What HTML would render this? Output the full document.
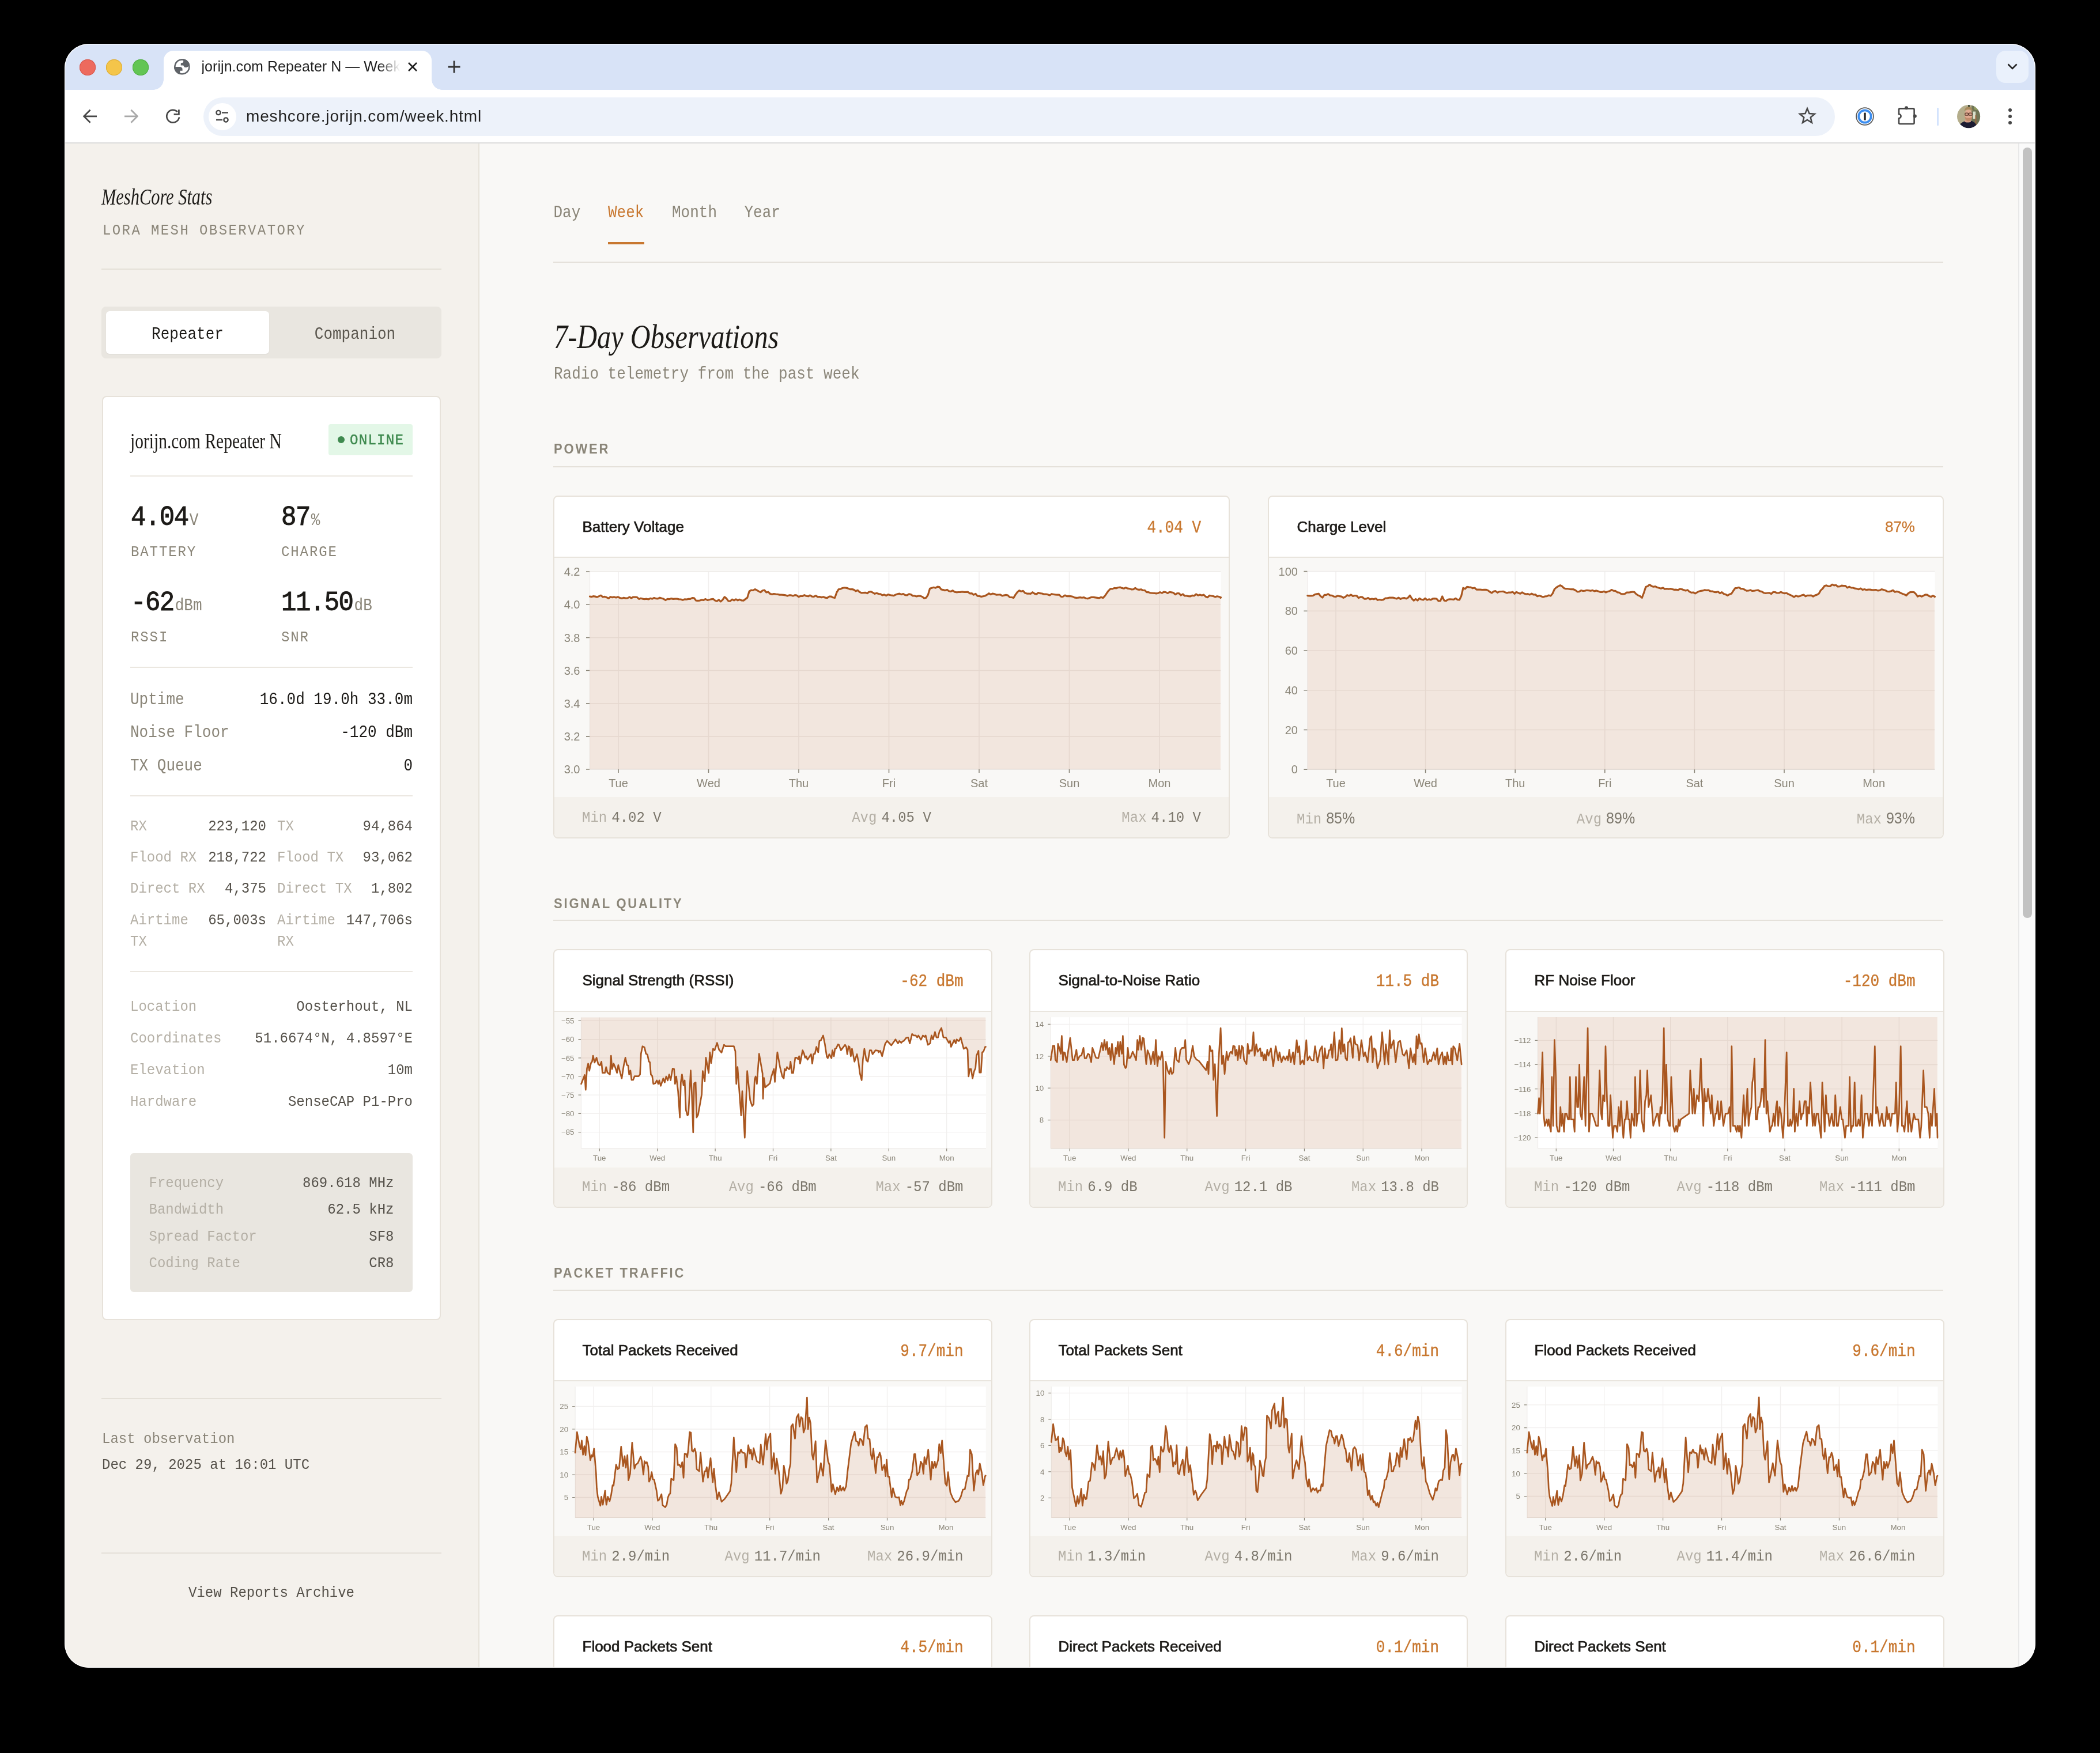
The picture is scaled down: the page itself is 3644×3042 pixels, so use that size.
<!DOCTYPE html>
<html><head><meta charset="utf-8"><title>MeshCore Stats</title>
<style>
html,body{margin:0;padding:0;background:#000;}
body{width:3644px;height:3042px;position:relative;overflow:hidden;}
#win{will-change:transform;position:absolute;left:0;top:0;width:3644px;height:3042px;clip-path:inset(76px 112px 148px 112px round 42px);background:#f9f8f6;}
.t{position:absolute;white-space:nowrap;}
.r{position:absolute;}
svg.r{overflow:visible;}
</style></head><body>
<div id="win">
<div class="r" style="left:112.00px;top:76.00px;width:3420.00px;height:80.00px;background:#d8e3f7;"></div>
<div class="r" style="left:138.00px;top:103.00px;width:28.00px;height:28.00px;background:#ed6a5e;border-radius:14px;box-shadow:inset 0 0 0 1px #d8574c;"></div>
<div class="r" style="left:184.00px;top:103.00px;width:28.00px;height:28.00px;background:#f4c54a;border-radius:14px;box-shadow:inset 0 0 0 1px #dcab33;"></div>
<div class="r" style="left:230.00px;top:103.00px;width:28.00px;height:28.00px;background:#62c554;border-radius:14px;box-shadow:inset 0 0 0 1px #4fae42;"></div>
<div class="r" style="left:284px;top:88px;width:465px;height:68px;background:#fff;border-radius:17px 17px 0 0;"></div>
<div class="r" style="left:266px;top:138px;width:18px;height:18px;background:radial-gradient(circle at 0 0, transparent 17.5px, #fff 18px);"></div>
<div class="r" style="left:749px;top:138px;width:18px;height:18px;background:radial-gradient(circle at 100% 0, transparent 17.5px, #fff 18px);"></div>
<svg class="r" style="left:302px;top:102.2px" width="27.8" height="27.8" viewBox="0 0 24 24"><defs><clipPath id="gl"><circle cx="12" cy="12" r="12"/></clipPath></defs><g clip-path="url(#gl)"><circle cx="12" cy="12" r="12" fill="#5f6368"/><circle cx="12" cy="12" r="9.7" fill="#fff"/><path d="M13.94 0 V4.56 C13.9 5.3 13.3 5.9 12.4 6.05 L10.82 6.25 C10.4 6.4 10.14 6.9 10.14 7.44 V9.97 H13.69 C14.2 10.2 14.6 10.9 15.0 11.9 C15.5 12.7 16.4 13.05 17.58 13.02 C19 13 20.5 12.3 22 10.8 L26 0 Z" fill="#5f6368"/><path d="M-2 12.17 H8.79 C10.9 12.3 12.5 13.6 12.6 15.3 V17.91 H8.96 V26 H-2 Z" fill="#5f6368"/></g></svg>
<div class="t" style="top:102.83px;font-size:25px;line-height:25px;font-family:'Liberation Sans', sans-serif;color:#1f1f1f;letter-spacing:0.05px;left:349.50px;width:344px;white-space:nowrap;overflow:hidden;-webkit-mask-image:linear-gradient(to right,#000 calc(100% - 36px),transparent 100%);">jorijn.com Repeater N — Week</div>
<svg class="r" style="left:704px;top:104px" width="24" height="24" viewBox="0 0 24 24"><path d="M5 5 L19 19 M19 5 L5 19" stroke="#1f1f1f" stroke-width="2.6" stroke-linecap="butt"/></svg>
<svg class="r" style="left:775px;top:103px" width="26" height="26" viewBox="0 0 26 26"><path d="M13 2.5 V23.5 M2.5 13 H23.5" stroke="#333" stroke-width="2.8"/></svg>
<div class="r" style="left:3464.00px;top:88.00px;width:56.00px;height:56.00px;background:#eaf1fc;border-radius:16px;"></div>
<svg class="r" style="left:3480px;top:103px" width="24" height="24" viewBox="0 0 24 24"><path d="M4.5 8.5 L12 16 L19.5 8.5" stroke="#1f1f1f" stroke-width="2.6" fill="none"/></svg>
<div class="r" style="left:112.00px;top:156.00px;width:3420.00px;height:92.00px;background:#fff;"></div>
<div class="r" style="left:112.00px;top:247.00px;width:3420.00px;height:2.00px;background:#dcdcdc;"></div>
<svg class="r" style="left:140px;top:186px" width="32" height="32" viewBox="0 0 32 32"><path d="M16.6 4.8 L5.6 15.8 L16.6 26.8 M5.8 15.8 H28" stroke="#474747" stroke-width="2.7" fill="none"/></svg>
<svg class="r" style="left:212px;top:186px" width="32" height="32" viewBox="0 0 32 32"><path d="M15.4 4.8 L26.4 15.8 L15.4 26.8 M26.2 15.8 H4" stroke="#a8a8a8" stroke-width="2.7" fill="none"/></svg>
<svg class="r" style="left:284px;top:186px" width="32" height="32" viewBox="0 0 32 32"><path d="M26.97 17.4 A10.9 10.9 0 1 1 23.9 8.0" stroke="#474747" stroke-width="2.7" fill="none"/><path d="M26.4 4.3 V12.4 H17.6" stroke="#474747" stroke-width="2.7" fill="none"/></svg>
<div class="r" style="left:353.00px;top:168.50px;width:2831.00px;height:67.50px;background:#edf2fa;border-radius:34px;"></div>
<div class="r" style="left:362.00px;top:178.50px;width:47.50px;height:47.50px;background:#fff;border-radius:24px;"></div>
<svg class="r" style="left:371px;top:187px" width="30" height="30" viewBox="0 0 30 30"><circle cx="8" cy="8.5" r="3.6" stroke="#474747" stroke-width="2.4" fill="none"/><path d="M14 8.5 H25" stroke="#474747" stroke-width="2.4"/><circle cx="21" cy="21" r="3.6" stroke="#474747" stroke-width="2.4" fill="none"/><path d="M4 21 H15" stroke="#474747" stroke-width="2.4"/></svg>
<div class="t" style="top:187.79px;font-size:28px;line-height:28px;font-family:'Liberation Sans', sans-serif;color:#1f1f1f;letter-spacing:0.85px;left:427.00px;">meshcore.jorijn.com/week.html</div>
<svg class="r" style="left:3118px;top:183px" width="36" height="36" viewBox="0 0 36 36"><path d="M18.00 5.30 L21.53 14.05 L30.93 14.70 L23.71 20.75 L25.99 29.90 L18.00 24.90 L10.01 29.90 L12.29 20.75 L5.07 14.70 L14.47 14.05 Z" stroke="#474747" stroke-width="2.5" fill="none" stroke-linejoin="miter"/></svg>
<svg class="r" style="left:3218px;top:183.5px" width="36" height="36" viewBox="0 0 36 36"><circle cx="18" cy="18" r="14.9" fill="#fff" stroke="#5a5a5a" stroke-width="1.7"/><circle cx="18" cy="18" r="10.7" fill="none" stroke="#3d8ef0" stroke-width="3.8"/><rect x="16.4" y="11.6" width="3.3" height="13" fill="#222"/></svg>
<svg class="r" style="left:3290px;top:182px" width="40" height="40" viewBox="0 0 40 40"><path d="M7 6.4 H29.6 Q31.6 6.4 31.6 8.4 V31 Q31.6 33 29.6 33 H7 Q5 33 5 31 V23.2 A3.6 3.6 0 0 0 5 16 V8.4 Q5 6.4 7 6.4 Z" stroke="#474747" stroke-width="2.6" fill="none"/><circle cx="18" cy="5.2" r="3" fill="#474747"/><circle cx="32.8" cy="19.6" r="3" fill="#474747"/></svg>
<div class="r" style="left:3361.00px;top:186.50px;width:2.50px;height:31.00px;background:#d3e3fd;border-radius:1px;"></div>
<svg class="r" style="left:3396px;top:182px" width="40.2" height="40.2" viewBox="0 0 40 40"><defs><clipPath id="av"><circle cx="20" cy="20" r="20"/></clipPath><filter id="avb"><feGaussianBlur stdDeviation="0.5"/></filter></defs><g clip-path="url(#av)"><g filter="url(#avb)"><rect x="-2" y="-2" width="44" height="44" fill="#b4ad8b"/><rect x="25" y="-2" width="17" height="44" fill="#6f7556"/><rect x="27.5" y="11.5" width="4.5" height="12.5" fill="#d9dfcb"/><circle cx="33" cy="5" r="4" fill="#8f9a62"/><rect x="31.3" y="18" width="2" height="20" fill="#a0653f"/><rect x="19" y="0" width="3" height="4" fill="#3f4a35"/><path d="M12.5 28 C10 30 6 31 3 36 L3 42 L35 42 L33 34 C31 30 28 28.5 25 27.5 Z" fill="#1c1e33"/><path d="M13 26 L23 26 L24 29 C21 31 15 31 12.5 28.5 Z" fill="#d89f86"/><ellipse cx="19.6" cy="17.5" rx="6.8" ry="9.6" fill="#e2ab92"/><path d="M13.2 20 C13.5 25 16 28.2 19.5 28.4 C23.5 28.2 26 25 26.2 20 C24 23 21 22.5 19.5 22.5 C17 22.5 15 22.5 13.2 20 Z" fill="#c38c6c"/><path d="M12.6 11 C12.8 6 16 3.4 20 3.4 C24 3.4 26.6 6 26.8 11 C25 8.4 22 8 19.6 8 C16.5 8 14 9 12.6 11 Z" fill="#a98a5c"/><rect x="13.8" y="14" width="5.4" height="4" rx="1.2" fill="none" stroke="#5a382c" stroke-width="1.3"/><rect x="20.4" y="14" width="5.6" height="4" rx="1.2" fill="none" stroke="#5a382c" stroke-width="1.3"/></g></g></svg>
<div class="r" style="left:3485.00px;top:188.00px;width:6.00px;height:6.00px;background:#474747;border-radius:3px;"></div>
<div class="r" style="left:3485.00px;top:199.00px;width:6.00px;height:6.00px;background:#474747;border-radius:3px;"></div>
<div class="r" style="left:3485.00px;top:210.00px;width:6.00px;height:6.00px;background:#474747;border-radius:3px;"></div>
<div class="r" style="left:112.00px;top:249.00px;width:720.00px;height:2645.00px;background:#f4f1ec;"></div>
<div class="r" style="left:830.00px;top:249.00px;width:2.00px;height:2645.00px;background:#e6e2da;"></div>
<div class="r" style="left:832.00px;top:249.00px;width:2671.00px;height:2645.00px;background:#f9f8f6;"></div>
<div class="r" style="left:3503.00px;top:249.00px;width:29.00px;height:2645.00px;background:#fafafa;"></div>
<div class="r" style="left:3502.00px;top:249.00px;width:2.00px;height:2645.00px;background:#e8e8e8;"></div>
<div class="r" style="left:3510.00px;top:256.00px;width:16.00px;height:1337.00px;background:#c2c2c2;border-radius:8px;"></div>
<div class="t" style="top:321.84px;font-size:39px;line-height:39px;font-family:'Liberation Serif', serif;color:#1c1a17;left:176.00px;transform:scaleX(0.78);transform-origin:0 0;font-style:italic;">MeshCore Stats</div>
<div class="t" style="top:389.11px;font-size:24px;line-height:24px;font-family:'Liberation Mono', monospace;color:#8a8578;letter-spacing:2.4px;left:178.00px;transform:scaleY(1.1);transform-origin:0 18.40px;">LORA MESH OBSERVATORY</div>
<div class="r" style="left:176.00px;top:466.00px;width:590.00px;height:2.00px;background:#e4e0d8;"></div>
<div class="r" style="left:176.00px;top:532.00px;width:590.00px;height:90.00px;background:#e9e6e0;border-radius:8px;"></div>
<div class="r" style="left:184.00px;top:540.00px;width:283.00px;height:74.00px;background:#fff;border-radius:6px;box-shadow:0 1px 2px rgba(0,0,0,0.06);"></div>
<div class="t" style="top:567.58px;font-size:26px;line-height:26px;font-family:'Liberation Mono', monospace;color:#1c1a17;left:-674.50px;width:2000px;text-align:center;transform:scaleY(1.1);transform-origin:0 19.93px;">Repeater</div>
<div class="t" style="top:567.58px;font-size:26px;line-height:26px;font-family:'Liberation Mono', monospace;color:#5a564e;left:-384.00px;width:2000px;text-align:center;transform:scaleY(1.1);transform-origin:0 19.93px;">Companion</div>
<div class="r" style="left:177.00px;top:687.00px;width:588.00px;height:1604.00px;background:#fff;border:2px solid #e7e2da;box-sizing:border-box;border-radius:8px;"></div>
<div class="t" style="top:745.68px;font-size:38px;line-height:38px;font-family:'Liberation Serif', serif;color:#1c1a17;left:226.00px;transform:scaleX(0.776);transform-origin:0 0;">jorijn.com Repeater N</div>
<div class="r" style="left:570.00px;top:736.00px;width:146.00px;height:54.00px;background:#e3f7e7;border-radius:4px;"></div>
<div class="r" style="left:586.00px;top:757.00px;width:12.00px;height:12.00px;background:#3f8a4f;border-radius:6px;"></div>
<div class="t" style="top:753.11px;font-size:24px;line-height:24px;font-family:'Liberation Mono', monospace;color:#3f8a4f;letter-spacing:1.3px;left:607.00px;transform:scaleY(1.1);transform-origin:0 18.40px;-webkit-text-stroke:0.5px #3f8a4f;">ONLINE</div>
<div class="r" style="left:226.00px;top:825.00px;width:490.00px;height:2.00px;background:#ebe7e0;"></div>
<div class="t" style="left:227px;top:876.77px;font-size:44px;line-height:44px;font-family:'Liberation Mono', monospace;color:#1c1a17;white-space:nowrap;transform:scaleY(1.11);transform-origin:0 33.73px;"><span style="letter-spacing:-1.5px;-webkit-text-stroke:0.9px #1c1a17;">4.04</span><span style="font-size:26px;color:#8a8578;margin-left:2px;">V</span></div>
<div class="t" style="top:947.11px;font-size:24px;line-height:24px;font-family:'Liberation Mono', monospace;color:#8a8578;letter-spacing:1.9px;left:227.00px;transform:scaleY(1.1);transform-origin:0 18.40px;">BATTERY</div>
<div class="t" style="left:488px;top:876.77px;font-size:44px;line-height:44px;font-family:'Liberation Mono', monospace;color:#1c1a17;white-space:nowrap;transform:scaleY(1.11);transform-origin:0 33.73px;"><span style="letter-spacing:-1.5px;-webkit-text-stroke:0.9px #1c1a17;">87</span><span style="font-size:26px;color:#8a8578;margin-left:2px;">%</span></div>
<div class="t" style="top:947.11px;font-size:24px;line-height:24px;font-family:'Liberation Mono', monospace;color:#8a8578;letter-spacing:1.9px;left:488.00px;transform:scaleY(1.1);transform-origin:0 18.40px;">CHARGE</div>
<div class="t" style="left:227px;top:1025.27px;font-size:44px;line-height:44px;font-family:'Liberation Mono', monospace;color:#1c1a17;white-space:nowrap;transform:scaleY(1.11);transform-origin:0 33.73px;"><span style="letter-spacing:-1.5px;-webkit-text-stroke:0.9px #1c1a17;">-62</span><span style="font-size:26px;color:#8a8578;margin-left:2px;">dBm</span></div>
<div class="t" style="top:1094.61px;font-size:24px;line-height:24px;font-family:'Liberation Mono', monospace;color:#8a8578;letter-spacing:1.9px;left:227.00px;transform:scaleY(1.1);transform-origin:0 18.40px;">RSSI</div>
<div class="t" style="left:488px;top:1025.27px;font-size:44px;line-height:44px;font-family:'Liberation Mono', monospace;color:#1c1a17;white-space:nowrap;transform:scaleY(1.11);transform-origin:0 33.73px;"><span style="letter-spacing:-1.5px;-webkit-text-stroke:0.9px #1c1a17;">11.50</span><span style="font-size:26px;color:#8a8578;margin-left:2px;">dB</span></div>
<div class="t" style="top:1094.61px;font-size:24px;line-height:24px;font-family:'Liberation Mono', monospace;color:#8a8578;letter-spacing:1.9px;left:488.00px;transform:scaleY(1.1);transform-origin:0 18.40px;">SNR</div>
<div class="r" style="left:226.00px;top:1157.00px;width:490.00px;height:2.00px;background:#ebe7e0;"></div>
<div class="t" style="top:1201.78px;font-size:26px;line-height:26px;font-family:'Liberation Mono', monospace;color:#8a8578;left:226.00px;transform:scaleY(1.1);transform-origin:0 19.93px;">Uptime</div>
<div class="t" style="top:1201.78px;font-size:26px;line-height:26px;font-family:'Liberation Mono', monospace;color:#1c1a17;right:2928.00px;text-align:right;transform:scaleY(1.1);transform-origin:0 19.93px;">16.0d 19.0h 33.0m</div>
<div class="t" style="top:1259.18px;font-size:26px;line-height:26px;font-family:'Liberation Mono', monospace;color:#8a8578;left:226.00px;transform:scaleY(1.1);transform-origin:0 19.93px;">Noise Floor</div>
<div class="t" style="top:1259.18px;font-size:26px;line-height:26px;font-family:'Liberation Mono', monospace;color:#1c1a17;right:2928.00px;text-align:right;transform:scaleY(1.1);transform-origin:0 19.93px;">-120 dBm</div>
<div class="t" style="top:1316.58px;font-size:26px;line-height:26px;font-family:'Liberation Mono', monospace;color:#8a8578;left:226.00px;transform:scaleY(1.1);transform-origin:0 19.93px;">TX Queue</div>
<div class="t" style="top:1316.58px;font-size:26px;line-height:26px;font-family:'Liberation Mono', monospace;color:#1c1a17;right:2928.00px;text-align:right;transform:scaleY(1.1);transform-origin:0 19.93px;">0</div>
<div class="r" style="left:226.00px;top:1380.00px;width:490.00px;height:2.00px;background:#ebe7e0;"></div>
<div class="t" style="top:1423.11px;font-size:24px;line-height:24px;font-family:'Liberation Mono', monospace;color:#b4afa5;left:226.00px;transform:scaleY(1.1);transform-origin:0 18.40px;">RX</div>
<div class="t" style="top:1423.11px;font-size:24px;line-height:24px;font-family:'Liberation Mono', monospace;color:#55514a;right:3182.00px;text-align:right;transform:scaleY(1.1);transform-origin:0 18.40px;">223,120</div>
<div class="t" style="top:1423.11px;font-size:24px;line-height:24px;font-family:'Liberation Mono', monospace;color:#b4afa5;left:481.00px;transform:scaleY(1.1);transform-origin:0 18.40px;">TX</div>
<div class="t" style="top:1423.11px;font-size:24px;line-height:24px;font-family:'Liberation Mono', monospace;color:#55514a;right:2928.00px;text-align:right;transform:scaleY(1.1);transform-origin:0 18.40px;">94,864</div>
<div class="t" style="top:1476.81px;font-size:24px;line-height:24px;font-family:'Liberation Mono', monospace;color:#b4afa5;left:226.00px;transform:scaleY(1.1);transform-origin:0 18.40px;">Flood RX</div>
<div class="t" style="top:1476.81px;font-size:24px;line-height:24px;font-family:'Liberation Mono', monospace;color:#55514a;right:3182.00px;text-align:right;transform:scaleY(1.1);transform-origin:0 18.40px;">218,722</div>
<div class="t" style="top:1476.81px;font-size:24px;line-height:24px;font-family:'Liberation Mono', monospace;color:#b4afa5;left:481.00px;transform:scaleY(1.1);transform-origin:0 18.40px;">Flood TX</div>
<div class="t" style="top:1476.81px;font-size:24px;line-height:24px;font-family:'Liberation Mono', monospace;color:#55514a;right:2928.00px;text-align:right;transform:scaleY(1.1);transform-origin:0 18.40px;">93,062</div>
<div class="t" style="top:1530.51px;font-size:24px;line-height:24px;font-family:'Liberation Mono', monospace;color:#b4afa5;left:226.00px;transform:scaleY(1.1);transform-origin:0 18.40px;">Direct RX</div>
<div class="t" style="top:1530.51px;font-size:24px;line-height:24px;font-family:'Liberation Mono', monospace;color:#55514a;right:3182.00px;text-align:right;transform:scaleY(1.1);transform-origin:0 18.40px;">4,375</div>
<div class="t" style="top:1530.51px;font-size:24px;line-height:24px;font-family:'Liberation Mono', monospace;color:#b4afa5;left:481.00px;transform:scaleY(1.1);transform-origin:0 18.40px;">Direct TX</div>
<div class="t" style="top:1530.51px;font-size:24px;line-height:24px;font-family:'Liberation Mono', monospace;color:#55514a;right:2928.00px;text-align:right;transform:scaleY(1.1);transform-origin:0 18.40px;">1,802</div>
<div class="t" style="top:1585.61px;font-size:24px;line-height:24px;font-family:'Liberation Mono', monospace;color:#b4afa5;left:226.00px;transform:scaleY(1.1);transform-origin:0 18.40px;">Airtime</div>
<div class="t" style="top:1622.61px;font-size:24px;line-height:24px;font-family:'Liberation Mono', monospace;color:#b4afa5;left:226.00px;transform:scaleY(1.1);transform-origin:0 18.40px;">TX</div>
<div class="t" style="top:1585.61px;font-size:24px;line-height:24px;font-family:'Liberation Mono', monospace;color:#55514a;right:3182.00px;text-align:right;transform:scaleY(1.1);transform-origin:0 18.40px;">65,003s</div>
<div class="t" style="top:1585.61px;font-size:24px;line-height:24px;font-family:'Liberation Mono', monospace;color:#b4afa5;left:481.00px;transform:scaleY(1.1);transform-origin:0 18.40px;">Airtime</div>
<div class="t" style="top:1622.61px;font-size:24px;line-height:24px;font-family:'Liberation Mono', monospace;color:#b4afa5;left:481.00px;transform:scaleY(1.1);transform-origin:0 18.40px;">RX</div>
<div class="t" style="top:1585.61px;font-size:24px;line-height:24px;font-family:'Liberation Mono', monospace;color:#55514a;right:2928.00px;text-align:right;transform:scaleY(1.1);transform-origin:0 18.40px;">147,706s</div>
<div class="r" style="left:226.00px;top:1685.00px;width:490.00px;height:2.00px;background:#ebe7e0;"></div>
<div class="t" style="top:1736.41px;font-size:24px;line-height:24px;font-family:'Liberation Mono', monospace;color:#b4afa5;left:226.00px;transform:scaleY(1.1);transform-origin:0 18.40px;">Location</div>
<div class="t" style="top:1736.41px;font-size:24px;line-height:24px;font-family:'Liberation Mono', monospace;color:#55514a;right:2928.00px;text-align:right;transform:scaleY(1.1);transform-origin:0 18.40px;">Oosterhout, NL</div>
<div class="t" style="top:1791.11px;font-size:24px;line-height:24px;font-family:'Liberation Mono', monospace;color:#b4afa5;left:226.00px;transform:scaleY(1.1);transform-origin:0 18.40px;">Coordinates</div>
<div class="t" style="top:1791.11px;font-size:24px;line-height:24px;font-family:'Liberation Mono', monospace;color:#55514a;right:2928.00px;text-align:right;transform:scaleY(1.1);transform-origin:0 18.40px;">51.6674°N, 4.8597°E</div>
<div class="t" style="top:1845.81px;font-size:24px;line-height:24px;font-family:'Liberation Mono', monospace;color:#b4afa5;left:226.00px;transform:scaleY(1.1);transform-origin:0 18.40px;">Elevation</div>
<div class="t" style="top:1845.81px;font-size:24px;line-height:24px;font-family:'Liberation Mono', monospace;color:#55514a;right:2928.00px;text-align:right;transform:scaleY(1.1);transform-origin:0 18.40px;">10m</div>
<div class="t" style="top:1900.51px;font-size:24px;line-height:24px;font-family:'Liberation Mono', monospace;color:#b4afa5;left:226.00px;transform:scaleY(1.1);transform-origin:0 18.40px;">Hardware</div>
<div class="t" style="top:1900.51px;font-size:24px;line-height:24px;font-family:'Liberation Mono', monospace;color:#55514a;right:2928.00px;text-align:right;transform:scaleY(1.1);transform-origin:0 18.40px;">SenseCAP P1-Pro</div>
<div class="r" style="left:226.00px;top:2001.00px;width:490.00px;height:241.00px;background:#e9e6e0;border-radius:6px;"></div>
<div class="t" style="top:2042.01px;font-size:24px;line-height:24px;font-family:'Liberation Mono', monospace;color:#b4afa5;left:258.50px;transform:scaleY(1.1);transform-origin:0 18.40px;">Frequency</div>
<div class="t" style="top:2042.01px;font-size:24px;line-height:24px;font-family:'Liberation Mono', monospace;color:#55514a;right:2960.50px;text-align:right;transform:scaleY(1.1);transform-origin:0 18.40px;">869.618 MHz</div>
<div class="t" style="top:2088.31px;font-size:24px;line-height:24px;font-family:'Liberation Mono', monospace;color:#b4afa5;left:258.50px;transform:scaleY(1.1);transform-origin:0 18.40px;">Bandwidth</div>
<div class="t" style="top:2088.31px;font-size:24px;line-height:24px;font-family:'Liberation Mono', monospace;color:#55514a;right:2960.50px;text-align:right;transform:scaleY(1.1);transform-origin:0 18.40px;">62.5 kHz</div>
<div class="t" style="top:2134.61px;font-size:24px;line-height:24px;font-family:'Liberation Mono', monospace;color:#b4afa5;left:258.50px;transform:scaleY(1.1);transform-origin:0 18.40px;">Spread Factor</div>
<div class="t" style="top:2134.61px;font-size:24px;line-height:24px;font-family:'Liberation Mono', monospace;color:#55514a;right:2960.50px;text-align:right;transform:scaleY(1.1);transform-origin:0 18.40px;">SF8</div>
<div class="t" style="top:2180.91px;font-size:24px;line-height:24px;font-family:'Liberation Mono', monospace;color:#b4afa5;left:258.50px;transform:scaleY(1.1);transform-origin:0 18.40px;">Coding Rate</div>
<div class="t" style="top:2180.91px;font-size:24px;line-height:24px;font-family:'Liberation Mono', monospace;color:#55514a;right:2960.50px;text-align:right;transform:scaleY(1.1);transform-origin:0 18.40px;">CR8</div>
<div class="r" style="left:176.00px;top:2426.00px;width:590.00px;height:2.00px;background:#e4e0d8;"></div>
<div class="t" style="top:2485.61px;font-size:24px;line-height:24px;font-family:'Liberation Mono', monospace;color:#8a8578;left:177.00px;transform:scaleY(1.1);transform-origin:0 18.40px;">Last observation</div>
<div class="t" style="top:2531.11px;font-size:24px;line-height:24px;font-family:'Liberation Mono', monospace;color:#55514a;left:177.00px;transform:scaleY(1.1);transform-origin:0 18.40px;">Dec 29, 2025 at 16:01 UTC</div>
<div class="r" style="left:176.00px;top:2694.00px;width:590.00px;height:2.00px;background:#e4e0d8;"></div>
<div class="t" style="top:2753.11px;font-size:24px;line-height:24px;font-family:'Liberation Mono', monospace;color:#55514a;left:-529.00px;width:2000px;text-align:center;transform:scaleY(1.1);transform-origin:0 18.40px;">View Reports Archive</div>
<div class="t" style="top:356.78px;font-size:26px;line-height:26px;font-family:'Liberation Mono', monospace;color:#8a8578;left:960.50px;transform:scaleY(1.1);transform-origin:0 19.93px;">Day</div>
<div class="t" style="top:356.78px;font-size:26px;line-height:26px;font-family:'Liberation Mono', monospace;color:#c8772f;left:1055.00px;transform:scaleY(1.1);transform-origin:0 19.93px;">Week</div>
<div class="t" style="top:356.78px;font-size:26px;line-height:26px;font-family:'Liberation Mono', monospace;color:#8a8578;left:1166.00px;transform:scaleY(1.1);transform-origin:0 19.93px;">Month</div>
<div class="t" style="top:356.78px;font-size:26px;line-height:26px;font-family:'Liberation Mono', monospace;color:#8a8578;left:1291.50px;transform:scaleY(1.1);transform-origin:0 19.93px;">Year</div>
<div class="r" style="left:1055.00px;top:420.00px;width:62.50px;height:4.00px;background:#c8772f;"></div>
<div class="r" style="left:960.00px;top:454.00px;width:2412.00px;height:2.00px;background:#e5e1da;"></div>
<div class="t" style="top:553.76px;font-size:60px;line-height:60px;font-family:'Liberation Serif', serif;color:#1c1a17;left:961.00px;transform:scaleX(0.805);transform-origin:0 0;font-style:italic;">7-Day Observations</div>
<div class="t" style="top:637.38px;font-size:26px;line-height:26px;font-family:'Liberation Mono', monospace;color:#8a8578;left:961.00px;transform:scaleY(1.1);transform-origin:0 19.93px;">Radio telemetry from the past week</div>
<div class="t" style="top:769.37px;font-size:22px;line-height:22px;font-family:'Liberation Sans', sans-serif;color:#8a8578;letter-spacing:2.8px;font-weight:700;left:961.00px;transform:scaleY(1.12);transform-origin:0 18.62px;">POWER</div>
<div class="r" style="left:960.00px;top:808.50px;width:2412.00px;height:2.00px;background:#e5e1da;"></div>
<div class="t" style="top:1558.37px;font-size:22px;line-height:22px;font-family:'Liberation Sans', sans-serif;color:#8a8578;letter-spacing:2.8px;font-weight:700;left:961.00px;transform:scaleY(1.12);transform-origin:0 18.62px;">SIGNAL QUALITY</div>
<div class="r" style="left:960.00px;top:1596.00px;width:2412.00px;height:2.00px;background:#e5e1da;"></div>
<div class="t" style="top:2199.37px;font-size:22px;line-height:22px;font-family:'Liberation Sans', sans-serif;color:#8a8578;letter-spacing:2.8px;font-weight:700;left:961.00px;transform:scaleY(1.12);transform-origin:0 18.62px;">PACKET TRAFFIC</div>
<div class="r" style="left:960.00px;top:2237.50px;width:2412.00px;height:2.00px;background:#e5e1da;"></div>
<div class="r" style="left:960.00px;top:860.00px;width:1174.00px;height:595.00px;background:#fff;border:2px solid #e7e2da;box-sizing:border-box;border-radius:8px;"></div>
<div class="r" style="left:962.00px;top:966.00px;width:1170.00px;height:2.00px;background:#e9e5de;"></div>
<div class="r" style="left:962.00px;top:968.00px;width:1170.00px;height:415.00px;background:#f9f8f6;"></div>
<div class="r" style="left:962.00px;top:1383.00px;width:1170.00px;height:70.00px;background:#f4f1ec;border-radius:0 0 6px 6px;"></div>
<div class="t" style="top:901.49px;font-size:26px;line-height:26px;font-family:'Liberation Sans', sans-serif;color:#1c1a17;left:1010.50px;-webkit-text-stroke:0.7px #1c1a17;">Battery Voltage</div>
<div class="t" style="top:903.58px;font-size:26px;line-height:26px;font-family:'Liberation Mono', monospace;color:#c8772f;right:1560.00px;text-align:right;transform:scaleY(1.1);transform-origin:0 19.93px;-webkit-text-stroke:0.35px #c8772f;">4.04 V</div>
<div class="t" style="top:1407.91px;font-size:24px;line-height:24px;font-family:'Liberation Mono', monospace;color:#1c1a17;left:1010.00px;transform:scaleY(1.1);transform-origin:0 18.40px;white-space:nowrap;"><span style="color:#b4afa5">Min</span><span style="color:#7b766b;margin-left:8px">4.02 V</span></div>
<div class="t" style="top:1407.91px;font-size:24px;line-height:24px;font-family:'Liberation Mono', monospace;color:#1c1a17;left:547.00px;width:2000px;text-align:center;transform:scaleY(1.1);transform-origin:0 18.40px;white-space:nowrap;"><span style="color:#b4afa5">Avg</span><span style="color:#7b766b;margin-left:8px">4.05 V</span></div>
<div class="t" style="top:1407.91px;font-size:24px;line-height:24px;font-family:'Liberation Mono', monospace;color:#1c1a17;right:1560.00px;text-align:right;transform:scaleY(1.1);transform-origin:0 18.40px;white-space:nowrap;"><span style="color:#b4afa5">Max</span><span style="color:#7b766b;margin-left:8px">4.10 V</span></div>
<div class="r" style="left:2200.00px;top:860.00px;width:1173.00px;height:595.00px;background:#fff;border:2px solid #e7e2da;box-sizing:border-box;border-radius:8px;"></div>
<div class="r" style="left:2202.00px;top:966.00px;width:1169.00px;height:2.00px;background:#e9e5de;"></div>
<div class="r" style="left:2202.00px;top:968.00px;width:1169.00px;height:415.00px;background:#f9f8f6;"></div>
<div class="r" style="left:2202.00px;top:1383.00px;width:1169.00px;height:70.00px;background:#f4f1ec;border-radius:0 0 6px 6px;"></div>
<div class="t" style="top:901.49px;font-size:26px;line-height:26px;font-family:'Liberation Sans', sans-serif;color:#1c1a17;left:2250.50px;-webkit-text-stroke:0.7px #1c1a17;">Charge Level</div>
<div class="t" style="top:901.49px;font-size:26px;line-height:26px;font-family:'Liberation Sans', sans-serif;color:#c8772f;right:321.00px;text-align:right;-webkit-text-stroke:0.3px #c8772f;">87%</div>
<div class="t" style="top:1407.91px;font-size:24px;line-height:24px;font-family:'Liberation Mono', monospace;color:#1c1a17;left:2250.00px;transform:scaleY(1.1);transform-origin:0 18.40px;white-space:nowrap;"><span style="color:#b4afa5">Min</span><span style="color:#7b766b;font-family:'Liberation Sans', sans-serif;font-size:25px;margin-left:8px">85%</span></div>
<div class="t" style="top:1407.91px;font-size:24px;line-height:24px;font-family:'Liberation Mono', monospace;color:#1c1a17;left:1786.50px;width:2000px;text-align:center;transform:scaleY(1.1);transform-origin:0 18.40px;white-space:nowrap;"><span style="color:#b4afa5">Avg</span><span style="color:#7b766b;font-family:'Liberation Sans', sans-serif;font-size:25px;margin-left:8px">89%</span></div>
<div class="t" style="top:1407.91px;font-size:24px;line-height:24px;font-family:'Liberation Mono', monospace;color:#1c1a17;right:321.00px;text-align:right;transform:scaleY(1.1);transform-origin:0 18.40px;white-space:nowrap;"><span style="color:#b4afa5">Max</span><span style="color:#7b766b;font-family:'Liberation Sans', sans-serif;font-size:25px;margin-left:8px">93%</span></div>
<div class="r" style="left:960.00px;top:1647.00px;width:761.50px;height:448.50px;background:#fff;border:2px solid #e7e2da;box-sizing:border-box;border-radius:8px;"></div>
<div class="r" style="left:962.00px;top:1754.00px;width:757.50px;height:2.00px;background:#e9e5de;"></div>
<div class="r" style="left:962.00px;top:1756.00px;width:757.50px;height:269.50px;background:#f9f8f6;"></div>
<div class="r" style="left:962.00px;top:2025.50px;width:757.50px;height:68.00px;background:#f4f1ec;border-radius:0 0 6px 6px;"></div>
<div class="t" style="top:1688.49px;font-size:26px;line-height:26px;font-family:'Liberation Sans', sans-serif;color:#1c1a17;left:1010.50px;-webkit-text-stroke:0.7px #1c1a17;">Signal Strength (RSSI)</div>
<div class="t" style="top:1690.58px;font-size:26px;line-height:26px;font-family:'Liberation Mono', monospace;color:#c8772f;right:1972.50px;text-align:right;transform:scaleY(1.1);transform-origin:0 19.93px;-webkit-text-stroke:0.35px #c8772f;">-62 dBm</div>
<div class="t" style="top:2049.41px;font-size:24px;line-height:24px;font-family:'Liberation Mono', monospace;color:#1c1a17;left:1010.00px;transform:scaleY(1.1);transform-origin:0 18.40px;white-space:nowrap;"><span style="color:#b4afa5">Min</span><span style="color:#7b766b;margin-left:8px">-86 dBm</span></div>
<div class="t" style="top:2049.41px;font-size:24px;line-height:24px;font-family:'Liberation Mono', monospace;color:#1c1a17;left:340.75px;width:2000px;text-align:center;transform:scaleY(1.1);transform-origin:0 18.40px;white-space:nowrap;"><span style="color:#b4afa5">Avg</span><span style="color:#7b766b;margin-left:8px">-66 dBm</span></div>
<div class="t" style="top:2049.41px;font-size:24px;line-height:24px;font-family:'Liberation Mono', monospace;color:#1c1a17;right:1972.50px;text-align:right;transform:scaleY(1.1);transform-origin:0 18.40px;white-space:nowrap;"><span style="color:#b4afa5">Max</span><span style="color:#7b766b;margin-left:8px">-57 dBm</span></div>
<div class="r" style="left:1786.00px;top:1647.00px;width:761.00px;height:448.50px;background:#fff;border:2px solid #e7e2da;box-sizing:border-box;border-radius:8px;"></div>
<div class="r" style="left:1788.00px;top:1754.00px;width:757.00px;height:2.00px;background:#e9e5de;"></div>
<div class="r" style="left:1788.00px;top:1756.00px;width:757.00px;height:269.50px;background:#f9f8f6;"></div>
<div class="r" style="left:1788.00px;top:2025.50px;width:757.00px;height:68.00px;background:#f4f1ec;border-radius:0 0 6px 6px;"></div>
<div class="t" style="top:1688.49px;font-size:26px;line-height:26px;font-family:'Liberation Sans', sans-serif;color:#1c1a17;left:1836.50px;-webkit-text-stroke:0.7px #1c1a17;">Signal-to-Noise Ratio</div>
<div class="t" style="top:1690.58px;font-size:26px;line-height:26px;font-family:'Liberation Mono', monospace;color:#c8772f;right:1147.00px;text-align:right;transform:scaleY(1.1);transform-origin:0 19.93px;-webkit-text-stroke:0.35px #c8772f;">11.5 dB</div>
<div class="t" style="top:2049.41px;font-size:24px;line-height:24px;font-family:'Liberation Mono', monospace;color:#1c1a17;left:1836.00px;transform:scaleY(1.1);transform-origin:0 18.40px;white-space:nowrap;"><span style="color:#b4afa5">Min</span><span style="color:#7b766b;margin-left:8px">6.9 dB</span></div>
<div class="t" style="top:2049.41px;font-size:24px;line-height:24px;font-family:'Liberation Mono', monospace;color:#1c1a17;left:1166.50px;width:2000px;text-align:center;transform:scaleY(1.1);transform-origin:0 18.40px;white-space:nowrap;"><span style="color:#b4afa5">Avg</span><span style="color:#7b766b;margin-left:8px">12.1 dB</span></div>
<div class="t" style="top:2049.41px;font-size:24px;line-height:24px;font-family:'Liberation Mono', monospace;color:#1c1a17;right:1147.00px;text-align:right;transform:scaleY(1.1);transform-origin:0 18.40px;white-space:nowrap;"><span style="color:#b4afa5">Max</span><span style="color:#7b766b;margin-left:8px">13.8 dB</span></div>
<div class="r" style="left:2612.00px;top:1647.00px;width:761.50px;height:448.50px;background:#fff;border:2px solid #e7e2da;box-sizing:border-box;border-radius:8px;"></div>
<div class="r" style="left:2614.00px;top:1754.00px;width:757.50px;height:2.00px;background:#e9e5de;"></div>
<div class="r" style="left:2614.00px;top:1756.00px;width:757.50px;height:269.50px;background:#f9f8f6;"></div>
<div class="r" style="left:2614.00px;top:2025.50px;width:757.50px;height:68.00px;background:#f4f1ec;border-radius:0 0 6px 6px;"></div>
<div class="t" style="top:1688.49px;font-size:26px;line-height:26px;font-family:'Liberation Sans', sans-serif;color:#1c1a17;left:2662.50px;-webkit-text-stroke:0.7px #1c1a17;">RF Noise Floor</div>
<div class="t" style="top:1690.58px;font-size:26px;line-height:26px;font-family:'Liberation Mono', monospace;color:#c8772f;right:320.50px;text-align:right;transform:scaleY(1.1);transform-origin:0 19.93px;-webkit-text-stroke:0.35px #c8772f;">-120 dBm</div>
<div class="t" style="top:2049.41px;font-size:24px;line-height:24px;font-family:'Liberation Mono', monospace;color:#1c1a17;left:2662.00px;transform:scaleY(1.1);transform-origin:0 18.40px;white-space:nowrap;"><span style="color:#b4afa5">Min</span><span style="color:#7b766b;margin-left:8px">-120 dBm</span></div>
<div class="t" style="top:2049.41px;font-size:24px;line-height:24px;font-family:'Liberation Mono', monospace;color:#1c1a17;left:1992.75px;width:2000px;text-align:center;transform:scaleY(1.1);transform-origin:0 18.40px;white-space:nowrap;"><span style="color:#b4afa5">Avg</span><span style="color:#7b766b;margin-left:8px">-118 dBm</span></div>
<div class="t" style="top:2049.41px;font-size:24px;line-height:24px;font-family:'Liberation Mono', monospace;color:#1c1a17;right:320.50px;text-align:right;transform:scaleY(1.1);transform-origin:0 18.40px;white-space:nowrap;"><span style="color:#b4afa5">Max</span><span style="color:#7b766b;margin-left:8px">-111 dBm</span></div>
<div class="r" style="left:960.00px;top:2289.00px;width:761.50px;height:448.00px;background:#fff;border:2px solid #e7e2da;box-sizing:border-box;border-radius:8px;"></div>
<div class="r" style="left:962.00px;top:2395.00px;width:757.50px;height:2.00px;background:#e9e5de;"></div>
<div class="r" style="left:962.00px;top:2397.00px;width:757.50px;height:268.00px;background:#f9f8f6;"></div>
<div class="r" style="left:962.00px;top:2665.00px;width:757.50px;height:70.00px;background:#f4f1ec;border-radius:0 0 6px 6px;"></div>
<div class="t" style="top:2330.49px;font-size:26px;line-height:26px;font-family:'Liberation Sans', sans-serif;color:#1c1a17;left:1010.50px;-webkit-text-stroke:0.7px #1c1a17;">Total Packets Received</div>
<div class="t" style="top:2332.58px;font-size:26px;line-height:26px;font-family:'Liberation Mono', monospace;color:#c8772f;right:1972.50px;text-align:right;transform:scaleY(1.1);transform-origin:0 19.93px;-webkit-text-stroke:0.35px #c8772f;">9.7/min</div>
<div class="t" style="top:2689.91px;font-size:24px;line-height:24px;font-family:'Liberation Mono', monospace;color:#1c1a17;left:1010.00px;transform:scaleY(1.1);transform-origin:0 18.40px;white-space:nowrap;"><span style="color:#b4afa5">Min</span><span style="color:#7b766b;margin-left:8px">2.9/min</span></div>
<div class="t" style="top:2689.91px;font-size:24px;line-height:24px;font-family:'Liberation Mono', monospace;color:#1c1a17;left:340.75px;width:2000px;text-align:center;transform:scaleY(1.1);transform-origin:0 18.40px;white-space:nowrap;"><span style="color:#b4afa5">Avg</span><span style="color:#7b766b;margin-left:8px">11.7/min</span></div>
<div class="t" style="top:2689.91px;font-size:24px;line-height:24px;font-family:'Liberation Mono', monospace;color:#1c1a17;right:1972.50px;text-align:right;transform:scaleY(1.1);transform-origin:0 18.40px;white-space:nowrap;"><span style="color:#b4afa5">Max</span><span style="color:#7b766b;margin-left:8px">26.9/min</span></div>
<div class="r" style="left:1786.00px;top:2289.00px;width:761.00px;height:448.00px;background:#fff;border:2px solid #e7e2da;box-sizing:border-box;border-radius:8px;"></div>
<div class="r" style="left:1788.00px;top:2395.00px;width:757.00px;height:2.00px;background:#e9e5de;"></div>
<div class="r" style="left:1788.00px;top:2397.00px;width:757.00px;height:268.00px;background:#f9f8f6;"></div>
<div class="r" style="left:1788.00px;top:2665.00px;width:757.00px;height:70.00px;background:#f4f1ec;border-radius:0 0 6px 6px;"></div>
<div class="t" style="top:2330.49px;font-size:26px;line-height:26px;font-family:'Liberation Sans', sans-serif;color:#1c1a17;left:1836.50px;-webkit-text-stroke:0.7px #1c1a17;">Total Packets Sent</div>
<div class="t" style="top:2332.58px;font-size:26px;line-height:26px;font-family:'Liberation Mono', monospace;color:#c8772f;right:1147.00px;text-align:right;transform:scaleY(1.1);transform-origin:0 19.93px;-webkit-text-stroke:0.35px #c8772f;">4.6/min</div>
<div class="t" style="top:2689.91px;font-size:24px;line-height:24px;font-family:'Liberation Mono', monospace;color:#1c1a17;left:1836.00px;transform:scaleY(1.1);transform-origin:0 18.40px;white-space:nowrap;"><span style="color:#b4afa5">Min</span><span style="color:#7b766b;margin-left:8px">1.3/min</span></div>
<div class="t" style="top:2689.91px;font-size:24px;line-height:24px;font-family:'Liberation Mono', monospace;color:#1c1a17;left:1166.50px;width:2000px;text-align:center;transform:scaleY(1.1);transform-origin:0 18.40px;white-space:nowrap;"><span style="color:#b4afa5">Avg</span><span style="color:#7b766b;margin-left:8px">4.8/min</span></div>
<div class="t" style="top:2689.91px;font-size:24px;line-height:24px;font-family:'Liberation Mono', monospace;color:#1c1a17;right:1147.00px;text-align:right;transform:scaleY(1.1);transform-origin:0 18.40px;white-space:nowrap;"><span style="color:#b4afa5">Max</span><span style="color:#7b766b;margin-left:8px">9.6/min</span></div>
<div class="r" style="left:2612.00px;top:2289.00px;width:761.50px;height:448.00px;background:#fff;border:2px solid #e7e2da;box-sizing:border-box;border-radius:8px;"></div>
<div class="r" style="left:2614.00px;top:2395.00px;width:757.50px;height:2.00px;background:#e9e5de;"></div>
<div class="r" style="left:2614.00px;top:2397.00px;width:757.50px;height:268.00px;background:#f9f8f6;"></div>
<div class="r" style="left:2614.00px;top:2665.00px;width:757.50px;height:70.00px;background:#f4f1ec;border-radius:0 0 6px 6px;"></div>
<div class="t" style="top:2330.49px;font-size:26px;line-height:26px;font-family:'Liberation Sans', sans-serif;color:#1c1a17;left:2662.50px;-webkit-text-stroke:0.7px #1c1a17;">Flood Packets Received</div>
<div class="t" style="top:2332.58px;font-size:26px;line-height:26px;font-family:'Liberation Mono', monospace;color:#c8772f;right:320.50px;text-align:right;transform:scaleY(1.1);transform-origin:0 19.93px;-webkit-text-stroke:0.35px #c8772f;">9.6/min</div>
<div class="t" style="top:2689.91px;font-size:24px;line-height:24px;font-family:'Liberation Mono', monospace;color:#1c1a17;left:2662.00px;transform:scaleY(1.1);transform-origin:0 18.40px;white-space:nowrap;"><span style="color:#b4afa5">Min</span><span style="color:#7b766b;margin-left:8px">2.6/min</span></div>
<div class="t" style="top:2689.91px;font-size:24px;line-height:24px;font-family:'Liberation Mono', monospace;color:#1c1a17;left:1992.75px;width:2000px;text-align:center;transform:scaleY(1.1);transform-origin:0 18.40px;white-space:nowrap;"><span style="color:#b4afa5">Avg</span><span style="color:#7b766b;margin-left:8px">11.4/min</span></div>
<div class="t" style="top:2689.91px;font-size:24px;line-height:24px;font-family:'Liberation Mono', monospace;color:#1c1a17;right:320.50px;text-align:right;transform:scaleY(1.1);transform-origin:0 18.40px;white-space:nowrap;"><span style="color:#b4afa5">Max</span><span style="color:#7b766b;margin-left:8px">26.6/min</span></div>
<div class="r" style="left:960.00px;top:2803.00px;width:761.50px;height:497.00px;background:#fff;border:2px solid #e7e2da;box-sizing:border-box;border-radius:8px;"></div>
<div class="r" style="left:962.00px;top:2909.00px;width:757.50px;height:2.00px;background:#e9e5de;"></div>
<div class="r" style="left:962.00px;top:2911.00px;width:757.50px;height:289.00px;background:#f9f8f6;"></div>
<div class="r" style="left:962.00px;top:3200.00px;width:757.50px;height:98.00px;background:#f4f1ec;border-radius:0 0 6px 6px;"></div>
<div class="t" style="top:2844.49px;font-size:26px;line-height:26px;font-family:'Liberation Sans', sans-serif;color:#1c1a17;left:1010.50px;-webkit-text-stroke:0.7px #1c1a17;">Flood Packets Sent</div>
<div class="t" style="top:2846.58px;font-size:26px;line-height:26px;font-family:'Liberation Mono', monospace;color:#c8772f;right:1972.50px;text-align:right;transform:scaleY(1.1);transform-origin:0 19.93px;-webkit-text-stroke:0.35px #c8772f;">4.5/min</div>
<div class="t" style="top:3238.91px;font-size:24px;line-height:24px;font-family:'Liberation Mono', monospace;color:#1c1a17;left:1010.00px;transform:scaleY(1.1);transform-origin:0 18.40px;white-space:nowrap;"><span style="color:#b4afa5">Min</span><span style="color:#7b766b;margin-left:8px"></span></div>
<div class="t" style="top:3238.91px;font-size:24px;line-height:24px;font-family:'Liberation Mono', monospace;color:#1c1a17;left:340.75px;width:2000px;text-align:center;transform:scaleY(1.1);transform-origin:0 18.40px;white-space:nowrap;"><span style="color:#b4afa5">Avg</span><span style="color:#7b766b;margin-left:8px"></span></div>
<div class="t" style="top:3238.91px;font-size:24px;line-height:24px;font-family:'Liberation Mono', monospace;color:#1c1a17;right:1972.50px;text-align:right;transform:scaleY(1.1);transform-origin:0 18.40px;white-space:nowrap;"><span style="color:#b4afa5">Max</span><span style="color:#7b766b;margin-left:8px"></span></div>
<div class="r" style="left:1786.00px;top:2803.00px;width:761.00px;height:497.00px;background:#fff;border:2px solid #e7e2da;box-sizing:border-box;border-radius:8px;"></div>
<div class="r" style="left:1788.00px;top:2909.00px;width:757.00px;height:2.00px;background:#e9e5de;"></div>
<div class="r" style="left:1788.00px;top:2911.00px;width:757.00px;height:289.00px;background:#f9f8f6;"></div>
<div class="r" style="left:1788.00px;top:3200.00px;width:757.00px;height:98.00px;background:#f4f1ec;border-radius:0 0 6px 6px;"></div>
<div class="t" style="top:2844.49px;font-size:26px;line-height:26px;font-family:'Liberation Sans', sans-serif;color:#1c1a17;left:1836.50px;-webkit-text-stroke:0.7px #1c1a17;">Direct Packets Received</div>
<div class="t" style="top:2846.58px;font-size:26px;line-height:26px;font-family:'Liberation Mono', monospace;color:#c8772f;right:1147.00px;text-align:right;transform:scaleY(1.1);transform-origin:0 19.93px;-webkit-text-stroke:0.35px #c8772f;">0.1/min</div>
<div class="t" style="top:3238.91px;font-size:24px;line-height:24px;font-family:'Liberation Mono', monospace;color:#1c1a17;left:1836.00px;transform:scaleY(1.1);transform-origin:0 18.40px;white-space:nowrap;"><span style="color:#b4afa5">Min</span><span style="color:#7b766b;margin-left:8px"></span></div>
<div class="t" style="top:3238.91px;font-size:24px;line-height:24px;font-family:'Liberation Mono', monospace;color:#1c1a17;left:1166.50px;width:2000px;text-align:center;transform:scaleY(1.1);transform-origin:0 18.40px;white-space:nowrap;"><span style="color:#b4afa5">Avg</span><span style="color:#7b766b;margin-left:8px"></span></div>
<div class="t" style="top:3238.91px;font-size:24px;line-height:24px;font-family:'Liberation Mono', monospace;color:#1c1a17;right:1147.00px;text-align:right;transform:scaleY(1.1);transform-origin:0 18.40px;white-space:nowrap;"><span style="color:#b4afa5">Max</span><span style="color:#7b766b;margin-left:8px"></span></div>
<div class="r" style="left:2612.00px;top:2803.00px;width:761.50px;height:497.00px;background:#fff;border:2px solid #e7e2da;box-sizing:border-box;border-radius:8px;"></div>
<div class="r" style="left:2614.00px;top:2909.00px;width:757.50px;height:2.00px;background:#e9e5de;"></div>
<div class="r" style="left:2614.00px;top:2911.00px;width:757.50px;height:289.00px;background:#f9f8f6;"></div>
<div class="r" style="left:2614.00px;top:3200.00px;width:757.50px;height:98.00px;background:#f4f1ec;border-radius:0 0 6px 6px;"></div>
<div class="t" style="top:2844.49px;font-size:26px;line-height:26px;font-family:'Liberation Sans', sans-serif;color:#1c1a17;left:2662.50px;-webkit-text-stroke:0.7px #1c1a17;">Direct Packets Sent</div>
<div class="t" style="top:2846.58px;font-size:26px;line-height:26px;font-family:'Liberation Mono', monospace;color:#c8772f;right:320.50px;text-align:right;transform:scaleY(1.1);transform-origin:0 19.93px;-webkit-text-stroke:0.35px #c8772f;">0.1/min</div>
<div class="t" style="top:3238.91px;font-size:24px;line-height:24px;font-family:'Liberation Mono', monospace;color:#1c1a17;left:2662.00px;transform:scaleY(1.1);transform-origin:0 18.40px;white-space:nowrap;"><span style="color:#b4afa5">Min</span><span style="color:#7b766b;margin-left:8px"></span></div>
<div class="t" style="top:3238.91px;font-size:24px;line-height:24px;font-family:'Liberation Mono', monospace;color:#1c1a17;left:1992.75px;width:2000px;text-align:center;transform:scaleY(1.1);transform-origin:0 18.40px;white-space:nowrap;"><span style="color:#b4afa5">Avg</span><span style="color:#7b766b;margin-left:8px"></span></div>
<div class="t" style="top:3238.91px;font-size:24px;line-height:24px;font-family:'Liberation Mono', monospace;color:#1c1a17;right:320.50px;text-align:right;transform:scaleY(1.1);transform-origin:0 18.40px;white-space:nowrap;"><span style="color:#b4afa5">Max</span><span style="color:#7b766b;margin-left:8px"></span></div>
<svg class="r" style="left:962px;top:968px;overflow:hidden" width="1170.00" height="415.00" viewBox="962 968 1170.00 415.00"><rect x="1023" y="992" width="1095.50" height="343.00" fill="#fff"/><path d="M1023.0 1335.00H2118.5M1023.0 1277.84H2118.5M1023.0 1220.68H2118.5M1023.0 1163.52H2118.5M1023.0 1106.36H2118.5M1023.0 1049.20H2118.5M1023.0 992.04H2118.5M1073.00 992.0V1335.0M1229.50 992.0V1335.0M1386.00 992.0V1335.0M1542.50 992.0V1335.0M1699.00 992.0V1335.0M1855.50 992.0V1335.0M2012.00 992.0V1335.0" stroke="rgba(95,75,55,0.085)" stroke-width="1.6" fill="none"/><path d="M1023.5 1035.0 L1026.2 1035.6 L1029.5 1034.7 L1032.8 1035.1 L1036.1 1036.1 L1039.4 1034.6 L1042.7 1033.1 L1046.0 1036.0 L1049.3 1035.4 L1052.6 1036.6 L1055.9 1038.4 L1059.2 1035.7 L1062.5 1036.6 L1065.8 1035.9 L1069.1 1037.0 L1072.4 1035.8 L1075.7 1037.5 L1079.0 1038.4 L1082.3 1037.3 L1085.6 1038.1 L1088.9 1038.0 L1092.2 1036.0 L1095.5 1037.9 L1098.8 1036.0 L1102.1 1036.1 L1105.4 1036.3 L1108.7 1039.4 L1112.0 1038.2 L1115.3 1039.1 L1118.6 1039.7 L1121.9 1039.2 L1125.2 1040.0 L1128.5 1038.3 L1131.8 1039.2 L1135.1 1037.5 L1138.4 1038.7 L1141.7 1038.8 L1145.0 1037.2 L1148.3 1038.3 L1151.6 1039.3 L1154.9 1041.5 L1158.2 1039.4 L1161.5 1039.7 L1164.8 1038.6 L1168.1 1039.4 L1171.4 1039.1 L1174.7 1039.0 L1178.0 1039.9 L1181.3 1040.0 L1184.6 1041.2 L1187.9 1039.9 L1191.2 1040.2 L1194.5 1039.4 L1197.8 1039.3 L1201.1 1037.6 L1204.4 1037.8 L1207.7 1042.1 L1211.0 1042.4 L1214.3 1042.1 L1217.6 1040.9 L1220.9 1041.3 L1224.2 1039.5 L1227.5 1041.5 L1230.8 1040.7 L1234.1 1039.8 L1237.4 1039.3 L1240.7 1042.1 L1244.0 1043.2 L1247.3 1040.8 L1250.6 1043.9 L1253.9 1040.8 L1257.2 1035.9 L1260.5 1038.4 L1263.8 1042.9 L1267.1 1043.1 L1270.4 1040.1 L1273.7 1041.9 L1277.0 1039.8 L1280.3 1041.8 L1283.6 1040.3 L1286.9 1042.0 L1290.2 1042.1 L1293.5 1039.6 L1296.8 1037.1 L1300.1 1026.2 L1303.4 1024.1 L1306.7 1024.5 L1310.0 1022.5 L1313.3 1024.2 L1316.6 1026.1 L1319.9 1027.7 L1323.2 1024.8 L1326.5 1024.1 L1329.8 1028.0 L1333.1 1027.2 L1336.4 1030.5 L1339.7 1031.4 L1343.0 1030.5 L1346.3 1031.0 L1349.6 1031.4 L1352.9 1032.1 L1356.2 1032.2 L1359.5 1032.3 L1362.8 1032.8 L1366.1 1034.1 L1369.4 1032.9 L1372.7 1032.9 L1376.0 1034.1 L1379.3 1032.7 L1382.6 1033.2 L1385.9 1035.7 L1389.2 1034.3 L1392.5 1034.5 L1395.8 1032.7 L1399.1 1034.2 L1402.4 1034.8 L1405.7 1033.0 L1409.0 1035.1 L1412.3 1035.4 L1415.6 1033.7 L1418.9 1035.9 L1422.2 1035.6 L1425.5 1036.6 L1428.8 1035.8 L1432.1 1037.2 L1435.4 1037.6 L1438.7 1035.2 L1442.0 1035.0 L1445.3 1036.8 L1448.6 1037.5 L1451.9 1027.9 L1455.2 1022.6 L1458.5 1022.2 L1461.8 1020.5 L1465.1 1019.8 L1468.4 1020.1 L1471.7 1021.1 L1475.0 1022.6 L1478.3 1022.4 L1481.6 1023.4 L1484.9 1025.8 L1488.2 1024.3 L1491.5 1027.3 L1494.8 1028.9 L1498.1 1028.6 L1501.4 1028.3 L1504.7 1029.6 L1508.0 1027.1 L1511.3 1026.6 L1514.6 1028.4 L1517.9 1030.3 L1521.2 1029.2 L1524.5 1030.5 L1527.8 1030.8 L1531.1 1032.9 L1534.4 1031.8 L1537.7 1033.6 L1541.0 1031.6 L1544.3 1032.5 L1547.6 1033.2 L1550.9 1033.7 L1554.2 1031.9 L1557.5 1030.8 L1560.8 1030.1 L1564.1 1031.6 L1567.4 1030.5 L1570.7 1032.7 L1574.0 1032.9 L1577.3 1030.8 L1580.6 1031.6 L1583.9 1033.9 L1587.2 1033.9 L1590.5 1035.0 L1593.8 1034.0 L1597.1 1034.1 L1600.4 1035.6 L1603.7 1038.2 L1607.0 1037.3 L1610.3 1032.4 L1613.6 1021.3 L1616.9 1020.3 L1620.2 1019.3 L1623.5 1020.1 L1626.8 1018.2 L1630.1 1018.7 L1633.4 1023.0 L1636.7 1023.6 L1640.0 1024.6 L1643.3 1023.4 L1646.6 1025.8 L1649.9 1026.4 L1653.2 1024.7 L1656.5 1027.1 L1659.8 1027.8 L1663.1 1027.5 L1666.4 1027.3 L1669.7 1026.9 L1673.0 1027.4 L1676.3 1027.3 L1679.6 1027.2 L1682.9 1029.8 L1686.2 1029.6 L1689.5 1032.2 L1692.8 1030.4 L1696.1 1034.2 L1699.4 1034.3 L1702.7 1035.4 L1706.0 1034.7 L1709.3 1034.0 L1712.6 1032.2 L1715.9 1029.7 L1719.2 1031.7 L1722.5 1030.0 L1725.8 1030.7 L1729.1 1032.2 L1732.4 1032.0 L1735.7 1031.9 L1739.0 1033.9 L1742.3 1033.1 L1745.6 1032.4 L1748.9 1033.1 L1752.2 1036.5 L1755.5 1036.5 L1758.8 1037.4 L1762.1 1031.9 L1765.4 1027.5 L1768.7 1024.6 L1772.0 1026.3 L1775.3 1025.4 L1778.6 1028.9 L1781.9 1030.1 L1785.2 1030.0 L1788.5 1030.3 L1791.8 1027.7 L1795.1 1030.1 L1798.4 1031.1 L1801.7 1028.6 L1805.0 1029.7 L1808.3 1030.0 L1811.6 1031.2 L1814.9 1031.2 L1818.2 1031.7 L1821.5 1033.0 L1824.8 1030.7 L1828.1 1031.3 L1831.4 1031.8 L1834.7 1032.1 L1838.0 1032.1 L1841.3 1035.5 L1844.6 1035.3 L1847.9 1033.0 L1851.2 1034.7 L1854.5 1034.3 L1857.8 1034.6 L1861.1 1035.2 L1864.4 1036.9 L1867.7 1037.3 L1871.0 1037.1 L1874.3 1036.6 L1877.6 1037.2 L1880.9 1036.6 L1884.2 1038.2 L1887.5 1038.8 L1890.8 1037.5 L1894.1 1036.3 L1897.4 1036.4 L1900.7 1036.9 L1904.0 1037.4 L1907.3 1037.9 L1910.6 1036.3 L1913.9 1037.5 L1917.2 1034.2 L1920.5 1029.3 L1923.8 1024.8 L1927.1 1021.7 L1930.4 1021.9 L1933.7 1020.4 L1937.0 1020.8 L1940.3 1019.5 L1943.6 1019.1 L1946.9 1020.4 L1950.2 1021.3 L1953.5 1019.6 L1956.8 1021.2 L1960.1 1021.6 L1963.4 1022.8 L1966.7 1022.6 L1970.0 1020.4 L1973.3 1022.7 L1976.6 1023.4 L1979.9 1022.7 L1983.2 1024.5 L1986.5 1024.4 L1989.8 1027.6 L1993.1 1027.7 L1996.4 1029.0 L1999.7 1029.2 L2003.0 1029.3 L2006.3 1029.9 L2009.6 1029.2 L2012.9 1027.6 L2016.2 1029.1 L2019.5 1027.1 L2022.8 1027.5 L2026.1 1029.5 L2029.4 1027.3 L2032.7 1027.9 L2036.0 1028.5 L2039.3 1031.6 L2042.6 1029.7 L2045.9 1029.7 L2049.2 1033.0 L2052.5 1031.0 L2055.8 1034.0 L2059.1 1033.9 L2062.4 1034.7 L2065.7 1034.8 L2069.0 1033.3 L2072.3 1033.8 L2075.6 1031.0 L2078.9 1033.2 L2082.2 1032.1 L2085.5 1033.2 L2088.8 1032.1 L2092.1 1035.3 L2095.4 1036.7 L2098.7 1033.4 L2102.0 1034.0 L2105.3 1034.5 L2108.6 1035.9 L2111.9 1034.8 L2115.2 1035.5 L2118.5 1036.7 L2118.0 1037.5 L2118.0 1335.0 L1023.5 1335.0Z" fill="#a9561f" fill-opacity="0.15"/><path d="M1023.5 992.0V1334.5H2118.5" stroke="rgba(95,75,55,0.10)" stroke-width="1.2" fill="none"/><path d="M1023.5 1035.0 L1026.2 1035.6 L1029.5 1034.7 L1032.8 1035.1 L1036.1 1036.1 L1039.4 1034.6 L1042.7 1033.1 L1046.0 1036.0 L1049.3 1035.4 L1052.6 1036.6 L1055.9 1038.4 L1059.2 1035.7 L1062.5 1036.6 L1065.8 1035.9 L1069.1 1037.0 L1072.4 1035.8 L1075.7 1037.5 L1079.0 1038.4 L1082.3 1037.3 L1085.6 1038.1 L1088.9 1038.0 L1092.2 1036.0 L1095.5 1037.9 L1098.8 1036.0 L1102.1 1036.1 L1105.4 1036.3 L1108.7 1039.4 L1112.0 1038.2 L1115.3 1039.1 L1118.6 1039.7 L1121.9 1039.2 L1125.2 1040.0 L1128.5 1038.3 L1131.8 1039.2 L1135.1 1037.5 L1138.4 1038.7 L1141.7 1038.8 L1145.0 1037.2 L1148.3 1038.3 L1151.6 1039.3 L1154.9 1041.5 L1158.2 1039.4 L1161.5 1039.7 L1164.8 1038.6 L1168.1 1039.4 L1171.4 1039.1 L1174.7 1039.0 L1178.0 1039.9 L1181.3 1040.0 L1184.6 1041.2 L1187.9 1039.9 L1191.2 1040.2 L1194.5 1039.4 L1197.8 1039.3 L1201.1 1037.6 L1204.4 1037.8 L1207.7 1042.1 L1211.0 1042.4 L1214.3 1042.1 L1217.6 1040.9 L1220.9 1041.3 L1224.2 1039.5 L1227.5 1041.5 L1230.8 1040.7 L1234.1 1039.8 L1237.4 1039.3 L1240.7 1042.1 L1244.0 1043.2 L1247.3 1040.8 L1250.6 1043.9 L1253.9 1040.8 L1257.2 1035.9 L1260.5 1038.4 L1263.8 1042.9 L1267.1 1043.1 L1270.4 1040.1 L1273.7 1041.9 L1277.0 1039.8 L1280.3 1041.8 L1283.6 1040.3 L1286.9 1042.0 L1290.2 1042.1 L1293.5 1039.6 L1296.8 1037.1 L1300.1 1026.2 L1303.4 1024.1 L1306.7 1024.5 L1310.0 1022.5 L1313.3 1024.2 L1316.6 1026.1 L1319.9 1027.7 L1323.2 1024.8 L1326.5 1024.1 L1329.8 1028.0 L1333.1 1027.2 L1336.4 1030.5 L1339.7 1031.4 L1343.0 1030.5 L1346.3 1031.0 L1349.6 1031.4 L1352.9 1032.1 L1356.2 1032.2 L1359.5 1032.3 L1362.8 1032.8 L1366.1 1034.1 L1369.4 1032.9 L1372.7 1032.9 L1376.0 1034.1 L1379.3 1032.7 L1382.6 1033.2 L1385.9 1035.7 L1389.2 1034.3 L1392.5 1034.5 L1395.8 1032.7 L1399.1 1034.2 L1402.4 1034.8 L1405.7 1033.0 L1409.0 1035.1 L1412.3 1035.4 L1415.6 1033.7 L1418.9 1035.9 L1422.2 1035.6 L1425.5 1036.6 L1428.8 1035.8 L1432.1 1037.2 L1435.4 1037.6 L1438.7 1035.2 L1442.0 1035.0 L1445.3 1036.8 L1448.6 1037.5 L1451.9 1027.9 L1455.2 1022.6 L1458.5 1022.2 L1461.8 1020.5 L1465.1 1019.8 L1468.4 1020.1 L1471.7 1021.1 L1475.0 1022.6 L1478.3 1022.4 L1481.6 1023.4 L1484.9 1025.8 L1488.2 1024.3 L1491.5 1027.3 L1494.8 1028.9 L1498.1 1028.6 L1501.4 1028.3 L1504.7 1029.6 L1508.0 1027.1 L1511.3 1026.6 L1514.6 1028.4 L1517.9 1030.3 L1521.2 1029.2 L1524.5 1030.5 L1527.8 1030.8 L1531.1 1032.9 L1534.4 1031.8 L1537.7 1033.6 L1541.0 1031.6 L1544.3 1032.5 L1547.6 1033.2 L1550.9 1033.7 L1554.2 1031.9 L1557.5 1030.8 L1560.8 1030.1 L1564.1 1031.6 L1567.4 1030.5 L1570.7 1032.7 L1574.0 1032.9 L1577.3 1030.8 L1580.6 1031.6 L1583.9 1033.9 L1587.2 1033.9 L1590.5 1035.0 L1593.8 1034.0 L1597.1 1034.1 L1600.4 1035.6 L1603.7 1038.2 L1607.0 1037.3 L1610.3 1032.4 L1613.6 1021.3 L1616.9 1020.3 L1620.2 1019.3 L1623.5 1020.1 L1626.8 1018.2 L1630.1 1018.7 L1633.4 1023.0 L1636.7 1023.6 L1640.0 1024.6 L1643.3 1023.4 L1646.6 1025.8 L1649.9 1026.4 L1653.2 1024.7 L1656.5 1027.1 L1659.8 1027.8 L1663.1 1027.5 L1666.4 1027.3 L1669.7 1026.9 L1673.0 1027.4 L1676.3 1027.3 L1679.6 1027.2 L1682.9 1029.8 L1686.2 1029.6 L1689.5 1032.2 L1692.8 1030.4 L1696.1 1034.2 L1699.4 1034.3 L1702.7 1035.4 L1706.0 1034.7 L1709.3 1034.0 L1712.6 1032.2 L1715.9 1029.7 L1719.2 1031.7 L1722.5 1030.0 L1725.8 1030.7 L1729.1 1032.2 L1732.4 1032.0 L1735.7 1031.9 L1739.0 1033.9 L1742.3 1033.1 L1745.6 1032.4 L1748.9 1033.1 L1752.2 1036.5 L1755.5 1036.5 L1758.8 1037.4 L1762.1 1031.9 L1765.4 1027.5 L1768.7 1024.6 L1772.0 1026.3 L1775.3 1025.4 L1778.6 1028.9 L1781.9 1030.1 L1785.2 1030.0 L1788.5 1030.3 L1791.8 1027.7 L1795.1 1030.1 L1798.4 1031.1 L1801.7 1028.6 L1805.0 1029.7 L1808.3 1030.0 L1811.6 1031.2 L1814.9 1031.2 L1818.2 1031.7 L1821.5 1033.0 L1824.8 1030.7 L1828.1 1031.3 L1831.4 1031.8 L1834.7 1032.1 L1838.0 1032.1 L1841.3 1035.5 L1844.6 1035.3 L1847.9 1033.0 L1851.2 1034.7 L1854.5 1034.3 L1857.8 1034.6 L1861.1 1035.2 L1864.4 1036.9 L1867.7 1037.3 L1871.0 1037.1 L1874.3 1036.6 L1877.6 1037.2 L1880.9 1036.6 L1884.2 1038.2 L1887.5 1038.8 L1890.8 1037.5 L1894.1 1036.3 L1897.4 1036.4 L1900.7 1036.9 L1904.0 1037.4 L1907.3 1037.9 L1910.6 1036.3 L1913.9 1037.5 L1917.2 1034.2 L1920.5 1029.3 L1923.8 1024.8 L1927.1 1021.7 L1930.4 1021.9 L1933.7 1020.4 L1937.0 1020.8 L1940.3 1019.5 L1943.6 1019.1 L1946.9 1020.4 L1950.2 1021.3 L1953.5 1019.6 L1956.8 1021.2 L1960.1 1021.6 L1963.4 1022.8 L1966.7 1022.6 L1970.0 1020.4 L1973.3 1022.7 L1976.6 1023.4 L1979.9 1022.7 L1983.2 1024.5 L1986.5 1024.4 L1989.8 1027.6 L1993.1 1027.7 L1996.4 1029.0 L1999.7 1029.2 L2003.0 1029.3 L2006.3 1029.9 L2009.6 1029.2 L2012.9 1027.6 L2016.2 1029.1 L2019.5 1027.1 L2022.8 1027.5 L2026.1 1029.5 L2029.4 1027.3 L2032.7 1027.9 L2036.0 1028.5 L2039.3 1031.6 L2042.6 1029.7 L2045.9 1029.7 L2049.2 1033.0 L2052.5 1031.0 L2055.8 1034.0 L2059.1 1033.9 L2062.4 1034.7 L2065.7 1034.8 L2069.0 1033.3 L2072.3 1033.8 L2075.6 1031.0 L2078.9 1033.2 L2082.2 1032.1 L2085.5 1033.2 L2088.8 1032.1 L2092.1 1035.3 L2095.4 1036.7 L2098.7 1033.4 L2102.0 1034.0 L2105.3 1034.5 L2108.6 1035.9 L2111.9 1034.8 L2115.2 1035.5 L2118.5 1036.7 L2118.0 1037.5" stroke="#a9561f" stroke-width="3.2" fill="none" stroke-linejoin="round" stroke-linecap="round"/><path d="M1017.0 1335.00H1023.0M1017.0 1277.84H1023.0M1017.0 1220.68H1023.0M1017.0 1163.52H1023.0M1017.0 1106.36H1023.0M1017.0 1049.20H1023.0M1017.0 992.04H1023.0M1073.00 1335.0V1341.0M1229.50 1335.0V1341.0M1386.00 1335.0V1341.0M1542.50 1335.0V1341.0M1699.00 1335.0V1341.0M1855.50 1335.0V1341.0M2012.00 1335.0V1341.0" stroke="#8a8578" stroke-width="1.6" fill="none"/><text x="1006.5" y="1342.2" text-anchor="end" font-size="20" fill="#8a8578" font-family="Liberation Sans, sans-serif">3.0</text><text x="1006.5" y="1285.0" text-anchor="end" font-size="20" fill="#8a8578" font-family="Liberation Sans, sans-serif">3.2</text><text x="1006.5" y="1227.9" text-anchor="end" font-size="20" fill="#8a8578" font-family="Liberation Sans, sans-serif">3.4</text><text x="1006.5" y="1170.7" text-anchor="end" font-size="20" fill="#8a8578" font-family="Liberation Sans, sans-serif">3.6</text><text x="1006.5" y="1113.6" text-anchor="end" font-size="20" fill="#8a8578" font-family="Liberation Sans, sans-serif">3.8</text><text x="1006.5" y="1056.4" text-anchor="end" font-size="20" fill="#8a8578" font-family="Liberation Sans, sans-serif">4.0</text><text x="1006.5" y="999.2" text-anchor="end" font-size="20" fill="#8a8578" font-family="Liberation Sans, sans-serif">4.2</text><text x="1073.0" y="1365.6" text-anchor="middle" font-size="20" fill="#8a8578" font-family="Liberation Sans, sans-serif">Tue</text><text x="1229.5" y="1365.6" text-anchor="middle" font-size="20" fill="#8a8578" font-family="Liberation Sans, sans-serif">Wed</text><text x="1386.0" y="1365.6" text-anchor="middle" font-size="20" fill="#8a8578" font-family="Liberation Sans, sans-serif">Thu</text><text x="1542.5" y="1365.6" text-anchor="middle" font-size="20" fill="#8a8578" font-family="Liberation Sans, sans-serif">Fri</text><text x="1699.0" y="1365.6" text-anchor="middle" font-size="20" fill="#8a8578" font-family="Liberation Sans, sans-serif">Sat</text><text x="1855.5" y="1365.6" text-anchor="middle" font-size="20" fill="#8a8578" font-family="Liberation Sans, sans-serif">Sun</text><text x="2012.0" y="1365.6" text-anchor="middle" font-size="20" fill="#8a8578" font-family="Liberation Sans, sans-serif">Mon</text></svg>
<svg class="r" style="left:2202px;top:968px;overflow:hidden" width="1169.00" height="415.00" viewBox="2202 968 1169.00 415.00"><rect x="2268.4" y="991.5" width="1089.10" height="343.70" fill="#fff"/><path d="M2268.4 1335.20H3357.5M2268.4 1266.46H3357.5M2268.4 1197.72H3357.5M2268.4 1128.98H3357.5M2268.4 1060.24H3357.5M2268.4 991.50H3357.5M2318.00 991.5V1335.2M2473.60 991.5V1335.2M2629.20 991.5V1335.2M2784.80 991.5V1335.2M2940.40 991.5V1335.2M3096.00 991.5V1335.2M3251.60 991.5V1335.2" stroke="rgba(95,75,55,0.085)" stroke-width="1.6" fill="none"/><path d="M2268.9 1033.7 L2271.7 1033.9 L2275.0 1033.8 L2278.3 1033.6 L2281.6 1031.6 L2284.9 1030.9 L2288.2 1030.2 L2291.5 1034.5 L2294.8 1037.0 L2298.1 1032.4 L2301.4 1032.4 L2304.7 1030.8 L2308.0 1033.1 L2311.3 1033.4 L2314.6 1035.2 L2317.9 1035.5 L2321.2 1033.8 L2324.5 1034.7 L2327.8 1035.1 L2331.1 1037.3 L2334.4 1035.8 L2337.7 1032.7 L2341.0 1033.9 L2344.3 1032.0 L2347.6 1034.4 L2350.9 1033.5 L2354.2 1033.9 L2357.5 1037.6 L2360.8 1035.9 L2364.1 1036.2 L2367.4 1039.1 L2370.7 1039.1 L2374.0 1037.5 L2377.3 1040.1 L2380.6 1039.0 L2383.9 1039.8 L2387.2 1038.5 L2390.5 1041.3 L2393.8 1040.5 L2397.1 1041.2 L2400.4 1040.6 L2403.7 1038.2 L2407.0 1038.1 L2410.3 1037.2 L2413.6 1037.2 L2416.9 1037.0 L2420.2 1037.9 L2423.5 1039.0 L2426.8 1037.1 L2430.1 1039.4 L2433.4 1038.1 L2436.7 1037.6 L2440.0 1038.8 L2443.3 1037.1 L2446.6 1033.3 L2449.9 1038.8 L2453.2 1042.2 L2456.5 1039.5 L2459.8 1042.1 L2463.1 1038.3 L2466.4 1040.3 L2469.7 1040.9 L2473.0 1038.3 L2476.3 1041.1 L2479.6 1039.9 L2482.9 1040.9 L2486.2 1038.8 L2489.5 1038.7 L2492.8 1039.0 L2496.1 1042.9 L2499.4 1042.7 L2502.7 1034.9 L2506.0 1042.1 L2509.3 1042.8 L2512.6 1040.3 L2515.9 1039.9 L2519.2 1040.0 L2522.5 1040.4 L2525.8 1038.3 L2529.1 1040.6 L2532.4 1041.0 L2535.7 1034.2 L2539.0 1020.2 L2542.3 1021.9 L2545.6 1018.4 L2548.9 1018.8 L2552.2 1019.1 L2555.5 1020.8 L2558.8 1020.0 L2562.1 1023.2 L2565.4 1023.1 L2568.7 1023.1 L2572.0 1023.5 L2575.3 1023.3 L2578.6 1023.3 L2581.9 1024.4 L2585.2 1027.0 L2588.5 1028.9 L2591.8 1026.3 L2595.1 1025.6 L2598.4 1028.4 L2601.7 1026.6 L2605.0 1026.5 L2608.3 1026.3 L2611.6 1027.8 L2614.9 1028.9 L2618.2 1028.0 L2621.5 1028.2 L2624.8 1027.2 L2628.1 1030.3 L2631.4 1027.3 L2634.7 1029.0 L2638.0 1030.2 L2641.3 1027.9 L2644.6 1030.0 L2647.9 1031.1 L2651.2 1030.7 L2654.5 1031.9 L2657.8 1030.2 L2661.1 1032.0 L2664.4 1031.7 L2667.7 1034.7 L2671.0 1033.5 L2674.3 1034.7 L2677.6 1036.1 L2680.9 1034.9 L2684.2 1034.7 L2687.5 1033.0 L2690.8 1034.1 L2694.1 1030.0 L2697.4 1022.4 L2700.7 1019.3 L2704.0 1017.3 L2707.3 1015.6 L2710.6 1017.5 L2713.9 1020.7 L2717.2 1021.7 L2720.5 1021.7 L2723.8 1022.3 L2727.1 1022.6 L2730.4 1022.7 L2733.7 1024.3 L2737.0 1026.8 L2740.3 1026.7 L2743.6 1024.5 L2746.9 1025.5 L2750.2 1025.1 L2753.5 1024.3 L2756.8 1024.6 L2760.1 1025.3 L2763.4 1024.4 L2766.7 1025.9 L2770.0 1024.9 L2773.3 1026.0 L2776.6 1027.3 L2779.9 1027.4 L2783.2 1026.2 L2786.5 1028.0 L2789.8 1026.5 L2793.1 1025.8 L2796.4 1023.5 L2799.7 1025.2 L2803.0 1025.3 L2806.3 1027.8 L2809.6 1028.2 L2812.9 1030.5 L2816.2 1030.8 L2819.5 1030.5 L2822.8 1028.0 L2826.1 1028.2 L2829.4 1027.6 L2832.7 1027.0 L2836.0 1027.4 L2839.3 1031.0 L2842.6 1033.1 L2845.9 1034.5 L2849.2 1037.4 L2852.5 1028.8 L2855.8 1018.4 L2859.1 1017.2 L2862.4 1014.6 L2865.7 1016.9 L2869.0 1018.2 L2872.3 1017.6 L2875.6 1019.2 L2878.9 1020.3 L2882.2 1021.2 L2885.5 1019.9 L2888.8 1022.1 L2892.1 1021.7 L2895.4 1022.2 L2898.7 1021.6 L2902.0 1022.5 L2905.3 1023.4 L2908.6 1023.2 L2911.9 1023.9 L2915.2 1021.8 L2918.5 1022.6 L2921.8 1023.9 L2925.1 1024.9 L2928.4 1023.8 L2931.7 1026.9 L2935.0 1028.4 L2938.3 1028.0 L2941.6 1029.8 L2944.9 1027.9 L2948.2 1026.2 L2951.5 1025.3 L2954.8 1024.9 L2958.1 1023.8 L2961.4 1024.3 L2964.7 1024.1 L2968.0 1026.0 L2971.3 1026.1 L2974.6 1027.3 L2977.9 1027.6 L2981.2 1026.8 L2984.5 1029.5 L2987.8 1027.7 L2991.1 1030.5 L2994.4 1031.5 L2997.7 1033.4 L3001.0 1031.3 L3004.3 1030.3 L3007.6 1025.3 L3010.9 1020.7 L3014.2 1020.3 L3017.5 1019.3 L3020.8 1021.6 L3024.1 1021.7 L3027.4 1023.3 L3030.7 1025.2 L3034.0 1025.0 L3037.3 1023.9 L3040.6 1025.5 L3043.9 1025.2 L3047.2 1024.5 L3050.5 1024.0 L3053.8 1025.9 L3057.1 1026.6 L3060.4 1028.7 L3063.7 1029.5 L3067.0 1029.0 L3070.3 1028.8 L3073.6 1030.5 L3076.9 1027.3 L3080.2 1027.5 L3083.5 1029.0 L3086.8 1029.0 L3090.1 1027.3 L3093.4 1028.8 L3096.7 1029.6 L3100.0 1029.0 L3103.3 1031.1 L3106.6 1032.4 L3109.9 1034.1 L3113.2 1036.0 L3116.5 1033.6 L3119.8 1035.1 L3123.1 1034.5 L3126.4 1033.0 L3129.7 1032.1 L3133.0 1034.8 L3136.3 1033.3 L3139.6 1033.3 L3142.9 1033.2 L3146.2 1035.2 L3149.5 1033.1 L3152.8 1032.1 L3156.1 1030.2 L3159.4 1024.4 L3162.7 1021.5 L3166.0 1016.7 L3169.3 1015.9 L3172.6 1017.4 L3175.9 1017.3 L3179.2 1014.3 L3182.5 1015.9 L3185.8 1015.3 L3189.1 1017.9 L3192.4 1017.7 L3195.7 1016.2 L3199.0 1016.6 L3202.3 1016.6 L3205.6 1019.8 L3208.9 1018.1 L3212.2 1019.8 L3215.5 1020.0 L3218.8 1021.2 L3222.1 1021.7 L3225.4 1022.7 L3228.7 1021.0 L3232.0 1023.6 L3235.3 1022.5 L3238.6 1023.7 L3241.9 1023.2 L3245.2 1023.1 L3248.5 1023.9 L3251.8 1023.8 L3255.1 1023.5 L3258.4 1024.9 L3261.7 1024.4 L3265.0 1022.6 L3268.3 1023.5 L3271.6 1024.5 L3274.9 1026.4 L3278.2 1026.6 L3281.5 1025.8 L3284.8 1024.3 L3288.1 1027.3 L3291.4 1026.4 L3294.7 1027.2 L3298.0 1029.0 L3301.3 1030.4 L3304.6 1031.5 L3307.9 1033.4 L3311.2 1029.6 L3314.5 1027.7 L3317.8 1027.3 L3321.1 1027.5 L3324.4 1030.6 L3327.7 1035.2 L3331.0 1033.5 L3334.3 1035.2 L3337.6 1033.7 L3340.9 1031.9 L3344.2 1032.1 L3347.5 1034.4 L3350.8 1035.6 L3354.1 1033.6 L3357.4 1035.4 L3357.0 1035.5 L3357.0 1335.2 L2268.9 1335.2Z" fill="#a9561f" fill-opacity="0.15"/><path d="M2268.9 991.5V1334.7H3357.5" stroke="rgba(95,75,55,0.10)" stroke-width="1.2" fill="none"/><path d="M2268.9 1033.7 L2271.7 1033.9 L2275.0 1033.8 L2278.3 1033.6 L2281.6 1031.6 L2284.9 1030.9 L2288.2 1030.2 L2291.5 1034.5 L2294.8 1037.0 L2298.1 1032.4 L2301.4 1032.4 L2304.7 1030.8 L2308.0 1033.1 L2311.3 1033.4 L2314.6 1035.2 L2317.9 1035.5 L2321.2 1033.8 L2324.5 1034.7 L2327.8 1035.1 L2331.1 1037.3 L2334.4 1035.8 L2337.7 1032.7 L2341.0 1033.9 L2344.3 1032.0 L2347.6 1034.4 L2350.9 1033.5 L2354.2 1033.9 L2357.5 1037.6 L2360.8 1035.9 L2364.1 1036.2 L2367.4 1039.1 L2370.7 1039.1 L2374.0 1037.5 L2377.3 1040.1 L2380.6 1039.0 L2383.9 1039.8 L2387.2 1038.5 L2390.5 1041.3 L2393.8 1040.5 L2397.1 1041.2 L2400.4 1040.6 L2403.7 1038.2 L2407.0 1038.1 L2410.3 1037.2 L2413.6 1037.2 L2416.9 1037.0 L2420.2 1037.9 L2423.5 1039.0 L2426.8 1037.1 L2430.1 1039.4 L2433.4 1038.1 L2436.7 1037.6 L2440.0 1038.8 L2443.3 1037.1 L2446.6 1033.3 L2449.9 1038.8 L2453.2 1042.2 L2456.5 1039.5 L2459.8 1042.1 L2463.1 1038.3 L2466.4 1040.3 L2469.7 1040.9 L2473.0 1038.3 L2476.3 1041.1 L2479.6 1039.9 L2482.9 1040.9 L2486.2 1038.8 L2489.5 1038.7 L2492.8 1039.0 L2496.1 1042.9 L2499.4 1042.7 L2502.7 1034.9 L2506.0 1042.1 L2509.3 1042.8 L2512.6 1040.3 L2515.9 1039.9 L2519.2 1040.0 L2522.5 1040.4 L2525.8 1038.3 L2529.1 1040.6 L2532.4 1041.0 L2535.7 1034.2 L2539.0 1020.2 L2542.3 1021.9 L2545.6 1018.4 L2548.9 1018.8 L2552.2 1019.1 L2555.5 1020.8 L2558.8 1020.0 L2562.1 1023.2 L2565.4 1023.1 L2568.7 1023.1 L2572.0 1023.5 L2575.3 1023.3 L2578.6 1023.3 L2581.9 1024.4 L2585.2 1027.0 L2588.5 1028.9 L2591.8 1026.3 L2595.1 1025.6 L2598.4 1028.4 L2601.7 1026.6 L2605.0 1026.5 L2608.3 1026.3 L2611.6 1027.8 L2614.9 1028.9 L2618.2 1028.0 L2621.5 1028.2 L2624.8 1027.2 L2628.1 1030.3 L2631.4 1027.3 L2634.7 1029.0 L2638.0 1030.2 L2641.3 1027.9 L2644.6 1030.0 L2647.9 1031.1 L2651.2 1030.7 L2654.5 1031.9 L2657.8 1030.2 L2661.1 1032.0 L2664.4 1031.7 L2667.7 1034.7 L2671.0 1033.5 L2674.3 1034.7 L2677.6 1036.1 L2680.9 1034.9 L2684.2 1034.7 L2687.5 1033.0 L2690.8 1034.1 L2694.1 1030.0 L2697.4 1022.4 L2700.7 1019.3 L2704.0 1017.3 L2707.3 1015.6 L2710.6 1017.5 L2713.9 1020.7 L2717.2 1021.7 L2720.5 1021.7 L2723.8 1022.3 L2727.1 1022.6 L2730.4 1022.7 L2733.7 1024.3 L2737.0 1026.8 L2740.3 1026.7 L2743.6 1024.5 L2746.9 1025.5 L2750.2 1025.1 L2753.5 1024.3 L2756.8 1024.6 L2760.1 1025.3 L2763.4 1024.4 L2766.7 1025.9 L2770.0 1024.9 L2773.3 1026.0 L2776.6 1027.3 L2779.9 1027.4 L2783.2 1026.2 L2786.5 1028.0 L2789.8 1026.5 L2793.1 1025.8 L2796.4 1023.5 L2799.7 1025.2 L2803.0 1025.3 L2806.3 1027.8 L2809.6 1028.2 L2812.9 1030.5 L2816.2 1030.8 L2819.5 1030.5 L2822.8 1028.0 L2826.1 1028.2 L2829.4 1027.6 L2832.7 1027.0 L2836.0 1027.4 L2839.3 1031.0 L2842.6 1033.1 L2845.9 1034.5 L2849.2 1037.4 L2852.5 1028.8 L2855.8 1018.4 L2859.1 1017.2 L2862.4 1014.6 L2865.7 1016.9 L2869.0 1018.2 L2872.3 1017.6 L2875.6 1019.2 L2878.9 1020.3 L2882.2 1021.2 L2885.5 1019.9 L2888.8 1022.1 L2892.1 1021.7 L2895.4 1022.2 L2898.7 1021.6 L2902.0 1022.5 L2905.3 1023.4 L2908.6 1023.2 L2911.9 1023.9 L2915.2 1021.8 L2918.5 1022.6 L2921.8 1023.9 L2925.1 1024.9 L2928.4 1023.8 L2931.7 1026.9 L2935.0 1028.4 L2938.3 1028.0 L2941.6 1029.8 L2944.9 1027.9 L2948.2 1026.2 L2951.5 1025.3 L2954.8 1024.9 L2958.1 1023.8 L2961.4 1024.3 L2964.7 1024.1 L2968.0 1026.0 L2971.3 1026.1 L2974.6 1027.3 L2977.9 1027.6 L2981.2 1026.8 L2984.5 1029.5 L2987.8 1027.7 L2991.1 1030.5 L2994.4 1031.5 L2997.7 1033.4 L3001.0 1031.3 L3004.3 1030.3 L3007.6 1025.3 L3010.9 1020.7 L3014.2 1020.3 L3017.5 1019.3 L3020.8 1021.6 L3024.1 1021.7 L3027.4 1023.3 L3030.7 1025.2 L3034.0 1025.0 L3037.3 1023.9 L3040.6 1025.5 L3043.9 1025.2 L3047.2 1024.5 L3050.5 1024.0 L3053.8 1025.9 L3057.1 1026.6 L3060.4 1028.7 L3063.7 1029.5 L3067.0 1029.0 L3070.3 1028.8 L3073.6 1030.5 L3076.9 1027.3 L3080.2 1027.5 L3083.5 1029.0 L3086.8 1029.0 L3090.1 1027.3 L3093.4 1028.8 L3096.7 1029.6 L3100.0 1029.0 L3103.3 1031.1 L3106.6 1032.4 L3109.9 1034.1 L3113.2 1036.0 L3116.5 1033.6 L3119.8 1035.1 L3123.1 1034.5 L3126.4 1033.0 L3129.7 1032.1 L3133.0 1034.8 L3136.3 1033.3 L3139.6 1033.3 L3142.9 1033.2 L3146.2 1035.2 L3149.5 1033.1 L3152.8 1032.1 L3156.1 1030.2 L3159.4 1024.4 L3162.7 1021.5 L3166.0 1016.7 L3169.3 1015.9 L3172.6 1017.4 L3175.9 1017.3 L3179.2 1014.3 L3182.5 1015.9 L3185.8 1015.3 L3189.1 1017.9 L3192.4 1017.7 L3195.7 1016.2 L3199.0 1016.6 L3202.3 1016.6 L3205.6 1019.8 L3208.9 1018.1 L3212.2 1019.8 L3215.5 1020.0 L3218.8 1021.2 L3222.1 1021.7 L3225.4 1022.7 L3228.7 1021.0 L3232.0 1023.6 L3235.3 1022.5 L3238.6 1023.7 L3241.9 1023.2 L3245.2 1023.1 L3248.5 1023.9 L3251.8 1023.8 L3255.1 1023.5 L3258.4 1024.9 L3261.7 1024.4 L3265.0 1022.6 L3268.3 1023.5 L3271.6 1024.5 L3274.9 1026.4 L3278.2 1026.6 L3281.5 1025.8 L3284.8 1024.3 L3288.1 1027.3 L3291.4 1026.4 L3294.7 1027.2 L3298.0 1029.0 L3301.3 1030.4 L3304.6 1031.5 L3307.9 1033.4 L3311.2 1029.6 L3314.5 1027.7 L3317.8 1027.3 L3321.1 1027.5 L3324.4 1030.6 L3327.7 1035.2 L3331.0 1033.5 L3334.3 1035.2 L3337.6 1033.7 L3340.9 1031.9 L3344.2 1032.1 L3347.5 1034.4 L3350.8 1035.6 L3354.1 1033.6 L3357.4 1035.4 L3357.0 1035.5" stroke="#a9561f" stroke-width="3.2" fill="none" stroke-linejoin="round" stroke-linecap="round"/><path d="M2262.4 1335.20H2268.4M2262.4 1266.46H2268.4M2262.4 1197.72H2268.4M2262.4 1128.98H2268.4M2262.4 1060.24H2268.4M2262.4 991.50H2268.4M2318.00 1335.2V1341.2M2473.60 1335.2V1341.2M2629.20 1335.2V1341.2M2784.80 1335.2V1341.2M2940.40 1335.2V1341.2M3096.00 1335.2V1341.2M3251.60 1335.2V1341.2" stroke="#8a8578" stroke-width="1.6" fill="none"/><text x="2251.9" y="1342.4" text-anchor="end" font-size="20" fill="#8a8578" font-family="Liberation Sans, sans-serif">0</text><text x="2251.9" y="1273.7" text-anchor="end" font-size="20" fill="#8a8578" font-family="Liberation Sans, sans-serif">20</text><text x="2251.9" y="1204.9" text-anchor="end" font-size="20" fill="#8a8578" font-family="Liberation Sans, sans-serif">40</text><text x="2251.9" y="1136.2" text-anchor="end" font-size="20" fill="#8a8578" font-family="Liberation Sans, sans-serif">60</text><text x="2251.9" y="1067.4" text-anchor="end" font-size="20" fill="#8a8578" font-family="Liberation Sans, sans-serif">80</text><text x="2251.9" y="998.7" text-anchor="end" font-size="20" fill="#8a8578" font-family="Liberation Sans, sans-serif">100</text><text x="2318.0" y="1365.8" text-anchor="middle" font-size="20" fill="#8a8578" font-family="Liberation Sans, sans-serif">Tue</text><text x="2473.6" y="1365.8" text-anchor="middle" font-size="20" fill="#8a8578" font-family="Liberation Sans, sans-serif">Wed</text><text x="2629.2" y="1365.8" text-anchor="middle" font-size="20" fill="#8a8578" font-family="Liberation Sans, sans-serif">Thu</text><text x="2784.8" y="1365.8" text-anchor="middle" font-size="20" fill="#8a8578" font-family="Liberation Sans, sans-serif">Fri</text><text x="2940.4" y="1365.8" text-anchor="middle" font-size="20" fill="#8a8578" font-family="Liberation Sans, sans-serif">Sat</text><text x="3096.0" y="1365.8" text-anchor="middle" font-size="20" fill="#8a8578" font-family="Liberation Sans, sans-serif">Sun</text><text x="3251.6" y="1365.8" text-anchor="middle" font-size="20" fill="#8a8578" font-family="Liberation Sans, sans-serif">Mon</text></svg>
<svg class="r" style="left:962px;top:1756px;overflow:hidden" width="757.50" height="269.50" viewBox="962 1756 757.50 269.50"><rect x="1008" y="1765.5" width="703.00" height="227.70" fill="#fff"/><path d="M1008.0 1771.40H1711.0M1008.0 1803.60H1711.0M1008.0 1835.80H1711.0M1008.0 1868.00H1711.0M1008.0 1900.20H1711.0M1008.0 1932.40H1711.0M1008.0 1964.60H1711.0M1040.30 1765.5V1993.2M1140.70 1765.5V1993.2M1241.10 1765.5V1993.2M1341.50 1765.5V1993.2M1441.90 1765.5V1993.2M1542.30 1765.5V1993.2M1642.70 1765.5V1993.2" stroke="rgba(95,75,55,0.085)" stroke-width="1.3" fill="none"/><path d="M1008.5 1880.9 L1014.6 1865.4 L1016.3 1891.2 L1018.5 1854.3 L1020.6 1845.7 L1022.6 1858.1 L1025.4 1844.9 L1027.4 1842.3 L1029.1 1832.0 L1031.7 1844.0 L1035.1 1835.4 L1038.1 1846.6 L1041.1 1848.8 L1043.7 1842.3 L1045.4 1861.7 L1049.7 1861.7 L1051.8 1851.7 L1054.0 1861.1 L1058.3 1864.6 L1060.3 1832.0 L1062.1 1855.1 L1064.8 1845.7 L1067.7 1852.6 L1070.6 1861.7 L1072.9 1848.3 L1075.4 1858.6 L1078.9 1871.4 L1082.3 1849.1 L1085.2 1835.4 L1087.8 1848.3 L1090.0 1849.1 L1091.7 1864.6 L1093.9 1857.7 L1096.0 1874.0 L1098.6 1874.0 L1101.1 1867.7 L1108.0 1867.7 L1110.6 1864.6 L1112.3 1828.6 L1114.9 1815.7 L1118.3 1817.4 L1120.9 1828.6 L1123.4 1829.9 L1126.0 1842.3 L1127.7 1843.1 L1129.4 1864.6 L1131.7 1867.1 L1133.7 1880.9 L1137.2 1879.7 L1139.7 1874.9 L1142.3 1880.9 L1144.0 1874.9 L1146.6 1884.3 L1150.9 1871.4 L1153.4 1878.3 L1156.0 1868.0 L1158.6 1874.9 L1161.2 1864.6 L1163.7 1874.5 L1167.2 1854.3 L1169.7 1855.1 L1171.4 1880.9 L1173.5 1868.0 L1176.6 1893.7 L1179.7 1939.2 L1181.4 1878.3 L1183.4 1864.6 L1186.0 1883.4 L1188.1 1874.9 L1190.3 1926.3 L1192.9 1935.7 L1194.6 1933.2 L1198.5 1857.7 L1200.6 1900.6 L1202.8 1964.9 L1204.5 1880.0 L1207.1 1878.3 L1208.8 1939.2 L1211.2 1934.9 L1217.7 1898.9 L1219.4 1858.6 L1222.9 1876.6 L1224.9 1835.4 L1229.7 1862.0 L1231.8 1826.0 L1234.0 1844.9 L1237.4 1820.0 L1240.0 1822.6 L1244.3 1809.7 L1247.7 1821.7 L1252.0 1826.5 L1256.3 1813.1 L1259.2 1815.7 L1273.4 1815.7 L1276.0 1824.3 L1277.7 1880.9 L1279.8 1851.7 L1286.0 1935.7 L1288.0 1893.7 L1292.3 1974.3 L1296.6 1858.6 L1301.7 1909.2 L1305.2 1919.4 L1307.7 1916.0 L1309.4 1873.1 L1311.2 1868.0 L1313.4 1880.9 L1317.2 1828.6 L1323.2 1862.9 L1324.0 1906.6 L1325.7 1870.6 L1327.8 1886.9 L1336.0 1880.0 L1338.6 1868.0 L1342.9 1855.1 L1344.6 1877.4 L1348.9 1826.0 L1353.5 1851.7 L1357.4 1868.0 L1360.0 1871.4 L1361.5 1855.1 L1363.6 1857.7 L1365.6 1851.7 L1368.4 1855.1 L1370.1 1855.1 L1371.8 1842.3 L1374.2 1862.0 L1376.4 1862.0 L1379.9 1835.4 L1382.4 1835.4 L1385.0 1838.0 L1386.7 1832.9 L1388.4 1845.7 L1392.7 1822.6 L1395.3 1828.6 L1397.0 1835.4 L1398.7 1832.9 L1401.3 1838.9 L1407.3 1829.4 L1409.5 1845.7 L1411.6 1829.4 L1414.1 1828.6 L1416.7 1816.6 L1419.8 1826.0 L1421.9 1806.3 L1424.4 1805.4 L1428.4 1796.9 L1431.3 1811.4 L1434.7 1833.7 L1436.4 1836.3 L1439.0 1829.4 L1442.8 1836.3 L1444.5 1822.6 L1447.1 1832.9 L1448.9 1820.0 L1451.0 1819.1 L1454.1 1812.3 L1455.8 1813.1 L1459.2 1822.6 L1466.4 1813.1 L1468.5 1816.6 L1470.2 1829.4 L1472.4 1815.7 L1474.1 1816.6 L1476.4 1832.9 L1478.4 1820.0 L1482.7 1842.3 L1487.0 1829.4 L1489.6 1842.3 L1492.2 1862.9 L1495.2 1874.5 L1497.3 1838.9 L1499.9 1820.0 L1503.3 1839.7 L1505.9 1842.3 L1509.3 1822.6 L1511.9 1822.6 L1514.1 1829.4 L1519.2 1822.6 L1523.9 1823.4 L1524.7 1826.0 L1527.3 1823.4 L1530.7 1832.9 L1535.9 1811.4 L1539.3 1806.3 L1546.7 1814.0 L1553.9 1803.7 L1558.2 1810.6 L1560.7 1806.3 L1563.8 1809.7 L1566.2 1807.1 L1568.4 1806.3 L1572.4 1801.1 L1575.8 1800.3 L1578.7 1810.6 L1582.7 1794.3 L1585.6 1796.9 L1589.0 1796.9 L1591.6 1800.3 L1593.6 1796.9 L1598.1 1804.2 L1601.5 1796.9 L1604.4 1799.4 L1606.2 1796.9 L1610.1 1813.1 L1613.9 1810.6 L1616.4 1796.9 L1619.0 1803.7 L1622.4 1790.9 L1625.0 1800.3 L1627.6 1800.3 L1630.2 1790.0 L1633.6 1784.0 L1637.0 1800.3 L1641.3 1800.3 L1646.4 1809.7 L1648.5 1806.3 L1650.2 1816.6 L1655.9 1804.6 L1658.4 1810.6 L1660.2 1803.7 L1662.7 1806.3 L1664.4 1806.3 L1667.0 1800.3 L1672.2 1820.0 L1676.4 1817.4 L1679.0 1821.7 L1680.7 1868.0 L1682.8 1855.1 L1685.0 1855.1 L1687.6 1871.4 L1690.2 1859.4 L1692.7 1853.4 L1694.4 1832.0 L1697.9 1823.4 L1699.6 1861.1 L1702.2 1861.1 L1704.4 1826.0 L1706.4 1825.1 L1709.5 1816.6 L1710.5 1816.6 L1710.5 1765.5 L1008.5 1765.5Z" fill="#a9561f" fill-opacity="0.15"/><path d="M1008.5 1765.5V1992.7H1711.0" stroke="rgba(95,75,55,0.10)" stroke-width="1.2" fill="none"/><path d="M1008.5 1880.9 L1014.6 1865.4 L1016.3 1891.2 L1018.5 1854.3 L1020.6 1845.7 L1022.6 1858.1 L1025.4 1844.9 L1027.4 1842.3 L1029.1 1832.0 L1031.7 1844.0 L1035.1 1835.4 L1038.1 1846.6 L1041.1 1848.8 L1043.7 1842.3 L1045.4 1861.7 L1049.7 1861.7 L1051.8 1851.7 L1054.0 1861.1 L1058.3 1864.6 L1060.3 1832.0 L1062.1 1855.1 L1064.8 1845.7 L1067.7 1852.6 L1070.6 1861.7 L1072.9 1848.3 L1075.4 1858.6 L1078.9 1871.4 L1082.3 1849.1 L1085.2 1835.4 L1087.8 1848.3 L1090.0 1849.1 L1091.7 1864.6 L1093.9 1857.7 L1096.0 1874.0 L1098.6 1874.0 L1101.1 1867.7 L1108.0 1867.7 L1110.6 1864.6 L1112.3 1828.6 L1114.9 1815.7 L1118.3 1817.4 L1120.9 1828.6 L1123.4 1829.9 L1126.0 1842.3 L1127.7 1843.1 L1129.4 1864.6 L1131.7 1867.1 L1133.7 1880.9 L1137.2 1879.7 L1139.7 1874.9 L1142.3 1880.9 L1144.0 1874.9 L1146.6 1884.3 L1150.9 1871.4 L1153.4 1878.3 L1156.0 1868.0 L1158.6 1874.9 L1161.2 1864.6 L1163.7 1874.5 L1167.2 1854.3 L1169.7 1855.1 L1171.4 1880.9 L1173.5 1868.0 L1176.6 1893.7 L1179.7 1939.2 L1181.4 1878.3 L1183.4 1864.6 L1186.0 1883.4 L1188.1 1874.9 L1190.3 1926.3 L1192.9 1935.7 L1194.6 1933.2 L1198.5 1857.7 L1200.6 1900.6 L1202.8 1964.9 L1204.5 1880.0 L1207.1 1878.3 L1208.8 1939.2 L1211.2 1934.9 L1217.7 1898.9 L1219.4 1858.6 L1222.9 1876.6 L1224.9 1835.4 L1229.7 1862.0 L1231.8 1826.0 L1234.0 1844.9 L1237.4 1820.0 L1240.0 1822.6 L1244.3 1809.7 L1247.7 1821.7 L1252.0 1826.5 L1256.3 1813.1 L1259.2 1815.7 L1273.4 1815.7 L1276.0 1824.3 L1277.7 1880.9 L1279.8 1851.7 L1286.0 1935.7 L1288.0 1893.7 L1292.3 1974.3 L1296.6 1858.6 L1301.7 1909.2 L1305.2 1919.4 L1307.7 1916.0 L1309.4 1873.1 L1311.2 1868.0 L1313.4 1880.9 L1317.2 1828.6 L1323.2 1862.9 L1324.0 1906.6 L1325.7 1870.6 L1327.8 1886.9 L1336.0 1880.0 L1338.6 1868.0 L1342.9 1855.1 L1344.6 1877.4 L1348.9 1826.0 L1353.5 1851.7 L1357.4 1868.0 L1360.0 1871.4 L1361.5 1855.1 L1363.6 1857.7 L1365.6 1851.7 L1368.4 1855.1 L1370.1 1855.1 L1371.8 1842.3 L1374.2 1862.0 L1376.4 1862.0 L1379.9 1835.4 L1382.4 1835.4 L1385.0 1838.0 L1386.7 1832.9 L1388.4 1845.7 L1392.7 1822.6 L1395.3 1828.6 L1397.0 1835.4 L1398.7 1832.9 L1401.3 1838.9 L1407.3 1829.4 L1409.5 1845.7 L1411.6 1829.4 L1414.1 1828.6 L1416.7 1816.6 L1419.8 1826.0 L1421.9 1806.3 L1424.4 1805.4 L1428.4 1796.9 L1431.3 1811.4 L1434.7 1833.7 L1436.4 1836.3 L1439.0 1829.4 L1442.8 1836.3 L1444.5 1822.6 L1447.1 1832.9 L1448.9 1820.0 L1451.0 1819.1 L1454.1 1812.3 L1455.8 1813.1 L1459.2 1822.6 L1466.4 1813.1 L1468.5 1816.6 L1470.2 1829.4 L1472.4 1815.7 L1474.1 1816.6 L1476.4 1832.9 L1478.4 1820.0 L1482.7 1842.3 L1487.0 1829.4 L1489.6 1842.3 L1492.2 1862.9 L1495.2 1874.5 L1497.3 1838.9 L1499.9 1820.0 L1503.3 1839.7 L1505.9 1842.3 L1509.3 1822.6 L1511.9 1822.6 L1514.1 1829.4 L1519.2 1822.6 L1523.9 1823.4 L1524.7 1826.0 L1527.3 1823.4 L1530.7 1832.9 L1535.9 1811.4 L1539.3 1806.3 L1546.7 1814.0 L1553.9 1803.7 L1558.2 1810.6 L1560.7 1806.3 L1563.8 1809.7 L1566.2 1807.1 L1568.4 1806.3 L1572.4 1801.1 L1575.8 1800.3 L1578.7 1810.6 L1582.7 1794.3 L1585.6 1796.9 L1589.0 1796.9 L1591.6 1800.3 L1593.6 1796.9 L1598.1 1804.2 L1601.5 1796.9 L1604.4 1799.4 L1606.2 1796.9 L1610.1 1813.1 L1613.9 1810.6 L1616.4 1796.9 L1619.0 1803.7 L1622.4 1790.9 L1625.0 1800.3 L1627.6 1800.3 L1630.2 1790.0 L1633.6 1784.0 L1637.0 1800.3 L1641.3 1800.3 L1646.4 1809.7 L1648.5 1806.3 L1650.2 1816.6 L1655.9 1804.6 L1658.4 1810.6 L1660.2 1803.7 L1662.7 1806.3 L1664.4 1806.3 L1667.0 1800.3 L1672.2 1820.0 L1676.4 1817.4 L1679.0 1821.7 L1680.7 1868.0 L1682.8 1855.1 L1685.0 1855.1 L1687.6 1871.4 L1690.2 1859.4 L1692.7 1853.4 L1694.4 1832.0 L1697.9 1823.4 L1699.6 1861.1 L1702.2 1861.1 L1704.4 1826.0 L1706.4 1825.1 L1709.5 1816.6 L1710.5 1816.6" stroke="#a9561f" stroke-width="2.7" fill="none" stroke-linejoin="round" stroke-linecap="round"/><path d="M1003.5 1771.40H1008.0M1003.5 1803.60H1008.0M1003.5 1835.80H1008.0M1003.5 1868.00H1008.0M1003.5 1900.20H1008.0M1003.5 1932.40H1008.0M1003.5 1964.60H1008.0M1040.30 1993.2V1997.7M1140.70 1993.2V1997.7M1241.10 1993.2V1997.7M1341.50 1993.2V1997.7M1441.90 1993.2V1997.7M1542.30 1993.2V1997.7M1642.70 1993.2V1997.7" stroke="#8a8578" stroke-width="1.2" fill="none"/><text x="996.5" y="1776.2" text-anchor="end" font-size="13.3" fill="#8a8578" font-family="Liberation Sans, sans-serif">−55</text><text x="996.5" y="1808.4" text-anchor="end" font-size="13.3" fill="#8a8578" font-family="Liberation Sans, sans-serif">−60</text><text x="996.5" y="1840.6" text-anchor="end" font-size="13.3" fill="#8a8578" font-family="Liberation Sans, sans-serif">−65</text><text x="996.5" y="1872.8" text-anchor="end" font-size="13.3" fill="#8a8578" font-family="Liberation Sans, sans-serif">−70</text><text x="996.5" y="1905.0" text-anchor="end" font-size="13.3" fill="#8a8578" font-family="Liberation Sans, sans-serif">−75</text><text x="996.5" y="1937.2" text-anchor="end" font-size="13.3" fill="#8a8578" font-family="Liberation Sans, sans-serif">−80</text><text x="996.5" y="1969.4" text-anchor="end" font-size="13.3" fill="#8a8578" font-family="Liberation Sans, sans-serif">−85</text><text x="1040.3" y="2014.1" text-anchor="middle" font-size="13.3" fill="#8a8578" font-family="Liberation Sans, sans-serif">Tue</text><text x="1140.7" y="2014.1" text-anchor="middle" font-size="13.3" fill="#8a8578" font-family="Liberation Sans, sans-serif">Wed</text><text x="1241.1" y="2014.1" text-anchor="middle" font-size="13.3" fill="#8a8578" font-family="Liberation Sans, sans-serif">Thu</text><text x="1341.5" y="2014.1" text-anchor="middle" font-size="13.3" fill="#8a8578" font-family="Liberation Sans, sans-serif">Fri</text><text x="1441.9" y="2014.1" text-anchor="middle" font-size="13.3" fill="#8a8578" font-family="Liberation Sans, sans-serif">Sat</text><text x="1542.3" y="2014.1" text-anchor="middle" font-size="13.3" fill="#8a8578" font-family="Liberation Sans, sans-serif">Sun</text><text x="1642.7" y="2014.1" text-anchor="middle" font-size="13.3" fill="#8a8578" font-family="Liberation Sans, sans-serif">Mon</text></svg>
<svg class="r" style="left:1788px;top:1756px;overflow:hidden" width="757.00" height="269.50" viewBox="1788 1756 757.00 269.50"><rect x="1822.7" y="1765.2" width="713.90" height="228.00" fill="#fff"/><path d="M1822.7 1943.60H2536.6M1822.7 1888.20H2536.6M1822.7 1832.80H2536.6M1822.7 1777.40H2536.6M1856.10 1765.2V1993.2M1957.93 1765.2V1993.2M2059.76 1765.2V1993.2M2161.59 1765.2V1993.2M2263.42 1765.2V1993.2M2365.25 1765.2V1993.2M2467.08 1765.2V1993.2" stroke="rgba(95,75,55,0.085)" stroke-width="1.3" fill="none"/><path d="M1823.2 1839.7 L1827.0 1814.9 L1829.6 1814.9 L1831.3 1838.9 L1834.2 1843.1 L1835.9 1811.4 L1839.0 1821.7 L1840.7 1828.6 L1842.4 1797.7 L1844.5 1839.7 L1845.9 1826.0 L1847.9 1826.9 L1851.0 1843.1 L1853.6 1823.4 L1857.0 1801.1 L1861.3 1839.7 L1863.9 1839.7 L1867.8 1821.7 L1869.9 1839.7 L1873.3 1832.9 L1876.7 1831.1 L1880.1 1818.3 L1882.2 1836.3 L1884.9 1836.3 L1887.9 1828.6 L1890.4 1830.3 L1893.5 1843.1 L1895.6 1818.3 L1898.1 1825.1 L1901.6 1835.4 L1905.9 1836.3 L1911.9 1809.7 L1914.1 1822.6 L1916.5 1804.6 L1918.7 1821.7 L1920.9 1808.0 L1923.0 1829.4 L1925.1 1818.3 L1927.3 1839.7 L1929.5 1811.4 L1933.3 1846.6 L1935.9 1818.3 L1937.6 1828.6 L1939.8 1808.0 L1941.9 1832.9 L1943.9 1808.0 L1946.7 1828.6 L1948.4 1797.7 L1950.4 1847.4 L1953.0 1853.4 L1954.7 1850.9 L1957.0 1818.3 L1959.0 1836.3 L1961.6 1835.4 L1965.5 1825.1 L1969.3 1833.7 L1971.4 1839.7 L1973.6 1804.6 L1975.3 1821.7 L1977.9 1797.7 L1980.4 1821.7 L1982.7 1801.1 L1984.7 1802.0 L1989.0 1846.6 L1991.2 1822.6 L1995.0 1832.0 L1997.1 1846.6 L2001.0 1825.1 L2003.6 1846.6 L2005.6 1804.6 L2008.4 1850.0 L2010.4 1832.9 L2013.5 1838.9 L2016.4 1825.1 L2018.2 1839.7 L2020.7 1974.3 L2022.8 1842.3 L2026.2 1857.7 L2029.0 1863.7 L2031.4 1853.4 L2033.6 1863.7 L2035.8 1861.1 L2039.6 1818.3 L2041.6 1838.9 L2045.6 1843.1 L2048.2 1822.6 L2051.2 1818.3 L2055.0 1818.3 L2056.7 1804.6 L2058.4 1838.9 L2062.7 1846.6 L2066.2 1836.3 L2069.6 1814.9 L2072.2 1832.9 L2076.4 1838.9 L2079.9 1840.6 L2092.7 1856.9 L2095.3 1842.3 L2097.0 1863.7 L2099.2 1814.9 L2101.6 1824.3 L2103.9 1822.6 L2105.6 1874.0 L2108.2 1846.6 L2111.6 1936.6 L2114.2 1845.7 L2118.1 1784.0 L2120.5 1846.6 L2122.7 1832.0 L2125.0 1863.7 L2128.4 1825.1 L2130.8 1839.7 L2133.9 1827.7 L2135.9 1825.1 L2138.2 1828.6 L2139.9 1814.9 L2142.4 1815.7 L2143.8 1832.0 L2145.9 1821.7 L2147.9 1839.7 L2150.2 1814.9 L2152.4 1836.3 L2154.8 1814.9 L2157.0 1818.3 L2158.7 1838.9 L2163.0 1846.6 L2165.1 1811.4 L2167.3 1828.6 L2169.0 1822.6 L2172.4 1823.4 L2175.0 1791.3 L2177.1 1832.1 L2179.9 1812.1 L2182.3 1825.2 L2186.8 1819.1 L2188.6 1833.0 L2190.6 1826.0 L2192.7 1840.0 L2194.5 1829.5 L2196.7 1840.0 L2199.0 1821.7 L2201.1 1832.1 L2205.4 1819.1 L2209.4 1850.4 L2213.6 1815.6 L2218.1 1840.0 L2220.2 1826.0 L2223.7 1843.4 L2227.1 1833.0 L2230.3 1839.1 L2233.2 1833.0 L2235.0 1840.0 L2237.2 1821.7 L2239.7 1843.4 L2243.7 1826.0 L2245.9 1846.9 L2250.1 1805.2 L2252.3 1826.0 L2254.6 1815.6 L2256.3 1846.9 L2260.2 1840.0 L2262.8 1846.9 L2266.8 1805.2 L2268.9 1840.0 L2272.3 1833.0 L2275.8 1840.0 L2279.3 1840.0 L2281.9 1815.6 L2286.2 1843.4 L2290.6 1821.7 L2294.1 1815.6 L2296.7 1853.9 L2298.8 1819.1 L2301.0 1836.5 L2303.6 1836.5 L2306.2 1822.6 L2308.5 1821.7 L2309.7 1812.1 L2312.0 1835.6 L2315.4 1791.3 L2317.9 1840.0 L2321.0 1839.1 L2324.1 1805.2 L2326.6 1828.7 L2328.3 1784.3 L2330.6 1825.2 L2332.8 1812.1 L2334.9 1836.5 L2337.5 1840.0 L2339.3 1808.7 L2341.5 1807.8 L2343.6 1801.7 L2347.4 1835.6 L2349.7 1798.2 L2351.9 1811.3 L2355.8 1813.9 L2358.4 1840.0 L2362.4 1805.2 L2366.2 1833.0 L2368.8 1826.0 L2373.1 1843.4 L2377.5 1801.7 L2379.7 1798.2 L2381.8 1843.4 L2384.4 1819.1 L2387.0 1821.7 L2390.2 1853.9 L2394.9 1840.0 L2398.3 1791.3 L2402.7 1846.9 L2404.8 1812.1 L2409.3 1846.9 L2411.4 1787.8 L2413.5 1819.1 L2418.3 1805.2 L2421.8 1843.4 L2426.2 1808.7 L2429.6 1806.1 L2434.0 1829.5 L2436.6 1832.1 L2440.9 1822.6 L2444.9 1853.9 L2447.5 1819.1 L2451.7 1843.4 L2454.0 1829.5 L2456.2 1846.9 L2458.0 1798.2 L2460.0 1819.1 L2462.1 1794.8 L2464.4 1811.3 L2467.0 1810.4 L2470.5 1843.4 L2473.1 1819.1 L2477.1 1846.9 L2480.9 1839.1 L2483.5 1841.7 L2487.9 1826.0 L2490.5 1839.1 L2493.9 1819.1 L2496.2 1846.9 L2499.2 1833.0 L2502.6 1826.0 L2504.9 1846.9 L2507.3 1833.0 L2509.6 1846.9 L2511.3 1826.0 L2513.9 1840.0 L2517.1 1840.0 L2518.3 1819.1 L2520.0 1846.9 L2521.8 1815.6 L2524.4 1819.1 L2528.7 1840.0 L2532.7 1811.3 L2536.1 1846.9 L2536.1 1993.2 L1823.2 1993.2Z" fill="#a9561f" fill-opacity="0.15"/><path d="M1823.2 1765.2V1992.7H2536.6" stroke="rgba(95,75,55,0.10)" stroke-width="1.2" fill="none"/><path d="M1823.2 1839.7 L1827.0 1814.9 L1829.6 1814.9 L1831.3 1838.9 L1834.2 1843.1 L1835.9 1811.4 L1839.0 1821.7 L1840.7 1828.6 L1842.4 1797.7 L1844.5 1839.7 L1845.9 1826.0 L1847.9 1826.9 L1851.0 1843.1 L1853.6 1823.4 L1857.0 1801.1 L1861.3 1839.7 L1863.9 1839.7 L1867.8 1821.7 L1869.9 1839.7 L1873.3 1832.9 L1876.7 1831.1 L1880.1 1818.3 L1882.2 1836.3 L1884.9 1836.3 L1887.9 1828.6 L1890.4 1830.3 L1893.5 1843.1 L1895.6 1818.3 L1898.1 1825.1 L1901.6 1835.4 L1905.9 1836.3 L1911.9 1809.7 L1914.1 1822.6 L1916.5 1804.6 L1918.7 1821.7 L1920.9 1808.0 L1923.0 1829.4 L1925.1 1818.3 L1927.3 1839.7 L1929.5 1811.4 L1933.3 1846.6 L1935.9 1818.3 L1937.6 1828.6 L1939.8 1808.0 L1941.9 1832.9 L1943.9 1808.0 L1946.7 1828.6 L1948.4 1797.7 L1950.4 1847.4 L1953.0 1853.4 L1954.7 1850.9 L1957.0 1818.3 L1959.0 1836.3 L1961.6 1835.4 L1965.5 1825.1 L1969.3 1833.7 L1971.4 1839.7 L1973.6 1804.6 L1975.3 1821.7 L1977.9 1797.7 L1980.4 1821.7 L1982.7 1801.1 L1984.7 1802.0 L1989.0 1846.6 L1991.2 1822.6 L1995.0 1832.0 L1997.1 1846.6 L2001.0 1825.1 L2003.6 1846.6 L2005.6 1804.6 L2008.4 1850.0 L2010.4 1832.9 L2013.5 1838.9 L2016.4 1825.1 L2018.2 1839.7 L2020.7 1974.3 L2022.8 1842.3 L2026.2 1857.7 L2029.0 1863.7 L2031.4 1853.4 L2033.6 1863.7 L2035.8 1861.1 L2039.6 1818.3 L2041.6 1838.9 L2045.6 1843.1 L2048.2 1822.6 L2051.2 1818.3 L2055.0 1818.3 L2056.7 1804.6 L2058.4 1838.9 L2062.7 1846.6 L2066.2 1836.3 L2069.6 1814.9 L2072.2 1832.9 L2076.4 1838.9 L2079.9 1840.6 L2092.7 1856.9 L2095.3 1842.3 L2097.0 1863.7 L2099.2 1814.9 L2101.6 1824.3 L2103.9 1822.6 L2105.6 1874.0 L2108.2 1846.6 L2111.6 1936.6 L2114.2 1845.7 L2118.1 1784.0 L2120.5 1846.6 L2122.7 1832.0 L2125.0 1863.7 L2128.4 1825.1 L2130.8 1839.7 L2133.9 1827.7 L2135.9 1825.1 L2138.2 1828.6 L2139.9 1814.9 L2142.4 1815.7 L2143.8 1832.0 L2145.9 1821.7 L2147.9 1839.7 L2150.2 1814.9 L2152.4 1836.3 L2154.8 1814.9 L2157.0 1818.3 L2158.7 1838.9 L2163.0 1846.6 L2165.1 1811.4 L2167.3 1828.6 L2169.0 1822.6 L2172.4 1823.4 L2175.0 1791.3 L2177.1 1832.1 L2179.9 1812.1 L2182.3 1825.2 L2186.8 1819.1 L2188.6 1833.0 L2190.6 1826.0 L2192.7 1840.0 L2194.5 1829.5 L2196.7 1840.0 L2199.0 1821.7 L2201.1 1832.1 L2205.4 1819.1 L2209.4 1850.4 L2213.6 1815.6 L2218.1 1840.0 L2220.2 1826.0 L2223.7 1843.4 L2227.1 1833.0 L2230.3 1839.1 L2233.2 1833.0 L2235.0 1840.0 L2237.2 1821.7 L2239.7 1843.4 L2243.7 1826.0 L2245.9 1846.9 L2250.1 1805.2 L2252.3 1826.0 L2254.6 1815.6 L2256.3 1846.9 L2260.2 1840.0 L2262.8 1846.9 L2266.8 1805.2 L2268.9 1840.0 L2272.3 1833.0 L2275.8 1840.0 L2279.3 1840.0 L2281.9 1815.6 L2286.2 1843.4 L2290.6 1821.7 L2294.1 1815.6 L2296.7 1853.9 L2298.8 1819.1 L2301.0 1836.5 L2303.6 1836.5 L2306.2 1822.6 L2308.5 1821.7 L2309.7 1812.1 L2312.0 1835.6 L2315.4 1791.3 L2317.9 1840.0 L2321.0 1839.1 L2324.1 1805.2 L2326.6 1828.7 L2328.3 1784.3 L2330.6 1825.2 L2332.8 1812.1 L2334.9 1836.5 L2337.5 1840.0 L2339.3 1808.7 L2341.5 1807.8 L2343.6 1801.7 L2347.4 1835.6 L2349.7 1798.2 L2351.9 1811.3 L2355.8 1813.9 L2358.4 1840.0 L2362.4 1805.2 L2366.2 1833.0 L2368.8 1826.0 L2373.1 1843.4 L2377.5 1801.7 L2379.7 1798.2 L2381.8 1843.4 L2384.4 1819.1 L2387.0 1821.7 L2390.2 1853.9 L2394.9 1840.0 L2398.3 1791.3 L2402.7 1846.9 L2404.8 1812.1 L2409.3 1846.9 L2411.4 1787.8 L2413.5 1819.1 L2418.3 1805.2 L2421.8 1843.4 L2426.2 1808.7 L2429.6 1806.1 L2434.0 1829.5 L2436.6 1832.1 L2440.9 1822.6 L2444.9 1853.9 L2447.5 1819.1 L2451.7 1843.4 L2454.0 1829.5 L2456.2 1846.9 L2458.0 1798.2 L2460.0 1819.1 L2462.1 1794.8 L2464.4 1811.3 L2467.0 1810.4 L2470.5 1843.4 L2473.1 1819.1 L2477.1 1846.9 L2480.9 1839.1 L2483.5 1841.7 L2487.9 1826.0 L2490.5 1839.1 L2493.9 1819.1 L2496.2 1846.9 L2499.2 1833.0 L2502.6 1826.0 L2504.9 1846.9 L2507.3 1833.0 L2509.6 1846.9 L2511.3 1826.0 L2513.9 1840.0 L2517.1 1840.0 L2518.3 1819.1 L2520.0 1846.9 L2521.8 1815.6 L2524.4 1819.1 L2528.7 1840.0 L2532.7 1811.3 L2536.1 1846.9" stroke="#a9561f" stroke-width="2.7" fill="none" stroke-linejoin="round" stroke-linecap="round"/><path d="M1818.2 1943.60H1822.7M1818.2 1888.20H1822.7M1818.2 1832.80H1822.7M1818.2 1777.40H1822.7M1856.10 1993.2V1997.7M1957.93 1993.2V1997.7M2059.76 1993.2V1997.7M2161.59 1993.2V1997.7M2263.42 1993.2V1997.7M2365.25 1993.2V1997.7M2467.08 1993.2V1997.7" stroke="#8a8578" stroke-width="1.2" fill="none"/><text x="1811.2" y="1948.4" text-anchor="end" font-size="13.3" fill="#8a8578" font-family="Liberation Sans, sans-serif">8</text><text x="1811.2" y="1893.0" text-anchor="end" font-size="13.3" fill="#8a8578" font-family="Liberation Sans, sans-serif">10</text><text x="1811.2" y="1837.6" text-anchor="end" font-size="13.3" fill="#8a8578" font-family="Liberation Sans, sans-serif">12</text><text x="1811.2" y="1782.2" text-anchor="end" font-size="13.3" fill="#8a8578" font-family="Liberation Sans, sans-serif">14</text><text x="1856.1" y="2014.1" text-anchor="middle" font-size="13.3" fill="#8a8578" font-family="Liberation Sans, sans-serif">Tue</text><text x="1957.9" y="2014.1" text-anchor="middle" font-size="13.3" fill="#8a8578" font-family="Liberation Sans, sans-serif">Wed</text><text x="2059.8" y="2014.1" text-anchor="middle" font-size="13.3" fill="#8a8578" font-family="Liberation Sans, sans-serif">Thu</text><text x="2161.6" y="2014.1" text-anchor="middle" font-size="13.3" fill="#8a8578" font-family="Liberation Sans, sans-serif">Fri</text><text x="2263.4" y="2014.1" text-anchor="middle" font-size="13.3" fill="#8a8578" font-family="Liberation Sans, sans-serif">Sat</text><text x="2365.2" y="2014.1" text-anchor="middle" font-size="13.3" fill="#8a8578" font-family="Liberation Sans, sans-serif">Sun</text><text x="2467.1" y="2014.1" text-anchor="middle" font-size="13.3" fill="#8a8578" font-family="Liberation Sans, sans-serif">Mon</text></svg>
<svg class="r" style="left:2614px;top:1756px;overflow:hidden" width="756.50" height="269.50" viewBox="2614 1756 756.50 269.50"><rect x="2668" y="1765" width="694.50" height="228.20" fill="#fff"/><path d="M2668.0 1805.30H3362.5M2668.0 1847.50H3362.5M2668.0 1889.70H3362.5M2668.0 1931.90H3362.5M2668.0 1974.10H3362.5M2700.30 1765.0V1993.2M2799.47 1765.0V1993.2M2898.64 1765.0V1993.2M2997.81 1765.0V1993.2M3096.98 1765.0V1993.2M3196.15 1765.0V1993.2M3295.32 1765.0V1993.2" stroke="rgba(95,75,55,0.085)" stroke-width="1.3" fill="none"/><path d="M2668.5 1932.3 L2670.6 1905.7 L2672.0 1932.3 L2673.7 1910.9 L2676.6 1826.0 L2678.5 1932.3 L2680.6 1953.7 L2684.0 1942.6 L2685.7 1953.7 L2687.4 1942.6 L2689.1 1953.7 L2691.2 1964.0 L2692.9 1868.9 L2695.1 1953.7 L2697.4 1804.6 L2699.8 1868.9 L2701.1 1953.7 L2703.7 1964.0 L2705.9 1964.0 L2707.7 1921.2 L2709.7 1953.7 L2711.4 1932.3 L2714.0 1964.0 L2715.7 1932.3 L2718.3 1932.3 L2720.9 1942.6 L2722.6 1942.6 L2724.3 1868.9 L2726.0 1942.6 L2730.3 1942.6 L2732.3 1964.0 L2734.6 1868.9 L2736.8 1921.2 L2738.5 1921.2 L2740.6 1847.4 L2742.3 1932.3 L2744.9 1942.6 L2748.8 1868.9 L2751.2 1953.7 L2755.1 1784.0 L2757.4 1964.0 L2759.4 1932.3 L2762.9 1932.3 L2766.3 1942.6 L2769.7 1953.7 L2773.1 1953.7 L2775.7 1857.7 L2778.3 1932.3 L2780.0 1942.6 L2781.7 1900.6 L2784.3 1910.9 L2786.0 1815.7 L2788.6 1910.9 L2790.6 1953.7 L2792.9 1953.7 L2794.6 1900.6 L2798.5 1974.3 L2800.6 1953.7 L2804.0 1953.7 L2806.6 1964.0 L2808.8 1921.2 L2810.9 1953.7 L2812.9 1910.9 L2815.2 1953.7 L2816.9 1974.3 L2819.4 1942.6 L2821.2 1942.6 L2823.2 1910.9 L2825.4 1942.6 L2827.2 1942.6 L2829.4 1974.3 L2831.4 1932.3 L2835.7 1953.7 L2837.4 1868.9 L2839.7 1953.7 L2841.7 1932.3 L2843.8 1932.3 L2846.0 1857.7 L2848.6 1942.6 L2852.4 1964.0 L2854.6 1910.9 L2856.8 1900.6 L2858.5 1857.7 L2860.6 1921.2 L2864.9 1900.6 L2868.8 1953.7 L2872.2 1942.6 L2875.2 1932.3 L2876.9 1932.3 L2879.4 1953.7 L2881.2 1921.2 L2882.9 1932.3 L2884.6 1910.9 L2887.2 1784.0 L2889.4 1932.3 L2891.4 1847.4 L2894.0 1942.6 L2896.6 1953.7 L2898.0 1953.7 L2900.0 1868.9 L2903.4 1953.7 L2906.0 1964.0 L2908.6 1953.7 L2910.6 1964.0 L2912.9 1942.6 L2914.6 1953.7 L2916.3 1942.6 L2930.9 1932.3 L2932.9 1857.7 L2936.9 1932.3 L2939.1 1889.4 L2941.2 1932.3 L2944.6 1900.6 L2948.0 1910.9 L2951.4 1837.1 L2955.7 1953.7 L2957.4 1889.4 L2959.2 1910.9 L2961.7 1910.9 L2963.8 1889.4 L2968.6 1932.3 L2970.3 1900.6 L2973.7 1953.7 L2976.8 1932.3 L2978.5 1932.3 L2980.6 1910.9 L2982.6 1942.6 L2984.0 1942.6 L2986.6 1910.9 L2990.5 1953.7 L2994.3 1932.3 L2998.6 1932.3 L3001.2 1921.2 L3002.9 1964.0 L3004.9 1815.7 L3007.2 1953.7 L3010.6 1953.7 L3013.5 1964.0 L3015.0 1953.7 L3015.7 1953.7 L3017.6 1964.0 L3019.3 1953.7 L3021.9 1974.3 L3025.6 1900.6 L3027.9 1953.7 L3029.6 1932.3 L3032.1 1889.4 L3034.2 1953.7 L3036.4 1932.3 L3039.0 1921.2 L3040.7 1878.3 L3042.4 1868.9 L3044.5 1837.1 L3046.7 1942.6 L3048.9 1942.6 L3051.0 1921.2 L3053.1 1921.2 L3055.3 1910.9 L3057.0 1889.4 L3059.2 1889.4 L3060.9 1921.2 L3063.0 1804.6 L3065.1 1932.3 L3066.8 1910.9 L3071.2 1964.0 L3074.1 1953.7 L3075.3 1953.7 L3077.6 1932.3 L3079.8 1953.7 L3081.9 1921.2 L3083.6 1910.9 L3085.6 1953.7 L3087.9 1921.2 L3090.4 1932.3 L3093.9 1974.3 L3096.4 1932.3 L3100.2 1826.0 L3102.4 1953.7 L3105.0 1953.7 L3106.7 1942.6 L3108.4 1953.7 L3111.0 1942.6 L3112.7 1889.4 L3114.4 1964.0 L3117.0 1932.3 L3119.6 1953.7 L3122.7 1910.9 L3125.1 1942.6 L3127.3 1932.3 L3129.0 1932.3 L3131.2 1910.9 L3133.6 1910.9 L3135.3 1953.7 L3137.1 1921.2 L3139.3 1932.3 L3141.5 1878.3 L3145.6 1953.7 L3147.9 1932.3 L3149.6 1953.7 L3152.2 1932.3 L3154.7 1932.3 L3159.9 1974.3 L3162.1 1878.3 L3166.2 1964.0 L3168.4 1900.6 L3170.2 1932.3 L3172.4 1932.3 L3174.4 1953.7 L3178.7 1932.3 L3181.0 1953.7 L3182.7 1953.7 L3184.7 1900.6 L3187.3 1953.7 L3189.5 1953.7 L3193.3 1921.2 L3195.9 1942.6 L3197.6 1942.6 L3201.5 1974.3 L3203.6 1953.7 L3207.9 1953.7 L3209.6 1868.9 L3211.8 1964.0 L3213.9 1953.7 L3215.9 1953.7 L3218.2 1878.3 L3220.4 1953.7 L3222.8 1953.7 L3225.0 1942.6 L3227.6 1953.7 L3230.2 1900.6 L3232.4 1974.3 L3236.2 1932.3 L3240.4 1932.3 L3243.0 1953.7 L3246.1 1932.3 L3248.5 1953.7 L3253.3 1815.7 L3255.4 1932.3 L3257.6 1921.2 L3261.5 1953.7 L3265.6 1932.3 L3268.4 1953.7 L3271.3 1953.7 L3273.9 1921.2 L3275.9 1942.6 L3278.2 1932.3 L3280.7 1953.7 L3283.3 1932.3 L3288.4 1932.3 L3290.2 1878.3 L3292.4 1964.0 L3295.3 1932.3 L3298.2 1815.7 L3300.4 1953.7 L3302.7 1953.7 L3304.7 1964.0 L3309.0 1910.9 L3311.2 1964.0 L3313.0 1932.3 L3316.7 1964.0 L3321.0 1932.3 L3323.6 1942.6 L3328.7 1942.6 L3331.8 1974.3 L3333.9 1953.7 L3337.6 1857.7 L3339.9 1921.2 L3343.3 1921.2 L3345.9 1932.3 L3348.4 1974.3 L3350.2 1932.3 L3352.4 1953.7 L3356.5 1889.4 L3358.7 1953.7 L3361.0 1932.3 L3362.0 1974.3 L3362.0 1765.0 L2668.5 1765.0Z" fill="#a9561f" fill-opacity="0.15"/><path d="M2668.5 1765.0V1992.7H3362.5" stroke="rgba(95,75,55,0.10)" stroke-width="1.2" fill="none"/><path d="M2668.5 1932.3 L2670.6 1905.7 L2672.0 1932.3 L2673.7 1910.9 L2676.6 1826.0 L2678.5 1932.3 L2680.6 1953.7 L2684.0 1942.6 L2685.7 1953.7 L2687.4 1942.6 L2689.1 1953.7 L2691.2 1964.0 L2692.9 1868.9 L2695.1 1953.7 L2697.4 1804.6 L2699.8 1868.9 L2701.1 1953.7 L2703.7 1964.0 L2705.9 1964.0 L2707.7 1921.2 L2709.7 1953.7 L2711.4 1932.3 L2714.0 1964.0 L2715.7 1932.3 L2718.3 1932.3 L2720.9 1942.6 L2722.6 1942.6 L2724.3 1868.9 L2726.0 1942.6 L2730.3 1942.6 L2732.3 1964.0 L2734.6 1868.9 L2736.8 1921.2 L2738.5 1921.2 L2740.6 1847.4 L2742.3 1932.3 L2744.9 1942.6 L2748.8 1868.9 L2751.2 1953.7 L2755.1 1784.0 L2757.4 1964.0 L2759.4 1932.3 L2762.9 1932.3 L2766.3 1942.6 L2769.7 1953.7 L2773.1 1953.7 L2775.7 1857.7 L2778.3 1932.3 L2780.0 1942.6 L2781.7 1900.6 L2784.3 1910.9 L2786.0 1815.7 L2788.6 1910.9 L2790.6 1953.7 L2792.9 1953.7 L2794.6 1900.6 L2798.5 1974.3 L2800.6 1953.7 L2804.0 1953.7 L2806.6 1964.0 L2808.8 1921.2 L2810.9 1953.7 L2812.9 1910.9 L2815.2 1953.7 L2816.9 1974.3 L2819.4 1942.6 L2821.2 1942.6 L2823.2 1910.9 L2825.4 1942.6 L2827.2 1942.6 L2829.4 1974.3 L2831.4 1932.3 L2835.7 1953.7 L2837.4 1868.9 L2839.7 1953.7 L2841.7 1932.3 L2843.8 1932.3 L2846.0 1857.7 L2848.6 1942.6 L2852.4 1964.0 L2854.6 1910.9 L2856.8 1900.6 L2858.5 1857.7 L2860.6 1921.2 L2864.9 1900.6 L2868.8 1953.7 L2872.2 1942.6 L2875.2 1932.3 L2876.9 1932.3 L2879.4 1953.7 L2881.2 1921.2 L2882.9 1932.3 L2884.6 1910.9 L2887.2 1784.0 L2889.4 1932.3 L2891.4 1847.4 L2894.0 1942.6 L2896.6 1953.7 L2898.0 1953.7 L2900.0 1868.9 L2903.4 1953.7 L2906.0 1964.0 L2908.6 1953.7 L2910.6 1964.0 L2912.9 1942.6 L2914.6 1953.7 L2916.3 1942.6 L2930.9 1932.3 L2932.9 1857.7 L2936.9 1932.3 L2939.1 1889.4 L2941.2 1932.3 L2944.6 1900.6 L2948.0 1910.9 L2951.4 1837.1 L2955.7 1953.7 L2957.4 1889.4 L2959.2 1910.9 L2961.7 1910.9 L2963.8 1889.4 L2968.6 1932.3 L2970.3 1900.6 L2973.7 1953.7 L2976.8 1932.3 L2978.5 1932.3 L2980.6 1910.9 L2982.6 1942.6 L2984.0 1942.6 L2986.6 1910.9 L2990.5 1953.7 L2994.3 1932.3 L2998.6 1932.3 L3001.2 1921.2 L3002.9 1964.0 L3004.9 1815.7 L3007.2 1953.7 L3010.6 1953.7 L3013.5 1964.0 L3015.0 1953.7 L3015.7 1953.7 L3017.6 1964.0 L3019.3 1953.7 L3021.9 1974.3 L3025.6 1900.6 L3027.9 1953.7 L3029.6 1932.3 L3032.1 1889.4 L3034.2 1953.7 L3036.4 1932.3 L3039.0 1921.2 L3040.7 1878.3 L3042.4 1868.9 L3044.5 1837.1 L3046.7 1942.6 L3048.9 1942.6 L3051.0 1921.2 L3053.1 1921.2 L3055.3 1910.9 L3057.0 1889.4 L3059.2 1889.4 L3060.9 1921.2 L3063.0 1804.6 L3065.1 1932.3 L3066.8 1910.9 L3071.2 1964.0 L3074.1 1953.7 L3075.3 1953.7 L3077.6 1932.3 L3079.8 1953.7 L3081.9 1921.2 L3083.6 1910.9 L3085.6 1953.7 L3087.9 1921.2 L3090.4 1932.3 L3093.9 1974.3 L3096.4 1932.3 L3100.2 1826.0 L3102.4 1953.7 L3105.0 1953.7 L3106.7 1942.6 L3108.4 1953.7 L3111.0 1942.6 L3112.7 1889.4 L3114.4 1964.0 L3117.0 1932.3 L3119.6 1953.7 L3122.7 1910.9 L3125.1 1942.6 L3127.3 1932.3 L3129.0 1932.3 L3131.2 1910.9 L3133.6 1910.9 L3135.3 1953.7 L3137.1 1921.2 L3139.3 1932.3 L3141.5 1878.3 L3145.6 1953.7 L3147.9 1932.3 L3149.6 1953.7 L3152.2 1932.3 L3154.7 1932.3 L3159.9 1974.3 L3162.1 1878.3 L3166.2 1964.0 L3168.4 1900.6 L3170.2 1932.3 L3172.4 1932.3 L3174.4 1953.7 L3178.7 1932.3 L3181.0 1953.7 L3182.7 1953.7 L3184.7 1900.6 L3187.3 1953.7 L3189.5 1953.7 L3193.3 1921.2 L3195.9 1942.6 L3197.6 1942.6 L3201.5 1974.3 L3203.6 1953.7 L3207.9 1953.7 L3209.6 1868.9 L3211.8 1964.0 L3213.9 1953.7 L3215.9 1953.7 L3218.2 1878.3 L3220.4 1953.7 L3222.8 1953.7 L3225.0 1942.6 L3227.6 1953.7 L3230.2 1900.6 L3232.4 1974.3 L3236.2 1932.3 L3240.4 1932.3 L3243.0 1953.7 L3246.1 1932.3 L3248.5 1953.7 L3253.3 1815.7 L3255.4 1932.3 L3257.6 1921.2 L3261.5 1953.7 L3265.6 1932.3 L3268.4 1953.7 L3271.3 1953.7 L3273.9 1921.2 L3275.9 1942.6 L3278.2 1932.3 L3280.7 1953.7 L3283.3 1932.3 L3288.4 1932.3 L3290.2 1878.3 L3292.4 1964.0 L3295.3 1932.3 L3298.2 1815.7 L3300.4 1953.7 L3302.7 1953.7 L3304.7 1964.0 L3309.0 1910.9 L3311.2 1964.0 L3313.0 1932.3 L3316.7 1964.0 L3321.0 1932.3 L3323.6 1942.6 L3328.7 1942.6 L3331.8 1974.3 L3333.9 1953.7 L3337.6 1857.7 L3339.9 1921.2 L3343.3 1921.2 L3345.9 1932.3 L3348.4 1974.3 L3350.2 1932.3 L3352.4 1953.7 L3356.5 1889.4 L3358.7 1953.7 L3361.0 1932.3 L3362.0 1974.3" stroke="#a9561f" stroke-width="2.7" fill="none" stroke-linejoin="round" stroke-linecap="round"/><path d="M2663.5 1805.30H2668.0M2663.5 1847.50H2668.0M2663.5 1889.70H2668.0M2663.5 1931.90H2668.0M2663.5 1974.10H2668.0M2700.30 1993.2V1997.7M2799.47 1993.2V1997.7M2898.64 1993.2V1997.7M2997.81 1993.2V1997.7M3096.98 1993.2V1997.7M3196.15 1993.2V1997.7M3295.32 1993.2V1997.7" stroke="#8a8578" stroke-width="1.2" fill="none"/><text x="2656.5" y="1810.1" text-anchor="end" font-size="13.3" fill="#8a8578" font-family="Liberation Sans, sans-serif">−112</text><text x="2656.5" y="1852.3" text-anchor="end" font-size="13.3" fill="#8a8578" font-family="Liberation Sans, sans-serif">−114</text><text x="2656.5" y="1894.5" text-anchor="end" font-size="13.3" fill="#8a8578" font-family="Liberation Sans, sans-serif">−116</text><text x="2656.5" y="1936.7" text-anchor="end" font-size="13.3" fill="#8a8578" font-family="Liberation Sans, sans-serif">−118</text><text x="2656.5" y="1978.9" text-anchor="end" font-size="13.3" fill="#8a8578" font-family="Liberation Sans, sans-serif">−120</text><text x="2700.3" y="2014.1" text-anchor="middle" font-size="13.3" fill="#8a8578" font-family="Liberation Sans, sans-serif">Tue</text><text x="2799.5" y="2014.1" text-anchor="middle" font-size="13.3" fill="#8a8578" font-family="Liberation Sans, sans-serif">Wed</text><text x="2898.6" y="2014.1" text-anchor="middle" font-size="13.3" fill="#8a8578" font-family="Liberation Sans, sans-serif">Thu</text><text x="2997.8" y="2014.1" text-anchor="middle" font-size="13.3" fill="#8a8578" font-family="Liberation Sans, sans-serif">Fri</text><text x="3097.0" y="2014.1" text-anchor="middle" font-size="13.3" fill="#8a8578" font-family="Liberation Sans, sans-serif">Sat</text><text x="3196.2" y="2014.1" text-anchor="middle" font-size="13.3" fill="#8a8578" font-family="Liberation Sans, sans-serif">Sun</text><text x="3295.3" y="2014.1" text-anchor="middle" font-size="13.3" fill="#8a8578" font-family="Liberation Sans, sans-serif">Mon</text></svg>
<svg class="r" style="left:962px;top:2397px;overflow:hidden" width="757.50" height="268.00" viewBox="962 2397 757.50 268.00"><rect x="997.6" y="2406.2" width="713.20" height="227.80" fill="#fff"/><path d="M997.6 2598.50H1710.8M997.6 2559.00H1710.8M997.6 2519.50H1710.8M997.6 2480.00H1710.8M997.6 2440.50H1710.8M1030.00 2406.2V2634.0M1131.90 2406.2V2634.0M1233.80 2406.2V2634.0M1335.70 2406.2V2634.0M1437.60 2406.2V2634.0M1539.50 2406.2V2634.0M1641.40 2406.2V2634.0" stroke="rgba(95,75,55,0.085)" stroke-width="1.3" fill="none"/><path d="M998.1 2520.8 L1001.3 2485.2 L1005.6 2508.6 L1007.7 2514.7 L1009.5 2499.9 L1011.7 2524.3 L1014.0 2509.5 L1016.1 2525.1 L1018.2 2493.0 L1020.4 2501.7 L1024.4 2533.8 L1026.5 2525.1 L1028.6 2527.8 L1030.8 2513.8 L1034.3 2556.4 L1035.5 2582.5 L1037.3 2597.3 L1041.8 2612.9 L1043.5 2597.3 L1046.0 2611.2 L1050.0 2586.8 L1052.2 2611.2 L1054.7 2597.3 L1057.8 2605.1 L1060.4 2594.7 L1063.0 2577.3 L1064.7 2578.2 L1069.1 2541.7 L1071.7 2549.5 L1074.3 2547.7 L1077.8 2510.4 L1081.3 2544.3 L1083.9 2526.9 L1085.9 2546.9 L1088.7 2525.1 L1090.5 2568.6 L1093.4 2557.3 L1096.9 2503.4 L1100.9 2548.6 L1103.3 2541.7 L1106.8 2539.0 L1111.7 2527.8 L1113.8 2535.6 L1116.5 2559.0 L1118.3 2535.6 L1120.4 2539.0 L1122.4 2537.3 L1124.7 2545.1 L1126.4 2571.2 L1129.0 2565.1 L1130.8 2554.7 L1132.9 2566.9 L1135.1 2567.7 L1139.1 2586.0 L1141.6 2604.2 L1143.8 2602.5 L1147.8 2592.9 L1149.9 2612.0 L1154.3 2615.5 L1156.9 2611.2 L1158.9 2599.0 L1161.2 2592.9 L1162.9 2592.1 L1164.7 2566.0 L1169.0 2568.6 L1171.6 2506.0 L1174.2 2512.1 L1176.3 2542.5 L1178.6 2541.7 L1181.2 2546.0 L1183.8 2537.3 L1186.1 2564.3 L1188.1 2522.5 L1190.8 2523.4 L1192.5 2528.6 L1194.2 2516.5 L1196.8 2485.2 L1198.9 2486.0 L1200.7 2517.3 L1202.9 2519.1 L1205.5 2513.8 L1207.3 2519.9 L1209.0 2549.5 L1213.3 2553.0 L1215.6 2520.8 L1219.8 2571.2 L1222.6 2553.0 L1224.6 2553.0 L1226.4 2546.0 L1228.5 2564.3 L1233.0 2530.4 L1236.8 2572.1 L1238.9 2548.6 L1241.2 2575.5 L1244.6 2601.6 L1247.6 2589.5 L1252.1 2606.0 L1257.7 2600.8 L1266.7 2587.7 L1269.0 2573.8 L1273.3 2494.7 L1277.7 2554.7 L1280.6 2519.9 L1283.4 2521.7 L1285.8 2515.6 L1288.1 2520.8 L1292.4 2521.7 L1294.5 2546.9 L1298.5 2507.8 L1301.1 2522.5 L1302.9 2515.6 L1305.5 2533.0 L1307.7 2513.0 L1313.3 2535.6 L1318.2 2539.0 L1320.2 2506.9 L1324.1 2541.7 L1328.6 2488.6 L1330.7 2515.6 L1332.8 2497.3 L1336.8 2487.8 L1339.0 2549.5 L1342.8 2521.7 L1345.4 2557.3 L1347.7 2531.2 L1351.5 2554.7 L1355.0 2592.1 L1357.8 2582.5 L1360.1 2543.4 L1362.5 2556.4 L1364.8 2574.7 L1367.0 2569.5 L1369.5 2550.3 L1371.7 2539.9 L1372.9 2475.6 L1375.7 2471.3 L1379.5 2496.5 L1382.2 2460.0 L1385.6 2453.9 L1387.4 2475.6 L1390.0 2459.1 L1392.6 2461.7 L1394.3 2486.0 L1396.9 2478.2 L1400.4 2425.2 L1402.1 2480.0 L1404.2 2460.0 L1406.5 2469.5 L1409.1 2523.4 L1411.2 2533.0 L1415.2 2500.8 L1417.8 2572.1 L1421.3 2556.4 L1424.4 2539.0 L1428.2 2560.8 L1432.6 2499.9 L1436.9 2535.6 L1439.5 2542.5 L1443.0 2588.6 L1445.2 2575.5 L1449.4 2592.9 L1452.5 2580.8 L1455.2 2587.7 L1457.8 2578.2 L1459.8 2586.8 L1463.0 2580.8 L1465.1 2586.8 L1468.2 2579.0 L1470.8 2553.0 L1476.9 2504.3 L1483.0 2484.3 L1485.6 2500.8 L1488.2 2501.7 L1489.9 2508.6 L1492.5 2496.5 L1495.1 2499.1 L1497.7 2507.8 L1501.2 2476.5 L1504.3 2473.0 L1506.4 2496.5 L1509.0 2497.3 L1511.3 2524.3 L1513.4 2532.1 L1515.5 2513.8 L1519.5 2556.4 L1522.1 2528.6 L1524.2 2528.6 L1526.4 2520.8 L1528.2 2526.0 L1530.8 2551.2 L1534.6 2541.7 L1536.8 2561.6 L1538.6 2533.0 L1540.8 2562.5 L1542.9 2562.5 L1547.3 2598.1 L1549.5 2582.5 L1553.4 2597.3 L1556.8 2599.0 L1560.0 2598.1 L1562.4 2612.0 L1564.1 2604.2 L1566.4 2611.2 L1569.0 2604.2 L1573.3 2587.7 L1575.6 2583.4 L1577.3 2567.7 L1579.4 2566.9 L1582.9 2553.0 L1586.4 2523.4 L1588.1 2523.4 L1591.6 2559.9 L1595.1 2554.7 L1597.7 2536.4 L1600.3 2540.8 L1602.4 2557.3 L1604.1 2528.6 L1606.9 2540.8 L1610.7 2515.6 L1615.1 2567.7 L1617.3 2536.4 L1619.4 2547.7 L1622.0 2536.4 L1623.8 2546.9 L1627.7 2533.8 L1629.8 2506.0 L1632.4 2521.7 L1634.7 2499.9 L1640.3 2573.8 L1642.9 2578.2 L1645.1 2554.7 L1649.0 2589.5 L1653.3 2599.9 L1658.0 2606.8 L1663.7 2604.2 L1667.2 2597.3 L1670.7 2585.1 L1674.2 2584.2 L1678.8 2560.8 L1681.1 2561.6 L1683.4 2515.6 L1686.3 2523.4 L1689.8 2586.8 L1693.3 2556.4 L1695.9 2551.2 L1697.6 2559.0 L1700.2 2539.9 L1703.7 2556.4 L1706.3 2577.3 L1709.4 2561.6 L1710.3 2560.8 L1710.3 2634.0 L998.1 2634.0Z" fill="#a9561f" fill-opacity="0.15"/><path d="M998.1 2406.2V2633.5H1710.8" stroke="rgba(95,75,55,0.10)" stroke-width="1.2" fill="none"/><path d="M998.1 2520.8 L1001.3 2485.2 L1005.6 2508.6 L1007.7 2514.7 L1009.5 2499.9 L1011.7 2524.3 L1014.0 2509.5 L1016.1 2525.1 L1018.2 2493.0 L1020.4 2501.7 L1024.4 2533.8 L1026.5 2525.1 L1028.6 2527.8 L1030.8 2513.8 L1034.3 2556.4 L1035.5 2582.5 L1037.3 2597.3 L1041.8 2612.9 L1043.5 2597.3 L1046.0 2611.2 L1050.0 2586.8 L1052.2 2611.2 L1054.7 2597.3 L1057.8 2605.1 L1060.4 2594.7 L1063.0 2577.3 L1064.7 2578.2 L1069.1 2541.7 L1071.7 2549.5 L1074.3 2547.7 L1077.8 2510.4 L1081.3 2544.3 L1083.9 2526.9 L1085.9 2546.9 L1088.7 2525.1 L1090.5 2568.6 L1093.4 2557.3 L1096.9 2503.4 L1100.9 2548.6 L1103.3 2541.7 L1106.8 2539.0 L1111.7 2527.8 L1113.8 2535.6 L1116.5 2559.0 L1118.3 2535.6 L1120.4 2539.0 L1122.4 2537.3 L1124.7 2545.1 L1126.4 2571.2 L1129.0 2565.1 L1130.8 2554.7 L1132.9 2566.9 L1135.1 2567.7 L1139.1 2586.0 L1141.6 2604.2 L1143.8 2602.5 L1147.8 2592.9 L1149.9 2612.0 L1154.3 2615.5 L1156.9 2611.2 L1158.9 2599.0 L1161.2 2592.9 L1162.9 2592.1 L1164.7 2566.0 L1169.0 2568.6 L1171.6 2506.0 L1174.2 2512.1 L1176.3 2542.5 L1178.6 2541.7 L1181.2 2546.0 L1183.8 2537.3 L1186.1 2564.3 L1188.1 2522.5 L1190.8 2523.4 L1192.5 2528.6 L1194.2 2516.5 L1196.8 2485.2 L1198.9 2486.0 L1200.7 2517.3 L1202.9 2519.1 L1205.5 2513.8 L1207.3 2519.9 L1209.0 2549.5 L1213.3 2553.0 L1215.6 2520.8 L1219.8 2571.2 L1222.6 2553.0 L1224.6 2553.0 L1226.4 2546.0 L1228.5 2564.3 L1233.0 2530.4 L1236.8 2572.1 L1238.9 2548.6 L1241.2 2575.5 L1244.6 2601.6 L1247.6 2589.5 L1252.1 2606.0 L1257.7 2600.8 L1266.7 2587.7 L1269.0 2573.8 L1273.3 2494.7 L1277.7 2554.7 L1280.6 2519.9 L1283.4 2521.7 L1285.8 2515.6 L1288.1 2520.8 L1292.4 2521.7 L1294.5 2546.9 L1298.5 2507.8 L1301.1 2522.5 L1302.9 2515.6 L1305.5 2533.0 L1307.7 2513.0 L1313.3 2535.6 L1318.2 2539.0 L1320.2 2506.9 L1324.1 2541.7 L1328.6 2488.6 L1330.7 2515.6 L1332.8 2497.3 L1336.8 2487.8 L1339.0 2549.5 L1342.8 2521.7 L1345.4 2557.3 L1347.7 2531.2 L1351.5 2554.7 L1355.0 2592.1 L1357.8 2582.5 L1360.1 2543.4 L1362.5 2556.4 L1364.8 2574.7 L1367.0 2569.5 L1369.5 2550.3 L1371.7 2539.9 L1372.9 2475.6 L1375.7 2471.3 L1379.5 2496.5 L1382.2 2460.0 L1385.6 2453.9 L1387.4 2475.6 L1390.0 2459.1 L1392.6 2461.7 L1394.3 2486.0 L1396.9 2478.2 L1400.4 2425.2 L1402.1 2480.0 L1404.2 2460.0 L1406.5 2469.5 L1409.1 2523.4 L1411.2 2533.0 L1415.2 2500.8 L1417.8 2572.1 L1421.3 2556.4 L1424.4 2539.0 L1428.2 2560.8 L1432.6 2499.9 L1436.9 2535.6 L1439.5 2542.5 L1443.0 2588.6 L1445.2 2575.5 L1449.4 2592.9 L1452.5 2580.8 L1455.2 2587.7 L1457.8 2578.2 L1459.8 2586.8 L1463.0 2580.8 L1465.1 2586.8 L1468.2 2579.0 L1470.8 2553.0 L1476.9 2504.3 L1483.0 2484.3 L1485.6 2500.8 L1488.2 2501.7 L1489.9 2508.6 L1492.5 2496.5 L1495.1 2499.1 L1497.7 2507.8 L1501.2 2476.5 L1504.3 2473.0 L1506.4 2496.5 L1509.0 2497.3 L1511.3 2524.3 L1513.4 2532.1 L1515.5 2513.8 L1519.5 2556.4 L1522.1 2528.6 L1524.2 2528.6 L1526.4 2520.8 L1528.2 2526.0 L1530.8 2551.2 L1534.6 2541.7 L1536.8 2561.6 L1538.6 2533.0 L1540.8 2562.5 L1542.9 2562.5 L1547.3 2598.1 L1549.5 2582.5 L1553.4 2597.3 L1556.8 2599.0 L1560.0 2598.1 L1562.4 2612.0 L1564.1 2604.2 L1566.4 2611.2 L1569.0 2604.2 L1573.3 2587.7 L1575.6 2583.4 L1577.3 2567.7 L1579.4 2566.9 L1582.9 2553.0 L1586.4 2523.4 L1588.1 2523.4 L1591.6 2559.9 L1595.1 2554.7 L1597.7 2536.4 L1600.3 2540.8 L1602.4 2557.3 L1604.1 2528.6 L1606.9 2540.8 L1610.7 2515.6 L1615.1 2567.7 L1617.3 2536.4 L1619.4 2547.7 L1622.0 2536.4 L1623.8 2546.9 L1627.7 2533.8 L1629.8 2506.0 L1632.4 2521.7 L1634.7 2499.9 L1640.3 2573.8 L1642.9 2578.2 L1645.1 2554.7 L1649.0 2589.5 L1653.3 2599.9 L1658.0 2606.8 L1663.7 2604.2 L1667.2 2597.3 L1670.7 2585.1 L1674.2 2584.2 L1678.8 2560.8 L1681.1 2561.6 L1683.4 2515.6 L1686.3 2523.4 L1689.8 2586.8 L1693.3 2556.4 L1695.9 2551.2 L1697.6 2559.0 L1700.2 2539.9 L1703.7 2556.4 L1706.3 2577.3 L1709.4 2561.6 L1710.3 2560.8" stroke="#a9561f" stroke-width="2.7" fill="none" stroke-linejoin="round" stroke-linecap="round"/><path d="M993.1 2598.50H997.6M993.1 2559.00H997.6M993.1 2519.50H997.6M993.1 2480.00H997.6M993.1 2440.50H997.6M1030.00 2634.0V2638.5M1131.90 2634.0V2638.5M1233.80 2634.0V2638.5M1335.70 2634.0V2638.5M1437.60 2634.0V2638.5M1539.50 2634.0V2638.5M1641.40 2634.0V2638.5" stroke="#8a8578" stroke-width="1.2" fill="none"/><text x="986.1" y="2603.3" text-anchor="end" font-size="13.3" fill="#8a8578" font-family="Liberation Sans, sans-serif">5</text><text x="986.1" y="2563.8" text-anchor="end" font-size="13.3" fill="#8a8578" font-family="Liberation Sans, sans-serif">10</text><text x="986.1" y="2524.3" text-anchor="end" font-size="13.3" fill="#8a8578" font-family="Liberation Sans, sans-serif">15</text><text x="986.1" y="2484.8" text-anchor="end" font-size="13.3" fill="#8a8578" font-family="Liberation Sans, sans-serif">20</text><text x="986.1" y="2445.3" text-anchor="end" font-size="13.3" fill="#8a8578" font-family="Liberation Sans, sans-serif">25</text><text x="1030.0" y="2654.9" text-anchor="middle" font-size="13.3" fill="#8a8578" font-family="Liberation Sans, sans-serif">Tue</text><text x="1131.9" y="2654.9" text-anchor="middle" font-size="13.3" fill="#8a8578" font-family="Liberation Sans, sans-serif">Wed</text><text x="1233.8" y="2654.9" text-anchor="middle" font-size="13.3" fill="#8a8578" font-family="Liberation Sans, sans-serif">Thu</text><text x="1335.7" y="2654.9" text-anchor="middle" font-size="13.3" fill="#8a8578" font-family="Liberation Sans, sans-serif">Fri</text><text x="1437.6" y="2654.9" text-anchor="middle" font-size="13.3" fill="#8a8578" font-family="Liberation Sans, sans-serif">Sat</text><text x="1539.5" y="2654.9" text-anchor="middle" font-size="13.3" fill="#8a8578" font-family="Liberation Sans, sans-serif">Sun</text><text x="1641.4" y="2654.9" text-anchor="middle" font-size="13.3" fill="#8a8578" font-family="Liberation Sans, sans-serif">Mon</text></svg>
<svg class="r" style="left:1788px;top:2397px;overflow:hidden" width="757.00" height="268.00" viewBox="1788 2397 757.00 268.00"><rect x="1823.8" y="2406.3" width="712.80" height="227.70" fill="#fff"/><path d="M1823.8 2599.40H2536.6M1823.8 2553.90H2536.6M1823.8 2508.40H2536.6M1823.8 2462.90H2536.6M1823.8 2417.40H2536.6M1856.10 2406.3V2634.0M1957.93 2406.3V2634.0M2059.76 2406.3V2634.0M2161.59 2406.3V2634.0M2263.42 2406.3V2634.0M2365.25 2406.3V2634.0M2467.08 2406.3V2634.0" stroke="rgba(95,75,55,0.085)" stroke-width="1.3" fill="none"/><path d="M1824.3 2502.5 L1827.5 2471.3 L1831.5 2499.1 L1833.8 2498.2 L1836.2 2493.0 L1837.9 2519.9 L1839.7 2512.1 L1841.1 2518.2 L1842.5 2513.8 L1844.2 2495.6 L1846.3 2500.8 L1848.4 2519.9 L1850.6 2526.9 L1852.9 2510.4 L1855.0 2533.0 L1857.6 2516.5 L1860.5 2581.6 L1867.1 2613.8 L1869.8 2596.4 L1871.5 2609.4 L1873.2 2605.1 L1876.2 2583.4 L1878.4 2612.9 L1880.7 2593.8 L1883.7 2601.6 L1885.4 2600.8 L1888.9 2571.2 L1891.5 2569.5 L1895.0 2538.2 L1897.6 2541.7 L1899.8 2551.2 L1903.6 2507.8 L1907.1 2533.0 L1909.7 2526.9 L1912.0 2541.7 L1914.4 2518.2 L1916.7 2566.0 L1919.3 2559.0 L1923.1 2501.7 L1927.1 2540.8 L1930.6 2529.5 L1933.2 2529.5 L1937.5 2513.0 L1941.9 2533.0 L1944.0 2518.2 L1946.2 2529.5 L1948.5 2516.5 L1950.6 2528.6 L1952.7 2561.6 L1957.2 2543.4 L1959.6 2558.2 L1961.3 2558.2 L1964.1 2570.3 L1967.6 2599.9 L1971.1 2596.4 L1973.5 2592.1 L1976.3 2612.0 L1980.1 2614.7 L1983.2 2604.2 L1986.7 2590.3 L1988.8 2589.5 L1990.9 2558.2 L1994.9 2563.4 L1997.2 2511.2 L1999.6 2508.6 L2001.3 2533.8 L2004.1 2531.2 L2006.2 2534.7 L2008.3 2541.7 L2010.0 2527.8 L2012.3 2554.7 L2014.5 2510.4 L2017.5 2519.1 L2018.7 2519.1 L2020.4 2509.5 L2022.7 2474.7 L2025.0 2486.9 L2027.0 2514.7 L2029.1 2519.9 L2031.4 2508.6 L2033.1 2514.7 L2035.7 2545.1 L2037.8 2537.3 L2040.1 2540.8 L2041.8 2507.8 L2044.1 2556.4 L2046.2 2558.2 L2048.8 2544.3 L2052.3 2533.0 L2054.9 2559.9 L2059.2 2511.2 L2062.7 2554.7 L2065.3 2542.5 L2067.9 2563.4 L2071.4 2593.8 L2074.0 2586.8 L2075.7 2590.3 L2078.3 2603.4 L2084.4 2593.8 L2092.7 2582.5 L2094.8 2567.7 L2099.2 2488.6 L2101.4 2500.8 L2103.5 2540.8 L2105.6 2509.5 L2108.7 2508.6 L2110.5 2519.1 L2111.9 2501.7 L2114.3 2513.8 L2116.0 2506.0 L2118.8 2509.5 L2120.6 2540.8 L2124.7 2493.0 L2127.0 2512.1 L2129.2 2511.2 L2131.3 2527.8 L2133.4 2490.4 L2137.4 2516.5 L2140.0 2519.1 L2143.5 2532.1 L2145.6 2501.7 L2148.4 2504.3 L2150.5 2527.8 L2152.5 2519.1 L2154.3 2474.7 L2157.1 2499.1 L2160.5 2476.5 L2163.0 2478.2 L2164.7 2536.4 L2167.0 2531.2 L2169.2 2512.1 L2171.3 2550.3 L2173.4 2521.7 L2175.0 2525.1 L2175.7 2540.8 L2177.6 2544.3 L2178.3 2547.7 L2179.9 2586.8 L2182.0 2589.5 L2183.7 2573.8 L2186.3 2534.7 L2188.9 2546.0 L2191.0 2560.8 L2192.7 2561.6 L2194.5 2539.0 L2196.7 2529.5 L2198.5 2456.5 L2201.9 2460.8 L2205.4 2479.1 L2207.2 2447.8 L2211.5 2435.6 L2213.6 2470.4 L2215.8 2455.6 L2218.1 2449.5 L2219.8 2475.6 L2222.3 2474.7 L2226.3 2425.2 L2228.5 2477.3 L2230.6 2461.7 L2233.2 2463.4 L2235.5 2511.2 L2237.2 2520.8 L2241.4 2487.8 L2243.1 2566.0 L2246.3 2547.7 L2249.7 2533.8 L2254.1 2549.5 L2258.4 2492.1 L2261.0 2519.9 L2264.5 2538.2 L2266.8 2566.9 L2269.7 2579.9 L2271.5 2566.9 L2274.9 2588.6 L2278.4 2582.5 L2281.4 2586.0 L2284.2 2582.5 L2286.2 2590.3 L2288.8 2586.0 L2291.1 2586.8 L2293.2 2575.5 L2295.3 2579.0 L2301.0 2509.5 L2307.1 2481.7 L2309.7 2483.4 L2312.0 2493.9 L2314.0 2494.7 L2315.8 2505.2 L2318.4 2492.1 L2320.1 2492.1 L2322.7 2509.5 L2328.0 2489.5 L2330.6 2497.3 L2333.5 2513.8 L2334.9 2513.8 L2337.5 2536.4 L2339.3 2537.3 L2341.5 2521.7 L2345.3 2552.1 L2347.9 2514.7 L2350.5 2511.2 L2353.2 2515.6 L2356.6 2543.4 L2360.6 2525.1 L2362.7 2550.3 L2364.8 2523.4 L2367.1 2553.8 L2369.3 2555.6 L2371.1 2566.0 L2373.5 2594.7 L2375.8 2586.0 L2378.4 2602.5 L2381.0 2595.5 L2383.2 2606.8 L2385.3 2605.1 L2387.9 2612.9 L2390.2 2607.7 L2392.3 2615.5 L2394.9 2605.1 L2399.2 2587.7 L2401.3 2582.5 L2402.7 2568.6 L2405.3 2566.9 L2408.8 2553.0 L2411.7 2521.7 L2414.9 2553.0 L2417.5 2553.0 L2419.2 2545.1 L2421.5 2542.5 L2423.9 2521.7 L2426.2 2526.9 L2428.4 2545.1 L2430.2 2512.1 L2432.6 2528.6 L2436.6 2497.3 L2440.9 2532.1 L2443.5 2496.5 L2445.3 2499.1 L2447.5 2494.7 L2449.6 2502.5 L2452.2 2499.1 L2456.2 2465.2 L2458.3 2480.0 L2460.4 2458.2 L2462.7 2468.7 L2467.0 2540.8 L2468.7 2548.6 L2470.8 2528.6 L2474.3 2571.2 L2476.6 2575.5 L2480.9 2591.2 L2486.1 2602.5 L2488.7 2593.8 L2491.0 2582.5 L2493.1 2586.8 L2496.5 2570.3 L2500.0 2567.7 L2502.6 2568.6 L2504.4 2552.1 L2507.0 2546.9 L2509.1 2481.7 L2511.3 2494.7 L2514.8 2566.9 L2517.1 2537.3 L2520.0 2525.1 L2521.8 2524.3 L2524.0 2534.7 L2526.4 2513.8 L2530.4 2533.8 L2532.7 2559.9 L2534.4 2541.7 L2536.1 2539.9 L2536.1 2634.0 L1824.3 2634.0Z" fill="#a9561f" fill-opacity="0.15"/><path d="M1824.3 2406.3V2633.5H2536.6" stroke="rgba(95,75,55,0.10)" stroke-width="1.2" fill="none"/><path d="M1824.3 2502.5 L1827.5 2471.3 L1831.5 2499.1 L1833.8 2498.2 L1836.2 2493.0 L1837.9 2519.9 L1839.7 2512.1 L1841.1 2518.2 L1842.5 2513.8 L1844.2 2495.6 L1846.3 2500.8 L1848.4 2519.9 L1850.6 2526.9 L1852.9 2510.4 L1855.0 2533.0 L1857.6 2516.5 L1860.5 2581.6 L1867.1 2613.8 L1869.8 2596.4 L1871.5 2609.4 L1873.2 2605.1 L1876.2 2583.4 L1878.4 2612.9 L1880.7 2593.8 L1883.7 2601.6 L1885.4 2600.8 L1888.9 2571.2 L1891.5 2569.5 L1895.0 2538.2 L1897.6 2541.7 L1899.8 2551.2 L1903.6 2507.8 L1907.1 2533.0 L1909.7 2526.9 L1912.0 2541.7 L1914.4 2518.2 L1916.7 2566.0 L1919.3 2559.0 L1923.1 2501.7 L1927.1 2540.8 L1930.6 2529.5 L1933.2 2529.5 L1937.5 2513.0 L1941.9 2533.0 L1944.0 2518.2 L1946.2 2529.5 L1948.5 2516.5 L1950.6 2528.6 L1952.7 2561.6 L1957.2 2543.4 L1959.6 2558.2 L1961.3 2558.2 L1964.1 2570.3 L1967.6 2599.9 L1971.1 2596.4 L1973.5 2592.1 L1976.3 2612.0 L1980.1 2614.7 L1983.2 2604.2 L1986.7 2590.3 L1988.8 2589.5 L1990.9 2558.2 L1994.9 2563.4 L1997.2 2511.2 L1999.6 2508.6 L2001.3 2533.8 L2004.1 2531.2 L2006.2 2534.7 L2008.3 2541.7 L2010.0 2527.8 L2012.3 2554.7 L2014.5 2510.4 L2017.5 2519.1 L2018.7 2519.1 L2020.4 2509.5 L2022.7 2474.7 L2025.0 2486.9 L2027.0 2514.7 L2029.1 2519.9 L2031.4 2508.6 L2033.1 2514.7 L2035.7 2545.1 L2037.8 2537.3 L2040.1 2540.8 L2041.8 2507.8 L2044.1 2556.4 L2046.2 2558.2 L2048.8 2544.3 L2052.3 2533.0 L2054.9 2559.9 L2059.2 2511.2 L2062.7 2554.7 L2065.3 2542.5 L2067.9 2563.4 L2071.4 2593.8 L2074.0 2586.8 L2075.7 2590.3 L2078.3 2603.4 L2084.4 2593.8 L2092.7 2582.5 L2094.8 2567.7 L2099.2 2488.6 L2101.4 2500.8 L2103.5 2540.8 L2105.6 2509.5 L2108.7 2508.6 L2110.5 2519.1 L2111.9 2501.7 L2114.3 2513.8 L2116.0 2506.0 L2118.8 2509.5 L2120.6 2540.8 L2124.7 2493.0 L2127.0 2512.1 L2129.2 2511.2 L2131.3 2527.8 L2133.4 2490.4 L2137.4 2516.5 L2140.0 2519.1 L2143.5 2532.1 L2145.6 2501.7 L2148.4 2504.3 L2150.5 2527.8 L2152.5 2519.1 L2154.3 2474.7 L2157.1 2499.1 L2160.5 2476.5 L2163.0 2478.2 L2164.7 2536.4 L2167.0 2531.2 L2169.2 2512.1 L2171.3 2550.3 L2173.4 2521.7 L2175.0 2525.1 L2175.7 2540.8 L2177.6 2544.3 L2178.3 2547.7 L2179.9 2586.8 L2182.0 2589.5 L2183.7 2573.8 L2186.3 2534.7 L2188.9 2546.0 L2191.0 2560.8 L2192.7 2561.6 L2194.5 2539.0 L2196.7 2529.5 L2198.5 2456.5 L2201.9 2460.8 L2205.4 2479.1 L2207.2 2447.8 L2211.5 2435.6 L2213.6 2470.4 L2215.8 2455.6 L2218.1 2449.5 L2219.8 2475.6 L2222.3 2474.7 L2226.3 2425.2 L2228.5 2477.3 L2230.6 2461.7 L2233.2 2463.4 L2235.5 2511.2 L2237.2 2520.8 L2241.4 2487.8 L2243.1 2566.0 L2246.3 2547.7 L2249.7 2533.8 L2254.1 2549.5 L2258.4 2492.1 L2261.0 2519.9 L2264.5 2538.2 L2266.8 2566.9 L2269.7 2579.9 L2271.5 2566.9 L2274.9 2588.6 L2278.4 2582.5 L2281.4 2586.0 L2284.2 2582.5 L2286.2 2590.3 L2288.8 2586.0 L2291.1 2586.8 L2293.2 2575.5 L2295.3 2579.0 L2301.0 2509.5 L2307.1 2481.7 L2309.7 2483.4 L2312.0 2493.9 L2314.0 2494.7 L2315.8 2505.2 L2318.4 2492.1 L2320.1 2492.1 L2322.7 2509.5 L2328.0 2489.5 L2330.6 2497.3 L2333.5 2513.8 L2334.9 2513.8 L2337.5 2536.4 L2339.3 2537.3 L2341.5 2521.7 L2345.3 2552.1 L2347.9 2514.7 L2350.5 2511.2 L2353.2 2515.6 L2356.6 2543.4 L2360.6 2525.1 L2362.7 2550.3 L2364.8 2523.4 L2367.1 2553.8 L2369.3 2555.6 L2371.1 2566.0 L2373.5 2594.7 L2375.8 2586.0 L2378.4 2602.5 L2381.0 2595.5 L2383.2 2606.8 L2385.3 2605.1 L2387.9 2612.9 L2390.2 2607.7 L2392.3 2615.5 L2394.9 2605.1 L2399.2 2587.7 L2401.3 2582.5 L2402.7 2568.6 L2405.3 2566.9 L2408.8 2553.0 L2411.7 2521.7 L2414.9 2553.0 L2417.5 2553.0 L2419.2 2545.1 L2421.5 2542.5 L2423.9 2521.7 L2426.2 2526.9 L2428.4 2545.1 L2430.2 2512.1 L2432.6 2528.6 L2436.6 2497.3 L2440.9 2532.1 L2443.5 2496.5 L2445.3 2499.1 L2447.5 2494.7 L2449.6 2502.5 L2452.2 2499.1 L2456.2 2465.2 L2458.3 2480.0 L2460.4 2458.2 L2462.7 2468.7 L2467.0 2540.8 L2468.7 2548.6 L2470.8 2528.6 L2474.3 2571.2 L2476.6 2575.5 L2480.9 2591.2 L2486.1 2602.5 L2488.7 2593.8 L2491.0 2582.5 L2493.1 2586.8 L2496.5 2570.3 L2500.0 2567.7 L2502.6 2568.6 L2504.4 2552.1 L2507.0 2546.9 L2509.1 2481.7 L2511.3 2494.7 L2514.8 2566.9 L2517.1 2537.3 L2520.0 2525.1 L2521.8 2524.3 L2524.0 2534.7 L2526.4 2513.8 L2530.4 2533.8 L2532.7 2559.9 L2534.4 2541.7 L2536.1 2539.9" stroke="#a9561f" stroke-width="2.7" fill="none" stroke-linejoin="round" stroke-linecap="round"/><path d="M1819.3 2599.40H1823.8M1819.3 2553.90H1823.8M1819.3 2508.40H1823.8M1819.3 2462.90H1823.8M1819.3 2417.40H1823.8M1856.10 2634.0V2638.5M1957.93 2634.0V2638.5M2059.76 2634.0V2638.5M2161.59 2634.0V2638.5M2263.42 2634.0V2638.5M2365.25 2634.0V2638.5M2467.08 2634.0V2638.5" stroke="#8a8578" stroke-width="1.2" fill="none"/><text x="1812.3" y="2604.2" text-anchor="end" font-size="13.3" fill="#8a8578" font-family="Liberation Sans, sans-serif">2</text><text x="1812.3" y="2558.7" text-anchor="end" font-size="13.3" fill="#8a8578" font-family="Liberation Sans, sans-serif">4</text><text x="1812.3" y="2513.2" text-anchor="end" font-size="13.3" fill="#8a8578" font-family="Liberation Sans, sans-serif">6</text><text x="1812.3" y="2467.7" text-anchor="end" font-size="13.3" fill="#8a8578" font-family="Liberation Sans, sans-serif">8</text><text x="1812.3" y="2422.2" text-anchor="end" font-size="13.3" fill="#8a8578" font-family="Liberation Sans, sans-serif">10</text><text x="1856.1" y="2654.9" text-anchor="middle" font-size="13.3" fill="#8a8578" font-family="Liberation Sans, sans-serif">Tue</text><text x="1957.9" y="2654.9" text-anchor="middle" font-size="13.3" fill="#8a8578" font-family="Liberation Sans, sans-serif">Wed</text><text x="2059.8" y="2654.9" text-anchor="middle" font-size="13.3" fill="#8a8578" font-family="Liberation Sans, sans-serif">Thu</text><text x="2161.6" y="2654.9" text-anchor="middle" font-size="13.3" fill="#8a8578" font-family="Liberation Sans, sans-serif">Fri</text><text x="2263.4" y="2654.9" text-anchor="middle" font-size="13.3" fill="#8a8578" font-family="Liberation Sans, sans-serif">Sat</text><text x="2365.2" y="2654.9" text-anchor="middle" font-size="13.3" fill="#8a8578" font-family="Liberation Sans, sans-serif">Sun</text><text x="2467.1" y="2654.9" text-anchor="middle" font-size="13.3" fill="#8a8578" font-family="Liberation Sans, sans-serif">Mon</text></svg>
<svg class="r" style="left:2614px;top:2397px;overflow:hidden" width="756.50" height="268.00" viewBox="2614 2397 756.50 268.00"><rect x="2649.4" y="2406.3" width="713.10" height="227.70" fill="#fff"/><path d="M2649.4 2596.50H3362.5M2649.4 2556.85H3362.5M2649.4 2517.20H3362.5M2649.4 2477.55H3362.5M2649.4 2437.90H3362.5M2681.70 2406.3V2634.0M2783.65 2406.3V2634.0M2885.60 2406.3V2634.0M2987.55 2406.3V2634.0M3089.50 2406.3V2634.0M3191.45 2406.3V2634.0M3293.40 2406.3V2634.0" stroke="rgba(95,75,55,0.085)" stroke-width="1.3" fill="none"/><path d="M2649.9 2520.9 L2653.1 2485.1 L2657.4 2508.7 L2659.5 2514.8 L2661.3 2499.9 L2663.5 2524.4 L2665.8 2509.5 L2667.9 2525.2 L2670.0 2493.0 L2672.2 2501.7 L2676.2 2534.0 L2678.3 2525.2 L2680.4 2527.9 L2682.6 2513.9 L2686.1 2556.6 L2687.3 2582.8 L2689.1 2597.6 L2693.6 2613.4 L2695.3 2597.6 L2697.8 2611.6 L2701.8 2587.2 L2704.0 2611.6 L2706.5 2597.6 L2709.6 2605.5 L2712.2 2595.0 L2714.8 2577.6 L2716.5 2578.5 L2720.9 2541.8 L2723.5 2549.7 L2726.1 2547.9 L2729.6 2510.4 L2733.1 2544.4 L2735.7 2527.0 L2737.7 2547.1 L2740.5 2525.2 L2742.3 2568.9 L2745.2 2557.5 L2748.7 2503.4 L2752.7 2548.8 L2755.1 2541.8 L2758.6 2539.2 L2763.5 2527.9 L2765.6 2535.7 L2768.3 2559.3 L2770.1 2535.7 L2772.2 2539.2 L2774.2 2537.5 L2776.5 2545.3 L2778.2 2571.5 L2780.8 2565.4 L2782.6 2554.9 L2784.7 2567.1 L2786.9 2568.0 L2790.9 2586.3 L2793.4 2604.6 L2795.6 2602.9 L2799.6 2593.3 L2801.7 2612.5 L2806.1 2616.0 L2808.7 2611.6 L2810.7 2599.4 L2813.0 2593.3 L2814.7 2592.4 L2816.5 2566.2 L2820.8 2568.9 L2823.4 2506.1 L2826.0 2512.2 L2828.1 2542.7 L2830.4 2541.8 L2833.0 2546.2 L2835.6 2537.5 L2837.9 2564.5 L2839.9 2522.6 L2842.6 2523.5 L2844.3 2528.7 L2846.0 2516.5 L2848.6 2485.1 L2850.7 2486.0 L2852.5 2517.4 L2854.7 2519.1 L2857.3 2513.9 L2859.1 2520.0 L2860.8 2549.7 L2865.1 2553.2 L2867.4 2520.9 L2871.6 2571.5 L2874.4 2553.2 L2876.4 2553.2 L2878.2 2546.2 L2880.3 2564.5 L2884.8 2530.5 L2888.6 2572.4 L2890.7 2548.8 L2893.0 2575.8 L2896.4 2602.0 L2899.4 2589.8 L2903.9 2606.4 L2909.5 2601.1 L2918.5 2588.1 L2920.8 2574.1 L2925.1 2494.7 L2929.5 2554.9 L2932.4 2520.0 L2935.2 2521.8 L2937.6 2515.6 L2939.9 2520.9 L2944.2 2521.8 L2946.3 2547.1 L2950.3 2507.8 L2952.9 2522.6 L2954.7 2515.6 L2957.3 2533.1 L2959.5 2513.0 L2965.1 2535.7 L2970.0 2539.2 L2972.0 2506.9 L2975.9 2541.8 L2980.4 2488.6 L2982.5 2515.6 L2984.6 2497.3 L2988.6 2487.7 L2990.8 2549.7 L2994.6 2521.8 L2997.2 2557.5 L2999.5 2531.4 L3003.3 2554.9 L3006.8 2592.4 L3009.6 2582.8 L3011.9 2543.6 L3014.3 2556.6 L3016.6 2575.0 L3018.8 2569.7 L3021.3 2550.5 L3023.5 2540.1 L3024.7 2475.5 L3027.5 2471.2 L3031.3 2496.5 L3034.0 2459.8 L3037.4 2453.7 L3039.2 2475.5 L3041.8 2458.9 L3044.4 2461.6 L3046.1 2486.0 L3048.7 2478.1 L3052.2 2424.9 L3053.9 2479.9 L3056.0 2459.8 L3058.3 2469.4 L3060.9 2523.5 L3063.0 2533.1 L3067.0 2500.8 L3069.6 2572.4 L3073.1 2556.6 L3076.2 2539.2 L3080.0 2561.0 L3084.4 2499.9 L3088.7 2535.7 L3091.3 2542.7 L3094.8 2588.9 L3097.0 2575.8 L3101.2 2593.3 L3104.3 2581.1 L3107.0 2588.1 L3109.6 2578.5 L3111.6 2587.2 L3114.8 2581.1 L3116.9 2587.2 L3120.0 2579.3 L3122.6 2553.2 L3128.7 2504.3 L3134.8 2484.2 L3137.4 2500.8 L3140.0 2501.7 L3141.7 2508.7 L3144.3 2496.5 L3146.9 2499.1 L3149.5 2507.8 L3153.0 2476.4 L3156.1 2472.9 L3158.2 2496.5 L3160.8 2497.3 L3163.1 2524.4 L3165.2 2532.2 L3167.3 2513.9 L3171.3 2556.6 L3173.9 2528.7 L3176.0 2528.7 L3178.2 2520.9 L3180.0 2526.1 L3182.6 2551.4 L3186.4 2541.8 L3188.6 2561.9 L3190.4 2533.1 L3192.6 2562.8 L3194.7 2562.8 L3199.1 2598.5 L3201.3 2582.8 L3205.2 2597.6 L3208.6 2599.4 L3211.8 2598.5 L3214.2 2612.5 L3215.9 2604.6 L3218.2 2611.6 L3220.8 2604.6 L3225.1 2588.1 L3227.4 2583.7 L3229.1 2568.0 L3231.2 2567.1 L3234.7 2553.2 L3238.2 2523.5 L3239.9 2523.5 L3243.4 2560.1 L3246.9 2554.9 L3249.5 2536.6 L3252.1 2540.9 L3254.2 2557.5 L3255.9 2528.7 L3258.7 2540.9 L3262.5 2515.6 L3266.9 2568.0 L3269.1 2536.6 L3271.2 2547.9 L3273.8 2536.6 L3275.6 2547.1 L3279.5 2534.0 L3281.6 2506.1 L3284.2 2521.8 L3286.5 2499.9 L3292.1 2574.1 L3294.7 2578.5 L3296.9 2554.9 L3300.8 2589.8 L3305.1 2600.3 L3309.8 2607.2 L3315.5 2604.6 L3319.0 2597.6 L3322.5 2585.4 L3326.0 2584.6 L3330.6 2561.0 L3332.9 2561.9 L3335.2 2515.6 L3338.1 2523.5 L3341.6 2587.2 L3345.1 2556.6 L3347.7 2551.4 L3349.4 2559.3 L3352.0 2540.1 L3355.5 2556.6 L3358.1 2577.6 L3361.2 2561.9 L3362.0 2561.0 L3362.0 2634.0 L2649.9 2634.0Z" fill="#a9561f" fill-opacity="0.15"/><path d="M2649.9 2406.3V2633.5H3362.5" stroke="rgba(95,75,55,0.10)" stroke-width="1.2" fill="none"/><path d="M2649.9 2520.9 L2653.1 2485.1 L2657.4 2508.7 L2659.5 2514.8 L2661.3 2499.9 L2663.5 2524.4 L2665.8 2509.5 L2667.9 2525.2 L2670.0 2493.0 L2672.2 2501.7 L2676.2 2534.0 L2678.3 2525.2 L2680.4 2527.9 L2682.6 2513.9 L2686.1 2556.6 L2687.3 2582.8 L2689.1 2597.6 L2693.6 2613.4 L2695.3 2597.6 L2697.8 2611.6 L2701.8 2587.2 L2704.0 2611.6 L2706.5 2597.6 L2709.6 2605.5 L2712.2 2595.0 L2714.8 2577.6 L2716.5 2578.5 L2720.9 2541.8 L2723.5 2549.7 L2726.1 2547.9 L2729.6 2510.4 L2733.1 2544.4 L2735.7 2527.0 L2737.7 2547.1 L2740.5 2525.2 L2742.3 2568.9 L2745.2 2557.5 L2748.7 2503.4 L2752.7 2548.8 L2755.1 2541.8 L2758.6 2539.2 L2763.5 2527.9 L2765.6 2535.7 L2768.3 2559.3 L2770.1 2535.7 L2772.2 2539.2 L2774.2 2537.5 L2776.5 2545.3 L2778.2 2571.5 L2780.8 2565.4 L2782.6 2554.9 L2784.7 2567.1 L2786.9 2568.0 L2790.9 2586.3 L2793.4 2604.6 L2795.6 2602.9 L2799.6 2593.3 L2801.7 2612.5 L2806.1 2616.0 L2808.7 2611.6 L2810.7 2599.4 L2813.0 2593.3 L2814.7 2592.4 L2816.5 2566.2 L2820.8 2568.9 L2823.4 2506.1 L2826.0 2512.2 L2828.1 2542.7 L2830.4 2541.8 L2833.0 2546.2 L2835.6 2537.5 L2837.9 2564.5 L2839.9 2522.6 L2842.6 2523.5 L2844.3 2528.7 L2846.0 2516.5 L2848.6 2485.1 L2850.7 2486.0 L2852.5 2517.4 L2854.7 2519.1 L2857.3 2513.9 L2859.1 2520.0 L2860.8 2549.7 L2865.1 2553.2 L2867.4 2520.9 L2871.6 2571.5 L2874.4 2553.2 L2876.4 2553.2 L2878.2 2546.2 L2880.3 2564.5 L2884.8 2530.5 L2888.6 2572.4 L2890.7 2548.8 L2893.0 2575.8 L2896.4 2602.0 L2899.4 2589.8 L2903.9 2606.4 L2909.5 2601.1 L2918.5 2588.1 L2920.8 2574.1 L2925.1 2494.7 L2929.5 2554.9 L2932.4 2520.0 L2935.2 2521.8 L2937.6 2515.6 L2939.9 2520.9 L2944.2 2521.8 L2946.3 2547.1 L2950.3 2507.8 L2952.9 2522.6 L2954.7 2515.6 L2957.3 2533.1 L2959.5 2513.0 L2965.1 2535.7 L2970.0 2539.2 L2972.0 2506.9 L2975.9 2541.8 L2980.4 2488.6 L2982.5 2515.6 L2984.6 2497.3 L2988.6 2487.7 L2990.8 2549.7 L2994.6 2521.8 L2997.2 2557.5 L2999.5 2531.4 L3003.3 2554.9 L3006.8 2592.4 L3009.6 2582.8 L3011.9 2543.6 L3014.3 2556.6 L3016.6 2575.0 L3018.8 2569.7 L3021.3 2550.5 L3023.5 2540.1 L3024.7 2475.5 L3027.5 2471.2 L3031.3 2496.5 L3034.0 2459.8 L3037.4 2453.7 L3039.2 2475.5 L3041.8 2458.9 L3044.4 2461.6 L3046.1 2486.0 L3048.7 2478.1 L3052.2 2424.9 L3053.9 2479.9 L3056.0 2459.8 L3058.3 2469.4 L3060.9 2523.5 L3063.0 2533.1 L3067.0 2500.8 L3069.6 2572.4 L3073.1 2556.6 L3076.2 2539.2 L3080.0 2561.0 L3084.4 2499.9 L3088.7 2535.7 L3091.3 2542.7 L3094.8 2588.9 L3097.0 2575.8 L3101.2 2593.3 L3104.3 2581.1 L3107.0 2588.1 L3109.6 2578.5 L3111.6 2587.2 L3114.8 2581.1 L3116.9 2587.2 L3120.0 2579.3 L3122.6 2553.2 L3128.7 2504.3 L3134.8 2484.2 L3137.4 2500.8 L3140.0 2501.7 L3141.7 2508.7 L3144.3 2496.5 L3146.9 2499.1 L3149.5 2507.8 L3153.0 2476.4 L3156.1 2472.9 L3158.2 2496.5 L3160.8 2497.3 L3163.1 2524.4 L3165.2 2532.2 L3167.3 2513.9 L3171.3 2556.6 L3173.9 2528.7 L3176.0 2528.7 L3178.2 2520.9 L3180.0 2526.1 L3182.6 2551.4 L3186.4 2541.8 L3188.6 2561.9 L3190.4 2533.1 L3192.6 2562.8 L3194.7 2562.8 L3199.1 2598.5 L3201.3 2582.8 L3205.2 2597.6 L3208.6 2599.4 L3211.8 2598.5 L3214.2 2612.5 L3215.9 2604.6 L3218.2 2611.6 L3220.8 2604.6 L3225.1 2588.1 L3227.4 2583.7 L3229.1 2568.0 L3231.2 2567.1 L3234.7 2553.2 L3238.2 2523.5 L3239.9 2523.5 L3243.4 2560.1 L3246.9 2554.9 L3249.5 2536.6 L3252.1 2540.9 L3254.2 2557.5 L3255.9 2528.7 L3258.7 2540.9 L3262.5 2515.6 L3266.9 2568.0 L3269.1 2536.6 L3271.2 2547.9 L3273.8 2536.6 L3275.6 2547.1 L3279.5 2534.0 L3281.6 2506.1 L3284.2 2521.8 L3286.5 2499.9 L3292.1 2574.1 L3294.7 2578.5 L3296.9 2554.9 L3300.8 2589.8 L3305.1 2600.3 L3309.8 2607.2 L3315.5 2604.6 L3319.0 2597.6 L3322.5 2585.4 L3326.0 2584.6 L3330.6 2561.0 L3332.9 2561.9 L3335.2 2515.6 L3338.1 2523.5 L3341.6 2587.2 L3345.1 2556.6 L3347.7 2551.4 L3349.4 2559.3 L3352.0 2540.1 L3355.5 2556.6 L3358.1 2577.6 L3361.2 2561.9 L3362.0 2561.0" stroke="#a9561f" stroke-width="2.7" fill="none" stroke-linejoin="round" stroke-linecap="round"/><path d="M2644.9 2596.50H2649.4M2644.9 2556.85H2649.4M2644.9 2517.20H2649.4M2644.9 2477.55H2649.4M2644.9 2437.90H2649.4M2681.70 2634.0V2638.5M2783.65 2634.0V2638.5M2885.60 2634.0V2638.5M2987.55 2634.0V2638.5M3089.50 2634.0V2638.5M3191.45 2634.0V2638.5M3293.40 2634.0V2638.5" stroke="#8a8578" stroke-width="1.2" fill="none"/><text x="2637.9" y="2601.3" text-anchor="end" font-size="13.3" fill="#8a8578" font-family="Liberation Sans, sans-serif">5</text><text x="2637.9" y="2561.6" text-anchor="end" font-size="13.3" fill="#8a8578" font-family="Liberation Sans, sans-serif">10</text><text x="2637.9" y="2522.0" text-anchor="end" font-size="13.3" fill="#8a8578" font-family="Liberation Sans, sans-serif">15</text><text x="2637.9" y="2482.3" text-anchor="end" font-size="13.3" fill="#8a8578" font-family="Liberation Sans, sans-serif">20</text><text x="2637.9" y="2442.7" text-anchor="end" font-size="13.3" fill="#8a8578" font-family="Liberation Sans, sans-serif">25</text><text x="2681.7" y="2654.9" text-anchor="middle" font-size="13.3" fill="#8a8578" font-family="Liberation Sans, sans-serif">Tue</text><text x="2783.6" y="2654.9" text-anchor="middle" font-size="13.3" fill="#8a8578" font-family="Liberation Sans, sans-serif">Wed</text><text x="2885.6" y="2654.9" text-anchor="middle" font-size="13.3" fill="#8a8578" font-family="Liberation Sans, sans-serif">Thu</text><text x="2987.5" y="2654.9" text-anchor="middle" font-size="13.3" fill="#8a8578" font-family="Liberation Sans, sans-serif">Fri</text><text x="3089.5" y="2654.9" text-anchor="middle" font-size="13.3" fill="#8a8578" font-family="Liberation Sans, sans-serif">Sat</text><text x="3191.4" y="2654.9" text-anchor="middle" font-size="13.3" fill="#8a8578" font-family="Liberation Sans, sans-serif">Sun</text><text x="3293.4" y="2654.9" text-anchor="middle" font-size="13.3" fill="#8a8578" font-family="Liberation Sans, sans-serif">Mon</text></svg>
</div>
<div class="r" style="left:112px;top:76px;width:3420px;height:2818px;border-radius:42px;box-shadow:inset 0 0 0 1.3px rgba(255,255,255,0.9);"></div>
</body></html>
